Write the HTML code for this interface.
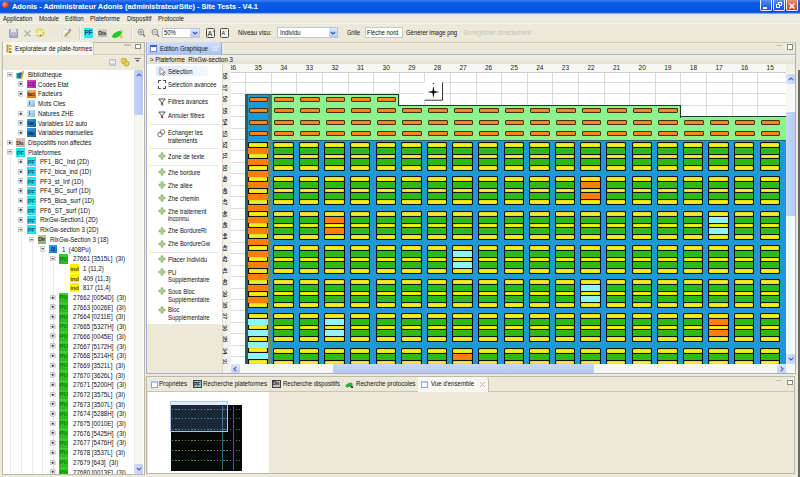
<!DOCTYPE html><html><head><meta charset="utf-8"><style>
*{margin:0;padding:0;box-sizing:border-box}
html,body{width:800px;height:477px;overflow:hidden;background:#ECE9D8;font-family:"Liberation Sans", sans-serif;position:relative}
div,span,svg{position:absolute}
.t{white-space:pre;line-height:1;color:#111;transform-origin:0 50%}
</style></head><body>
<div style="left:0px;top:0px;width:800px;height:13.8px;background:linear-gradient(#3a7ef4 0%,#0b5ae6 22%,#0056e6 70%,#0a4cd0 88%,#5a90ee 94%,#c8d8f4 100%)"></div>
<div style="left:2px;top:1.5px;width:6.8px;height:6.8px;border-radius:50%;background:radial-gradient(circle at 35% 35%,#ff9a70,#d03010 70%)"></div>
<span class="t" style="left:12px;top:2.63px;font-size:7.8px;transform:scaleX(0.950);font-weight:bold;color:#fff;-webkit-text-stroke:0.05px #fff">Adonis - Administrateur Adonis (administrateurSite) - Site Tests - V4.1</span>
<div style="left:760px;top:0px;width:11.5px;height:11px;background:linear-gradient(#5a92f8,#2a64e8 60%,#2058d8);border:1px solid #e8eeff;border-top:none;border-radius:0 0 2px 2px"></div>
<div style="left:773px;top:0px;width:11.5px;height:11px;background:linear-gradient(#5a92f8,#2a64e8 60%,#2058d8);border:1px solid #e8eeff;border-top:none;border-radius:0 0 2px 2px"></div>
<div style="left:786px;top:0px;width:11.5px;height:11px;background:linear-gradient(#f0906a,#dc5a30 60%,#c84820);border:1px solid #e8eeff;border-top:none;border-radius:0 0 2px 2px"></div>
<div style="left:762.5px;top:7px;width:4.5px;height:1.6px;background:#fff"></div>
<div style="left:777.5px;top:2.2px;width:4.5px;height:3.8px;border:1px solid #fff;border-top-width:1.3px"></div>
<div style="left:775.8px;top:4.2px;width:4.5px;height:3.8px;border:1px solid #fff;border-top-width:1.3px;background:#3a70ea"></div>
<svg style="left:788px;top:1.5px" width="8" height="8"><path d="M1.5 1.5L6.5 6.5M6.5 1.5L1.5 6.5" stroke="#fff" stroke-width="1.6"/></svg>
<div style="left:0px;top:13.6px;width:800px;height:10.6px;background:#EDEADF;border-top:1px solid #dfe6f4;border-bottom:1px solid #f6f3e6"></div>
<span class="t" style="left:3px;top:14.98px;font-size:7px;transform:scaleX(0.853);">Application</span>
<span class="t" style="left:38.5px;top:14.98px;font-size:7px;transform:scaleX(0.867);">Module</span>
<span class="t" style="left:65px;top:14.98px;font-size:7px;transform:scaleX(0.878);">Edition</span>
<span class="t" style="left:89.8px;top:14.98px;font-size:7px;transform:scaleX(0.883);">Plateforme</span>
<span class="t" style="left:126.5px;top:14.98px;font-size:7px;transform:scaleX(0.863);">Dispositif</span>
<span class="t" style="left:157.7px;top:14.98px;font-size:7px;transform:scaleX(0.876);">Protocole</span>
<div style="left:0px;top:24px;width:800px;height:17px;background:#ECE9D8"></div>
<div style="left:9px;top:28.5px;width:9px;height:9px;background:linear-gradient(#c9c9dc,#a9a9c6);border:1px solid #9c9cb8;border-radius:1px"></div>
<div style="left:11px;top:29px;width:5px;height:3px;background:#e6e6f0"></div>
<svg style="left:23px;top:28.5px" width="9" height="9"><path d="M1.5 1.5L7.5 7.5M7.5 1.5L1.5 7.5" stroke="#b4b4ac" stroke-width="1.5"/></svg>
<svg style="left:35px;top:28px" width="10" height="9"><path d="M1.5 5A3.5 3.5 0 0 1 8 3" stroke="#e0dc70" stroke-width="2.4" fill="none"/><path d="M8.5 4A3.5 3.5 0 0 1 2 6.5" stroke="#d8d468" stroke-width="2.4" fill="none"/><circle cx="4.5" cy="4.5" r="1.8" fill="#f0f0a8"/><circle cx="5.5" cy="7.5" r="0.7" fill="#606030"/></svg>
<div style="left:49px;top:31px;width:8px;height:5px;background:#e8e6dc;border-radius:1px"></div>
<div style="left:62px;top:28.5px;width:7.5px;height:9px;background:linear-gradient(135deg,#f8f8fb,#e4e4ee);border:1px solid #dcdce4"></div>
<svg style="left:63px;top:28px" width="9" height="10"><path d="M1.8 8.2L6.8 3" stroke="#a8b040" stroke-width="2"/><path d="M6.2 2.8L7.8 1.4" stroke="#9088c8" stroke-width="2"/></svg>
<div style="left:79px;top:26px;width:2px;height:14px;background:#d8d4c4;border-right:1px solid #f6f4ec"></div>
<div style="left:83.5px;top:28px;width:9.5px;height:10px;background:#25e8f0"></div>
<span class="t" style="left:84.5px;top:30px;font-size:6.5px;font-weight:bold;color:#104080;letter-spacing:-0.3px">PF</span>
<div style="left:98px;top:28.5px;width:9px;height:8px;background:linear-gradient(#cfcdc4,#bdbab0)"></div>
<span class="t" style="left:98.3px;top:31px;font-size:5.5px;font-weight:bold;color:#303030;letter-spacing:-0.3px">Dis</span>
<svg style="left:111px;top:28px" width="14" height="11"><ellipse cx="6" cy="6.5" rx="5.5" ry="2.6" transform="rotate(-30 6 6.5)" fill="#22c830"/><circle cx="10" cy="8.5" r="1.8" fill="#e0c850"/><path d="M9 2Q11 1 12 4" stroke="#c0d0c0" fill="none"/></svg>
<div style="left:130.5px;top:26px;width:2px;height:14px;background:#d8d4c4;border-right:1px solid #f6f4ec"></div>
<svg style="left:137px;top:28px" width="9" height="10"><circle cx="3.8" cy="4" r="2.8" fill="#f0f0f0" stroke="#8a8a8a" stroke-width="1"/><path d="M5.8 6L8 8.5" stroke="#808080" stroke-width="1.4"/><path d="M2.4 4H5.2M3.8 2.6V5.4" stroke="#606060" stroke-width="0.8"/></svg>
<svg style="left:151px;top:28px" width="9" height="10"><circle cx="3.8" cy="4" r="2.8" fill="#f0f0f0" stroke="#8a8a8a" stroke-width="1"/><path d="M5.8 6L8 8.5" stroke="#808080" stroke-width="1.4"/><path d="M2.4 4H5.2" stroke="#606060" stroke-width="0.8"/></svg>
<div style="left:161.5px;top:27.7px;width:38.2px;height:10.6px;background:#fff;border:1px solid #b8c8e0"></div>
<span class="t" style="left:164.0px;top:29.08px;font-size:7px;transform:scaleX(0.850);">50%</span>
<div style="left:190.2px;top:28.7px;width:8.5px;height:8.6px;background:linear-gradient(#dfe6fb,#b9c9f4);border-radius:1px"></div>
<svg style="left:191.89999999999998px;top:31.0px" width="6" height="4"><path d="M0.8 0.8L3 3L5.2 0.8" stroke="#3050a0" stroke-width="1.2" fill="none"/></svg>
<div style="left:206px;top:28px;width:9px;height:10px;border:1px solid #4a4a4a;border-radius:1.5px;background:#f4f3ee"></div>
<div style="left:219.5px;top:28px;width:9px;height:10px;border:1px solid #4a4a4a;border-radius:1.5px;background:#f4f3ee"></div>
<span class="t" style="left:207.6px;top:29.5px;font-size:7px;-webkit-text-stroke:0">A</span>
<span class="t" style="left:212.2px;top:28.6px;font-size:4px;-webkit-text-stroke:0">+</span>
<span class="t" style="left:221.6px;top:31px;font-size:5.5px;-webkit-text-stroke:0">A</span>
<span class="t" style="left:225.3px;top:28.8px;font-size:4px;-webkit-text-stroke:0">-</span>
<span class="t" style="left:238px;top:28.68px;font-size:7px;transform:scaleX(0.879);">Niveau visu:</span>
<div style="left:277px;top:27px;width:61px;height:11.3px;background:#fff;border:1px solid #b8c8e0"></div>
<span class="t" style="left:279.5px;top:28.73px;font-size:7px;transform:scaleX(0.850);">Individu</span>
<div style="left:328.5px;top:28px;width:8.5px;height:9.3px;background:linear-gradient(#dfe6fb,#b9c9f4);border-radius:1px"></div>
<svg style="left:330.2px;top:30.65px" width="6" height="4"><path d="M0.8 0.8L3 3L5.2 0.8" stroke="#3050a0" stroke-width="1.2" fill="none"/></svg>
<span class="t" style="left:347px;top:28.68px;font-size:7px;transform:scaleX(0.796);">Grille</span>
<div style="left:365px;top:27.3px;width:38px;height:10.7px;background:#fff;border:1px solid #c8c8c0"></div>
<span class="t" style="left:367px;top:28.68px;font-size:7px;transform:scaleX(0.850);">Flèche nord</span>
<span class="t" style="left:405.5px;top:28.68px;font-size:7px;transform:scaleX(0.846);">Générer image png</span>
<span class="t" style="left:464px;top:28.68px;font-size:7px;transform:scaleX(0.921);color:#c4c2b8;-webkit-text-stroke:0">Enregistrer directement</span>
<div style="left:1.5px;top:41.5px;width:143px;height:433px;background:#fff;border:1px solid #bdb9a8"></div>
<div style="left:2.5px;top:42.5px;width:141px;height:27.2px;background:#ECE9D8"></div>
<div style="left:2.5px;top:54px;width:141px;height:1px;background:#d2cebd"></div>
<div style="left:3px;top:42px;width:91px;height:12.5px;background:#f7f6f0;border-right:1px solid #cfcbbb;border-radius:0 3px 0 0"></div>
<svg style="left:6px;top:44px" width="6" height="9"><rect x="0.5" y="0.5" width="2" height="8" fill="#c89838"/><rect x="3" y="1" width="2.5" height="2" fill="#d0a040"/><rect x="3" y="4" width="2.5" height="2" fill="#d0a040"/><rect x="3" y="7" width="2.5" height="1.8" fill="#a07020"/></svg>
<span class="t" style="left:15px;top:44.68px;font-size:7px;transform:scaleX(0.892);">Explorateur de plate-formes</span>
<div style="left:124px;top:44.3px;width:7px;height:1.5px;background:#c8c4b4"></div>
<div style="left:135.3px;top:44px;width:5.6px;height:5.3px;background:#fff;border:1px solid #8c8a80;border-top-width:1.5px"></div>
<div style="left:109px;top:58.6px;width:7px;height:7.6px;background:linear-gradient(#e4e8f0,#c4ccd8);border-radius:1px;border:1px solid #b8c0cc"></div>
<div style="left:110px;top:61.5px;width:5px;height:1.2px;background:#fff"></div>
<svg style="left:120px;top:57px" width="10" height="10"><circle cx="4" cy="4" r="2.8" fill="#e8d050" stroke="#c0a020" stroke-width="0.8"/><circle cx="6.5" cy="6.5" r="2.6" fill="#e8d050" stroke="#c0a020" stroke-width="0.8"/></svg>
<svg style="left:134px;top:58px" width="7" height="5"><path d="M0.5 0.5H6.5" stroke="#505050" stroke-width="0.8"/><path d="M1.5 2L3.5 4L5.5 2Z" fill="#505050"/></svg>
<div style="left:10px;top:155.06px;width:0.8px;height:318.94px;background:#eaeaf2"></div>
<div style="left:20.6px;top:232.62px;width:0.8px;height:241.38px;background:#eaeaf2"></div>
<div style="left:31.5px;top:242.315px;width:0.8px;height:231.685px;background:#eaeaf2"></div>
<div style="left:42.3px;top:252.01px;width:0.8px;height:221.99px;background:#eaeaf2"></div>
<div style="left:53px;top:261.70500000000004px;width:0.8px;height:212.29499999999996px;background:#eaeaf2"></div>
<div style="left:134px;top:70px;width:9px;height:404px;background:#f6f6f2;border-left:1px solid #eeeee8"></div>
<div style="left:134px;top:70px;width:8.5px;height:45px;background:linear-gradient(90deg,#c7d3f7,#b7c6f3);border-radius:1px"></div>
<svg style="left:135.5px;top:73px" width="6" height="4"><path d="M0.8 3.2L3 1L5.2 3.2" stroke="#4a64b0" stroke-width="1.2" fill="none"/></svg>
<div style="left:134px;top:464px;width:8.5px;height:10px;background:linear-gradient(90deg,#d5ddf8,#c1cdf4);border-radius:1px"></div>
<svg style="left:135.5px;top:467px" width="6" height="4"><path d="M0.8 0.8L3 3L5.2 0.8" stroke="#4a64b0" stroke-width="1.2" fill="none"/></svg>
<div style="left:2.5px;top:69.7px;width:131.5px;height:404px;overflow:hidden">
<svg style="left:4.75px;top:2.05px" width="5.5" height="5.5"><rect x="0.35" y="0.35" width="4.8" height="4.8" rx="0.9" fill="#f4f4f0" stroke="#a4a4a0" stroke-width="0.7"/><path d="M1.6 2.75H3.9" stroke="#202020" stroke-width="0.9"/></svg>
<svg style="left:13.5px;top:-2.6645352591003757e-15px" width="9" height="9"><rect x="0.5" y="3" width="3" height="5.5" fill="#1a8a8a"/><rect x="3" y="2.5" width="3" height="6" fill="#3060a0"/><rect x="5.8" y="0.5" width="1.6" height="8" fill="#d0b040" transform="rotate(15 6 4)"/></svg>
<span class="t" style="left:25.0px;top:1.38px;font-size:7px;transform:scaleX(0.880);">Bibliotheque</span>
<svg style="left:15.35px;top:11.74px" width="5.5" height="5.5"><rect x="0.35" y="0.35" width="4.8" height="4.8" rx="0.9" fill="#f4f4f0" stroke="#a4a4a0" stroke-width="0.7"/><path d="M1.6 2.75H3.9" stroke="#202020" stroke-width="0.9"/><path d="M2.75 1.6V3.9" stroke="#202020" stroke-width="0.9"/></svg>
<div style="left:24.5px;top:10.19499999999999px;width:9px;height:8.5px;background:linear-gradient(135deg,#f040c0,#c020a0)"></div>
<span class="t" style="left:25.1px;top:12.49499999999999px;font-size:5.6px;font-weight:bold;color:#70108a;letter-spacing:-0.3px">CE</span>
<span class="t" style="left:35.5px;top:11.07px;font-size:7px;transform:scaleX(0.880);">Codes Etat</span>
<svg style="left:15.35px;top:21.44px" width="5.5" height="5.5"><rect x="0.35" y="0.35" width="4.8" height="4.8" rx="0.9" fill="#f4f4f0" stroke="#a4a4a0" stroke-width="0.7"/><path d="M1.6 2.75H3.9" stroke="#202020" stroke-width="0.9"/><path d="M2.75 1.6V3.9" stroke="#202020" stroke-width="0.9"/></svg>
<div style="left:24.5px;top:19.889999999999997px;width:9px;height:8.5px;background:linear-gradient(#ffb050,#f07010)"></div>
<span class="t" style="left:24.7px;top:22.889999999999997px;font-size:4.8px;font-weight:bold;color:#602000;letter-spacing:-0.3px">fact</span>
<span class="t" style="left:35.5px;top:20.77px;font-size:7px;transform:scaleX(0.880);">Facteurs</span>
<div style="left:24.5px;top:30.585000000000004px;width:8px;height:7px;background:linear-gradient(135deg,#d8ecf8,#88b8e0)"></div>
<div style="left:26.5px;top:31.585000000000004px;width:1px;height:4px;background:#5080b0"></div>
<span class="t" style="left:35.5px;top:30.47px;font-size:7px;transform:scaleX(0.880);">Mots Cles</span>
<svg style="left:15.35px;top:40.83px" width="5.5" height="5.5"><rect x="0.35" y="0.35" width="4.8" height="4.8" rx="0.9" fill="#f4f4f0" stroke="#a4a4a0" stroke-width="0.7"/><path d="M1.6 2.75H3.9" stroke="#202020" stroke-width="0.9"/><path d="M2.75 1.6V3.9" stroke="#202020" stroke-width="0.9"/></svg>
<div style="left:24.5px;top:40.28px;width:8px;height:7px;background:linear-gradient(135deg,#d8ecf8,#88b8e0)"></div>
<div style="left:26.5px;top:41.28px;width:1px;height:4px;background:#5080b0"></div>
<span class="t" style="left:35.5px;top:40.16px;font-size:7px;transform:scaleX(0.880);">Natures ZHE</span>
<svg style="left:15.35px;top:50.52px" width="5.5" height="5.5"><rect x="0.35" y="0.35" width="4.8" height="4.8" rx="0.9" fill="#f4f4f0" stroke="#a4a4a0" stroke-width="0.7"/><path d="M1.6 2.75H3.9" stroke="#202020" stroke-width="0.9"/><path d="M2.75 1.6V3.9" stroke="#202020" stroke-width="0.9"/></svg>
<div style="left:24.5px;top:48.974999999999994px;width:9px;height:8.5px;background:linear-gradient(135deg,#40a0e8,#0860b0)"></div>
<span class="t" style="left:24.8px;top:52.175px;font-size:4.8px;font-weight:bold;color:#082858;letter-spacing:-0.3px">Var</span>
<span class="t" style="left:35.5px;top:49.85px;font-size:7px;transform:scaleX(0.880);">Variables 1/2 auto</span>
<svg style="left:15.35px;top:60.22px" width="5.5" height="5.5"><rect x="0.35" y="0.35" width="4.8" height="4.8" rx="0.9" fill="#f4f4f0" stroke="#a4a4a0" stroke-width="0.7"/><path d="M1.6 2.75H3.9" stroke="#202020" stroke-width="0.9"/><path d="M2.75 1.6V3.9" stroke="#202020" stroke-width="0.9"/></svg>
<div style="left:24.5px;top:58.670000000000016px;width:9px;height:8.5px;background:linear-gradient(135deg,#40a0e8,#0860b0)"></div>
<span class="t" style="left:24.8px;top:61.87000000000002px;font-size:4.8px;font-weight:bold;color:#082858;letter-spacing:-0.3px">Var</span>
<span class="t" style="left:35.5px;top:59.55px;font-size:7px;transform:scaleX(0.880);">Variables manuelles</span>
<svg style="left:4.75px;top:69.92px" width="5.5" height="5.5"><rect x="0.35" y="0.35" width="4.8" height="4.8" rx="0.9" fill="#f4f4f0" stroke="#a4a4a0" stroke-width="0.7"/><path d="M1.6 2.75H3.9" stroke="#202020" stroke-width="0.9"/><path d="M2.75 1.6V3.9" stroke="#202020" stroke-width="0.9"/></svg>
<div style="left:13.5px;top:68.36500000000001px;width:9px;height:8.5px;background:linear-gradient(135deg,#e8c0b0,#c8b8a8)"></div>
<span class="t" style="left:13.8px;top:71.36500000000001px;font-size:5px;font-weight:bold;color:#303030;letter-spacing:-0.3px">Dis</span>
<span class="t" style="left:25.2px;top:69.25px;font-size:7px;transform:scaleX(0.880);">Dispositifs non affectés</span>
<svg style="left:4.75px;top:79.61px" width="5.5" height="5.5"><rect x="0.35" y="0.35" width="4.8" height="4.8" rx="0.9" fill="#f4f4f0" stroke="#a4a4a0" stroke-width="0.7"/><path d="M1.6 2.75H3.9" stroke="#202020" stroke-width="0.9"/></svg>
<div style="left:13.5px;top:78.06px;width:9px;height:8.8px;background:#28e4ec"></div>
<span class="t" style="left:14.3px;top:80.06px;font-size:6px;font-weight:bold;color:#0a6078;-webkit-text-stroke:0;letter-spacing:-0.3px">PF</span>
<span class="t" style="left:25.2px;top:78.94px;font-size:7px;transform:scaleX(0.880);">Plateformes</span>
<svg style="left:15.45px;top:89.30px" width="5.5" height="5.5"><rect x="0.35" y="0.35" width="4.8" height="4.8" rx="0.9" fill="#f4f4f0" stroke="#a4a4a0" stroke-width="0.7"/><path d="M1.6 2.75H3.9" stroke="#202020" stroke-width="0.9"/><path d="M2.75 1.6V3.9" stroke="#202020" stroke-width="0.9"/></svg>
<div style="left:24.5px;top:87.755px;width:9px;height:8.8px;background:#28e4ec"></div>
<span class="t" style="left:25.3px;top:89.755px;font-size:6px;font-weight:bold;color:#0a6078;-webkit-text-stroke:0;letter-spacing:-0.3px">PF</span>
<span class="t" style="left:37.3px;top:88.63px;font-size:7px;transform:scaleX(0.880);">PF1_BC_Ind (2D)</span>
<svg style="left:15.45px;top:99.00px" width="5.5" height="5.5"><rect x="0.35" y="0.35" width="4.8" height="4.8" rx="0.9" fill="#f4f4f0" stroke="#a4a4a0" stroke-width="0.7"/><path d="M1.6 2.75H3.9" stroke="#202020" stroke-width="0.9"/><path d="M2.75 1.6V3.9" stroke="#202020" stroke-width="0.9"/></svg>
<div style="left:24.5px;top:97.44999999999999px;width:9px;height:8.8px;background:#28e4ec"></div>
<span class="t" style="left:25.3px;top:99.44999999999999px;font-size:6px;font-weight:bold;color:#0a6078;-webkit-text-stroke:0;letter-spacing:-0.3px">PF</span>
<span class="t" style="left:37.3px;top:98.33px;font-size:7px;transform:scaleX(0.880);">PF2_bica_ind (1D)</span>
<svg style="left:15.45px;top:108.70px" width="5.5" height="5.5"><rect x="0.35" y="0.35" width="4.8" height="4.8" rx="0.9" fill="#f4f4f0" stroke="#a4a4a0" stroke-width="0.7"/><path d="M1.6 2.75H3.9" stroke="#202020" stroke-width="0.9"/><path d="M2.75 1.6V3.9" stroke="#202020" stroke-width="0.9"/></svg>
<div style="left:24.5px;top:107.14500000000001px;width:9px;height:8.8px;background:#28e4ec"></div>
<span class="t" style="left:25.3px;top:109.14500000000001px;font-size:6px;font-weight:bold;color:#0a6078;-webkit-text-stroke:0;letter-spacing:-0.3px">PF</span>
<span class="t" style="left:37.3px;top:108.03px;font-size:7px;transform:scaleX(0.880);">PF3_st_Inf (1D)</span>
<svg style="left:15.45px;top:118.39px" width="5.5" height="5.5"><rect x="0.35" y="0.35" width="4.8" height="4.8" rx="0.9" fill="#f4f4f0" stroke="#a4a4a0" stroke-width="0.7"/><path d="M1.6 2.75H3.9" stroke="#202020" stroke-width="0.9"/><path d="M2.75 1.6V3.9" stroke="#202020" stroke-width="0.9"/></svg>
<div style="left:24.5px;top:116.84px;width:9px;height:8.8px;background:#28e4ec"></div>
<span class="t" style="left:25.3px;top:118.84px;font-size:6px;font-weight:bold;color:#0a6078;-webkit-text-stroke:0;letter-spacing:-0.3px">PF</span>
<span class="t" style="left:37.3px;top:117.72px;font-size:7px;transform:scaleX(0.880);">PF4_BC_surf (1D)</span>
<svg style="left:15.45px;top:128.08px" width="5.5" height="5.5"><rect x="0.35" y="0.35" width="4.8" height="4.8" rx="0.9" fill="#f4f4f0" stroke="#a4a4a0" stroke-width="0.7"/><path d="M1.6 2.75H3.9" stroke="#202020" stroke-width="0.9"/><path d="M2.75 1.6V3.9" stroke="#202020" stroke-width="0.9"/></svg>
<div style="left:24.5px;top:126.53499999999998px;width:9px;height:8.8px;background:#28e4ec"></div>
<span class="t" style="left:25.3px;top:128.53499999999997px;font-size:6px;font-weight:bold;color:#0a6078;-webkit-text-stroke:0;letter-spacing:-0.3px">PF</span>
<span class="t" style="left:37.3px;top:127.41px;font-size:7px;transform:scaleX(0.880);">PF5_Bica_surf (1D)</span>
<svg style="left:15.45px;top:137.78px" width="5.5" height="5.5"><rect x="0.35" y="0.35" width="4.8" height="4.8" rx="0.9" fill="#f4f4f0" stroke="#a4a4a0" stroke-width="0.7"/><path d="M1.6 2.75H3.9" stroke="#202020" stroke-width="0.9"/><path d="M2.75 1.6V3.9" stroke="#202020" stroke-width="0.9"/></svg>
<div style="left:24.5px;top:136.23000000000002px;width:9px;height:8.8px;background:#28e4ec"></div>
<span class="t" style="left:25.3px;top:138.23000000000002px;font-size:6px;font-weight:bold;color:#0a6078;-webkit-text-stroke:0;letter-spacing:-0.3px">PF</span>
<span class="t" style="left:37.3px;top:137.11px;font-size:7px;transform:scaleX(0.880);">PF6_ST_surf (1D)</span>
<svg style="left:15.45px;top:147.48px" width="5.5" height="5.5"><rect x="0.35" y="0.35" width="4.8" height="4.8" rx="0.9" fill="#f4f4f0" stroke="#a4a4a0" stroke-width="0.7"/><path d="M1.6 2.75H3.9" stroke="#202020" stroke-width="0.9"/><path d="M2.75 1.6V3.9" stroke="#202020" stroke-width="0.9"/></svg>
<div style="left:24.5px;top:145.925px;width:9px;height:8.8px;background:#28e4ec"></div>
<span class="t" style="left:25.3px;top:147.925px;font-size:6px;font-weight:bold;color:#0a6078;-webkit-text-stroke:0;letter-spacing:-0.3px">PF</span>
<span class="t" style="left:37.3px;top:146.81px;font-size:7px;transform:scaleX(0.880);">RixGw-Section1 (2D)</span>
<svg style="left:15.45px;top:157.17px" width="5.5" height="5.5"><rect x="0.35" y="0.35" width="4.8" height="4.8" rx="0.9" fill="#f4f4f0" stroke="#a4a4a0" stroke-width="0.7"/><path d="M1.6 2.75H3.9" stroke="#202020" stroke-width="0.9"/></svg>
<div style="left:24.5px;top:155.62px;width:9px;height:8.8px;background:#28e4ec"></div>
<span class="t" style="left:25.3px;top:157.62px;font-size:6px;font-weight:bold;color:#0a6078;-webkit-text-stroke:0;letter-spacing:-0.3px">PF</span>
<span class="t" style="left:37.3px;top:156.50px;font-size:7px;transform:scaleX(0.880);">RixGw-section 3 (2D)</span>
<svg style="left:26.25px;top:166.87px" width="5.5" height="5.5"><rect x="0.35" y="0.35" width="4.8" height="4.8" rx="0.9" fill="#f4f4f0" stroke="#a4a4a0" stroke-width="0.7"/><path d="M1.6 2.75H3.9" stroke="#202020" stroke-width="0.9"/></svg>
<div style="left:35.3px;top:165.315px;width:8px;height:8.5px;background:linear-gradient(#b8c8a0,#90a878)"></div>
<span class="t" style="left:35.5px;top:167.515px;font-size:5.6px;font-weight:bold;color:#283818;-webkit-text-stroke:0;letter-spacing:-0.3px">Dir</span>
<span class="t" style="left:47.9px;top:166.20px;font-size:7px;transform:scaleX(0.880);">RixGw-Section 3 (18)</span>
<svg style="left:37.05px;top:176.56px" width="5.5" height="5.5"><rect x="0.35" y="0.35" width="4.8" height="4.8" rx="0.9" fill="#f4f4f0" stroke="#a4a4a0" stroke-width="0.7"/><path d="M1.6 2.75H3.9" stroke="#202020" stroke-width="0.9"/></svg>
<div style="left:46.1px;top:175.01px;width:8.5px;height:8.5px;background:linear-gradient(135deg,#40a8f0,#1070c8)"></div>
<span class="t" style="left:48.6px;top:177.41px;font-size:5.5px;font-weight:bold;color:#0a3070">B</span>
<span class="t" style="left:59.2px;top:175.89px;font-size:7px;transform:scaleX(0.880);">1  (408Pu)</span>
<svg style="left:47.75px;top:186.26px" width="5.5" height="5.5"><rect x="0.35" y="0.35" width="4.8" height="4.8" rx="0.9" fill="#f4f4f0" stroke="#a4a4a0" stroke-width="0.7"/><path d="M1.6 2.75H3.9" stroke="#202020" stroke-width="0.9"/></svg>
<div style="left:56.5px;top:184.20500000000004px;width:9.2px;height:9.7px;background:linear-gradient(#30d818,#20c010)"></div>
<span class="t" style="left:57.3px;top:186.90500000000003px;font-size:5.8px;font-weight:bold;color:#0a7a08;-webkit-text-stroke:0;letter-spacing:-0.2px">PU</span>
<span class="t" style="left:70.0px;top:185.59px;font-size:7px;transform:scaleX(0.880);">27661 [3515L]  (3I)</span>
<div style="left:67.5px;top:194.39999999999998px;width:9px;height:8.5px;background:#fff200"></div>
<span class="t" style="left:67.8px;top:196.2px;font-size:6px;font-weight:bold;color:#5a5000;-webkit-text-stroke:0;letter-spacing:-0.2px">ind</span>
<span class="t" style="left:80.5px;top:195.28px;font-size:7px;transform:scaleX(0.880);">1 (11,2)</span>
<div style="left:67.5px;top:204.09500000000003px;width:9px;height:8.5px;background:#fff200"></div>
<span class="t" style="left:67.8px;top:205.89500000000004px;font-size:6px;font-weight:bold;color:#5a5000;-webkit-text-stroke:0;letter-spacing:-0.2px">ind</span>
<span class="t" style="left:80.5px;top:204.98px;font-size:7px;transform:scaleX(0.880);">409 (11,3)</span>
<div style="left:67.5px;top:213.79000000000002px;width:9px;height:8.5px;background:#fff200"></div>
<span class="t" style="left:67.8px;top:215.59000000000003px;font-size:6px;font-weight:bold;color:#5a5000;-webkit-text-stroke:0;letter-spacing:-0.2px">ind</span>
<span class="t" style="left:80.5px;top:214.67px;font-size:7px;transform:scaleX(0.880);">817 (11,4)</span>
<svg style="left:47.75px;top:225.04px" width="5.5" height="5.5"><rect x="0.35" y="0.35" width="4.8" height="4.8" rx="0.9" fill="#f4f4f0" stroke="#a4a4a0" stroke-width="0.7"/><path d="M1.6 2.75H3.9" stroke="#202020" stroke-width="0.9"/><path d="M2.75 1.6V3.9" stroke="#202020" stroke-width="0.9"/></svg>
<div style="left:56.5px;top:222.985px;width:9.2px;height:9.7px;background:linear-gradient(#30d818,#20c010)"></div>
<span class="t" style="left:57.3px;top:225.685px;font-size:5.8px;font-weight:bold;color:#0a7a08;-webkit-text-stroke:0;letter-spacing:-0.2px">PU</span>
<span class="t" style="left:70.0px;top:224.37px;font-size:7px;transform:scaleX(0.880);">27662 [0054D]  (3I)</span>
<svg style="left:47.75px;top:234.73px" width="5.5" height="5.5"><rect x="0.35" y="0.35" width="4.8" height="4.8" rx="0.9" fill="#f4f4f0" stroke="#a4a4a0" stroke-width="0.7"/><path d="M1.6 2.75H3.9" stroke="#202020" stroke-width="0.9"/><path d="M2.75 1.6V3.9" stroke="#202020" stroke-width="0.9"/></svg>
<div style="left:56.5px;top:232.68px;width:9.2px;height:9.7px;background:linear-gradient(#30d818,#20c010)"></div>
<span class="t" style="left:57.3px;top:235.38px;font-size:5.8px;font-weight:bold;color:#0a7a08;-webkit-text-stroke:0;letter-spacing:-0.2px">PU</span>
<span class="t" style="left:70.0px;top:234.06px;font-size:7px;transform:scaleX(0.880);">27663 [0026E]  (3I)</span>
<svg style="left:47.75px;top:244.43px" width="5.5" height="5.5"><rect x="0.35" y="0.35" width="4.8" height="4.8" rx="0.9" fill="#f4f4f0" stroke="#a4a4a0" stroke-width="0.7"/><path d="M1.6 2.75H3.9" stroke="#202020" stroke-width="0.9"/><path d="M2.75 1.6V3.9" stroke="#202020" stroke-width="0.9"/></svg>
<div style="left:56.5px;top:242.375px;width:9.2px;height:9.7px;background:linear-gradient(#30d818,#20c010)"></div>
<span class="t" style="left:57.3px;top:245.075px;font-size:5.8px;font-weight:bold;color:#0a7a08;-webkit-text-stroke:0;letter-spacing:-0.2px">PU</span>
<span class="t" style="left:70.0px;top:243.76px;font-size:7px;transform:scaleX(0.880);">27664 [0211E]  (3I)</span>
<svg style="left:47.75px;top:254.12px" width="5.5" height="5.5"><rect x="0.35" y="0.35" width="4.8" height="4.8" rx="0.9" fill="#f4f4f0" stroke="#a4a4a0" stroke-width="0.7"/><path d="M1.6 2.75H3.9" stroke="#202020" stroke-width="0.9"/><path d="M2.75 1.6V3.9" stroke="#202020" stroke-width="0.9"/></svg>
<div style="left:56.5px;top:252.07px;width:9.2px;height:9.7px;background:linear-gradient(#30d818,#20c010)"></div>
<span class="t" style="left:57.3px;top:254.76999999999998px;font-size:5.8px;font-weight:bold;color:#0a7a08;-webkit-text-stroke:0;letter-spacing:-0.2px">PU</span>
<span class="t" style="left:70.0px;top:253.45px;font-size:7px;transform:scaleX(0.880);">27665 [5327H]  (3I)</span>
<svg style="left:47.75px;top:263.81px" width="5.5" height="5.5"><rect x="0.35" y="0.35" width="4.8" height="4.8" rx="0.9" fill="#f4f4f0" stroke="#a4a4a0" stroke-width="0.7"/><path d="M1.6 2.75H3.9" stroke="#202020" stroke-width="0.9"/><path d="M2.75 1.6V3.9" stroke="#202020" stroke-width="0.9"/></svg>
<div style="left:56.5px;top:261.765px;width:9.2px;height:9.7px;background:linear-gradient(#30d818,#20c010)"></div>
<span class="t" style="left:57.3px;top:264.465px;font-size:5.8px;font-weight:bold;color:#0a7a08;-webkit-text-stroke:0;letter-spacing:-0.2px">PU</span>
<span class="t" style="left:70.0px;top:263.14px;font-size:7px;transform:scaleX(0.880);">27666 [0045E]  (3I)</span>
<svg style="left:47.75px;top:273.51px" width="5.5" height="5.5"><rect x="0.35" y="0.35" width="4.8" height="4.8" rx="0.9" fill="#f4f4f0" stroke="#a4a4a0" stroke-width="0.7"/><path d="M1.6 2.75H3.9" stroke="#202020" stroke-width="0.9"/><path d="M2.75 1.6V3.9" stroke="#202020" stroke-width="0.9"/></svg>
<div style="left:56.5px;top:271.46000000000004px;width:9.2px;height:9.7px;background:linear-gradient(#30d818,#20c010)"></div>
<span class="t" style="left:57.3px;top:274.16px;font-size:5.8px;font-weight:bold;color:#0a7a08;-webkit-text-stroke:0;letter-spacing:-0.2px">PU</span>
<span class="t" style="left:70.0px;top:272.84px;font-size:7px;transform:scaleX(0.880);">27667 [5172H]  (3I)</span>
<svg style="left:47.75px;top:283.21px" width="5.5" height="5.5"><rect x="0.35" y="0.35" width="4.8" height="4.8" rx="0.9" fill="#f4f4f0" stroke="#a4a4a0" stroke-width="0.7"/><path d="M1.6 2.75H3.9" stroke="#202020" stroke-width="0.9"/><path d="M2.75 1.6V3.9" stroke="#202020" stroke-width="0.9"/></svg>
<div style="left:56.5px;top:281.15500000000003px;width:9.2px;height:9.7px;background:linear-gradient(#30d818,#20c010)"></div>
<span class="t" style="left:57.3px;top:283.855px;font-size:5.8px;font-weight:bold;color:#0a7a08;-webkit-text-stroke:0;letter-spacing:-0.2px">PU</span>
<span class="t" style="left:70.0px;top:282.54px;font-size:7px;transform:scaleX(0.880);">27668 [5214H]  (3I)</span>
<svg style="left:47.75px;top:292.90px" width="5.5" height="5.5"><rect x="0.35" y="0.35" width="4.8" height="4.8" rx="0.9" fill="#f4f4f0" stroke="#a4a4a0" stroke-width="0.7"/><path d="M1.6 2.75H3.9" stroke="#202020" stroke-width="0.9"/><path d="M2.75 1.6V3.9" stroke="#202020" stroke-width="0.9"/></svg>
<div style="left:56.5px;top:290.85px;width:9.2px;height:9.7px;background:linear-gradient(#30d818,#20c010)"></div>
<span class="t" style="left:57.3px;top:293.55px;font-size:5.8px;font-weight:bold;color:#0a7a08;-webkit-text-stroke:0;letter-spacing:-0.2px">PU</span>
<span class="t" style="left:70.0px;top:292.23px;font-size:7px;transform:scaleX(0.880);">27669 [3521L]  (3I)</span>
<svg style="left:47.75px;top:302.60px" width="5.5" height="5.5"><rect x="0.35" y="0.35" width="4.8" height="4.8" rx="0.9" fill="#f4f4f0" stroke="#a4a4a0" stroke-width="0.7"/><path d="M1.6 2.75H3.9" stroke="#202020" stroke-width="0.9"/><path d="M2.75 1.6V3.9" stroke="#202020" stroke-width="0.9"/></svg>
<div style="left:56.5px;top:300.545px;width:9.2px;height:9.7px;background:linear-gradient(#30d818,#20c010)"></div>
<span class="t" style="left:57.3px;top:303.245px;font-size:5.8px;font-weight:bold;color:#0a7a08;-webkit-text-stroke:0;letter-spacing:-0.2px">PU</span>
<span class="t" style="left:70.0px;top:301.93px;font-size:7px;transform:scaleX(0.880);">27670 [3626L]  (3I)</span>
<svg style="left:47.75px;top:312.29px" width="5.5" height="5.5"><rect x="0.35" y="0.35" width="4.8" height="4.8" rx="0.9" fill="#f4f4f0" stroke="#a4a4a0" stroke-width="0.7"/><path d="M1.6 2.75H3.9" stroke="#202020" stroke-width="0.9"/><path d="M2.75 1.6V3.9" stroke="#202020" stroke-width="0.9"/></svg>
<div style="left:56.5px;top:310.24px;width:9.2px;height:9.7px;background:linear-gradient(#30d818,#20c010)"></div>
<span class="t" style="left:57.3px;top:312.94px;font-size:5.8px;font-weight:bold;color:#0a7a08;-webkit-text-stroke:0;letter-spacing:-0.2px">PU</span>
<span class="t" style="left:70.0px;top:311.62px;font-size:7px;transform:scaleX(0.880);">27671 [5200H]  (3I)</span>
<svg style="left:47.75px;top:321.99px" width="5.5" height="5.5"><rect x="0.35" y="0.35" width="4.8" height="4.8" rx="0.9" fill="#f4f4f0" stroke="#a4a4a0" stroke-width="0.7"/><path d="M1.6 2.75H3.9" stroke="#202020" stroke-width="0.9"/><path d="M2.75 1.6V3.9" stroke="#202020" stroke-width="0.9"/></svg>
<div style="left:56.5px;top:319.935px;width:9.2px;height:9.7px;background:linear-gradient(#30d818,#20c010)"></div>
<span class="t" style="left:57.3px;top:322.635px;font-size:5.8px;font-weight:bold;color:#0a7a08;-webkit-text-stroke:0;letter-spacing:-0.2px">PU</span>
<span class="t" style="left:70.0px;top:321.31px;font-size:7px;transform:scaleX(0.880);">27672 [3575L]  (3I)</span>
<svg style="left:47.75px;top:331.68px" width="5.5" height="5.5"><rect x="0.35" y="0.35" width="4.8" height="4.8" rx="0.9" fill="#f4f4f0" stroke="#a4a4a0" stroke-width="0.7"/><path d="M1.6 2.75H3.9" stroke="#202020" stroke-width="0.9"/><path d="M2.75 1.6V3.9" stroke="#202020" stroke-width="0.9"/></svg>
<div style="left:56.5px;top:329.63px;width:9.2px;height:9.7px;background:linear-gradient(#30d818,#20c010)"></div>
<span class="t" style="left:57.3px;top:332.33px;font-size:5.8px;font-weight:bold;color:#0a7a08;-webkit-text-stroke:0;letter-spacing:-0.2px">PU</span>
<span class="t" style="left:70.0px;top:331.01px;font-size:7px;transform:scaleX(0.880);">27673 [3507L]  (3I)</span>
<svg style="left:47.75px;top:341.38px" width="5.5" height="5.5"><rect x="0.35" y="0.35" width="4.8" height="4.8" rx="0.9" fill="#f4f4f0" stroke="#a4a4a0" stroke-width="0.7"/><path d="M1.6 2.75H3.9" stroke="#202020" stroke-width="0.9"/><path d="M2.75 1.6V3.9" stroke="#202020" stroke-width="0.9"/></svg>
<div style="left:56.5px;top:339.325px;width:9.2px;height:9.7px;background:linear-gradient(#30d818,#20c010)"></div>
<span class="t" style="left:57.3px;top:342.025px;font-size:5.8px;font-weight:bold;color:#0a7a08;-webkit-text-stroke:0;letter-spacing:-0.2px">PU</span>
<span class="t" style="left:70.0px;top:340.70px;font-size:7px;transform:scaleX(0.880);">27674 [5288H]  (3I)</span>
<svg style="left:47.75px;top:351.07px" width="5.5" height="5.5"><rect x="0.35" y="0.35" width="4.8" height="4.8" rx="0.9" fill="#f4f4f0" stroke="#a4a4a0" stroke-width="0.7"/><path d="M1.6 2.75H3.9" stroke="#202020" stroke-width="0.9"/><path d="M2.75 1.6V3.9" stroke="#202020" stroke-width="0.9"/></svg>
<div style="left:56.5px;top:349.02px;width:9.2px;height:9.7px;background:linear-gradient(#30d818,#20c010)"></div>
<span class="t" style="left:57.3px;top:351.71999999999997px;font-size:5.8px;font-weight:bold;color:#0a7a08;-webkit-text-stroke:0;letter-spacing:-0.2px">PU</span>
<span class="t" style="left:70.0px;top:350.40px;font-size:7px;transform:scaleX(0.880);">27675 [0010E]  (3I)</span>
<svg style="left:47.75px;top:360.77px" width="5.5" height="5.5"><rect x="0.35" y="0.35" width="4.8" height="4.8" rx="0.9" fill="#f4f4f0" stroke="#a4a4a0" stroke-width="0.7"/><path d="M1.6 2.75H3.9" stroke="#202020" stroke-width="0.9"/><path d="M2.75 1.6V3.9" stroke="#202020" stroke-width="0.9"/></svg>
<div style="left:56.5px;top:358.71500000000003px;width:9.2px;height:9.7px;background:linear-gradient(#30d818,#20c010)"></div>
<span class="t" style="left:57.3px;top:361.415px;font-size:5.8px;font-weight:bold;color:#0a7a08;-webkit-text-stroke:0;letter-spacing:-0.2px">PU</span>
<span class="t" style="left:70.0px;top:360.10px;font-size:7px;transform:scaleX(0.880);">27676 [5425H]  (3I)</span>
<svg style="left:47.75px;top:370.46px" width="5.5" height="5.5"><rect x="0.35" y="0.35" width="4.8" height="4.8" rx="0.9" fill="#f4f4f0" stroke="#a4a4a0" stroke-width="0.7"/><path d="M1.6 2.75H3.9" stroke="#202020" stroke-width="0.9"/><path d="M2.75 1.6V3.9" stroke="#202020" stroke-width="0.9"/></svg>
<div style="left:56.5px;top:368.41px;width:9.2px;height:9.7px;background:linear-gradient(#30d818,#20c010)"></div>
<span class="t" style="left:57.3px;top:371.11px;font-size:5.8px;font-weight:bold;color:#0a7a08;-webkit-text-stroke:0;letter-spacing:-0.2px">PU</span>
<span class="t" style="left:70.0px;top:369.79px;font-size:7px;transform:scaleX(0.880);">27677 [5476H]  (3I)</span>
<svg style="left:47.75px;top:380.16px" width="5.5" height="5.5"><rect x="0.35" y="0.35" width="4.8" height="4.8" rx="0.9" fill="#f4f4f0" stroke="#a4a4a0" stroke-width="0.7"/><path d="M1.6 2.75H3.9" stroke="#202020" stroke-width="0.9"/><path d="M2.75 1.6V3.9" stroke="#202020" stroke-width="0.9"/></svg>
<div style="left:56.5px;top:378.105px;width:9.2px;height:9.7px;background:linear-gradient(#30d818,#20c010)"></div>
<span class="t" style="left:57.3px;top:380.805px;font-size:5.8px;font-weight:bold;color:#0a7a08;-webkit-text-stroke:0;letter-spacing:-0.2px">PU</span>
<span class="t" style="left:70.0px;top:379.49px;font-size:7px;transform:scaleX(0.880);">27678 [3537L]  (3I)</span>
<svg style="left:47.75px;top:389.85px" width="5.5" height="5.5"><rect x="0.35" y="0.35" width="4.8" height="4.8" rx="0.9" fill="#f4f4f0" stroke="#a4a4a0" stroke-width="0.7"/><path d="M1.6 2.75H3.9" stroke="#202020" stroke-width="0.9"/><path d="M2.75 1.6V3.9" stroke="#202020" stroke-width="0.9"/></svg>
<div style="left:56.5px;top:387.8px;width:9.2px;height:9.7px;background:linear-gradient(#30d818,#20c010)"></div>
<span class="t" style="left:57.3px;top:390.5px;font-size:5.8px;font-weight:bold;color:#0a7a08;-webkit-text-stroke:0;letter-spacing:-0.2px">PU</span>
<span class="t" style="left:70.0px;top:389.18px;font-size:7px;transform:scaleX(0.880);">27679 [643]  (3I)</span>
<svg style="left:47.75px;top:399.55px" width="5.5" height="5.5"><rect x="0.35" y="0.35" width="4.8" height="4.8" rx="0.9" fill="#f4f4f0" stroke="#a4a4a0" stroke-width="0.7"/><path d="M1.6 2.75H3.9" stroke="#202020" stroke-width="0.9"/><path d="M2.75 1.6V3.9" stroke="#202020" stroke-width="0.9"/></svg>
<div style="left:56.5px;top:397.495px;width:9.2px;height:9.7px;background:linear-gradient(#30d818,#20c010)"></div>
<span class="t" style="left:57.3px;top:400.195px;font-size:5.8px;font-weight:bold;color:#0a7a08;-webkit-text-stroke:0;letter-spacing:-0.2px">PU</span>
<span class="t" style="left:70.0px;top:398.88px;font-size:7px;transform:scaleX(0.880);">27680 [0013E]  (3I)</span>
</div>
<div style="left:146px;top:41.5px;width:649.5px;height:332px;background:#fff;border:1px solid #a8b0c6;border-top-color:#cfcbb9;border-left-color:#98b4e0"></div>
<div style="left:147px;top:42.5px;width:647.5px;height:12px;background:#ECE9D8"></div>
<div style="left:147px;top:54.4px;width:647.5px;height:1.3px;background:#a4bccc"></div>
<div style="left:147.5px;top:42.2px;width:74.5px;height:12.5px;background:linear-gradient(#d3e0fa,#a9c1f0);border-radius:0 3px 0 0;border-right:1px solid #8aa8e0"></div>
<div style="left:150px;top:44.5px;width:7px;height:7px;background:#fff;border:1px solid #6a8cc8;border-top:2px solid #3060c0"></div>
<span class="t" style="left:159.5px;top:44.88px;font-size:7px;transform:scaleX(0.853);">Edition Graphique</span>
<svg style="left:212px;top:45px" width="7" height="7"><path d="M1 1L6 6M6 1L1 6" stroke="#fff" stroke-width="1.3"/><path d="M1 1L6 6M6 1L1 6" stroke="#a0b0d0" stroke-width="0.5"/></svg>
<div style="left:776px;top:45px;width:6px;height:1.3px;background:#c4c0b0"></div>
<div style="left:787px;top:44.3px;width:6px;height:5.5px;background:#fff;border:1px solid #8c8a80;border-top-width:1.5px"></div>
<div style="left:147px;top:55.3px;width:647.5px;height:8.7px;background:linear-gradient(#f2f0e6,#e4e0d0)"></div>
<span class="t" style="left:150px;top:55.68px;font-size:7px;transform:scaleX(0.876);">&gt; Plateforme  RixGw-section 3</span>
<div style="left:147px;top:64px;width:74.5px;height:309px;background:#ECE9D8"></div>
<div style="left:147px;top:64px;width:74.5px;height:260px;background:#fff"></div>
<div style="left:156px;top:65.8px;width:52px;height:10.5px;background:linear-gradient(90deg,#dfe7f8,#f4f7fd);border-radius:1px"></div>
<div style="left:150px;top:93.6px;width:69px;height:1px;background:#e8e6dc"></div>
<div style="left:150px;top:124.3px;width:69px;height:1px;background:#e8e6dc"></div>
<div style="left:150px;top:147.7px;width:69px;height:1px;background:#e8e6dc"></div>
<div style="left:150px;top:165px;width:69px;height:1px;background:#e8e6dc"></div>
<div style="left:150px;top:251.9px;width:69px;height:1px;background:#e8e6dc"></div>
<svg style="left:159px;top:66.9px" width="7" height="9"><path d="M1 0.8V8L2.8 6.2L4.3 8.6L5.3 8L3.8 5.6H6.2Z" fill="#fff" stroke="#606060" stroke-width="0.7"/></svg>
<span class="t" style="left:167.7px;top:67.98px;font-size:7px;transform:scaleX(0.850);">Sélection</span>
<div style="left:158px;top:80.3px;width:8px;height:8.5px;border:1px dashed #505050"></div>
<span class="t" style="left:167.7px;top:81.38px;font-size:7px;transform:scaleX(0.850);">Sélection avancée</span>
<svg style="left:157.5px;top:97.6px" width="8" height="8"><path d="M0.8 1H7.2L4.6 4.2V7.2L3.4 6.5V4.2Z" fill="#fff" stroke="#404040" stroke-width="0.9"/></svg>
<span class="t" style="left:167.7px;top:98.18px;font-size:7px;transform:scaleX(0.850);">Filtres avancés</span>
<svg style="left:157.5px;top:111px" width="8" height="8"><path d="M0.8 1H7.2L4.6 4.2V7.2L3.4 6.5V4.2Z" fill="#fff" stroke="#404040" stroke-width="0.9"/></svg>
<span class="t" style="left:167.7px;top:111.58px;font-size:7px;transform:scaleX(0.850);">Annuler filtres</span>
<svg style="left:157px;top:128.6px" width="9" height="9"><circle cx="3" cy="5.5" r="2.3" fill="none" stroke="#707070" stroke-width="0.9"/><circle cx="5.5" cy="3" r="2.3" fill="none" stroke="#707070" stroke-width="0.9"/></svg>
<span class="t" style="left:167.7px;top:129.18px;font-size:7px;transform:scaleX(0.850);">Echanger les</span>
<span class="t" style="left:167.7px;top:136.98px;font-size:7px;transform:scaleX(0.850);">traitements</span>
<svg style="left:157.5px;top:152.2px" width="8" height="8"><path d="M4 0.6V7.4M0.6 4H7.4" stroke="#8cae6c" stroke-width="2.6"/><path d="M4 1.2V6.8M1.2 4H6.8" stroke="#b8d498" stroke-width="1"/></svg>
<span class="t" style="left:167.7px;top:152.78px;font-size:7px;transform:scaleX(0.850);">Zone de texte</span>
<svg style="left:157.5px;top:168px" width="8" height="8"><path d="M4 0.6V7.4M0.6 4H7.4" stroke="#8cae6c" stroke-width="2.6"/><path d="M4 1.2V6.8M1.2 4H6.8" stroke="#b8d498" stroke-width="1"/></svg>
<span class="t" style="left:167.7px;top:168.58px;font-size:7px;transform:scaleX(0.850);">Zhe bordure</span>
<svg style="left:157.5px;top:181.2px" width="8" height="8"><path d="M4 0.6V7.4M0.6 4H7.4" stroke="#8cae6c" stroke-width="2.6"/><path d="M4 1.2V6.8M1.2 4H6.8" stroke="#b8d498" stroke-width="1"/></svg>
<span class="t" style="left:167.7px;top:181.78px;font-size:7px;transform:scaleX(0.850);">Zhe allée</span>
<svg style="left:157.5px;top:194.3px" width="8" height="8"><path d="M4 0.6V7.4M0.6 4H7.4" stroke="#8cae6c" stroke-width="2.6"/><path d="M4 1.2V6.8M1.2 4H6.8" stroke="#b8d498" stroke-width="1"/></svg>
<span class="t" style="left:167.7px;top:194.88px;font-size:7px;transform:scaleX(0.850);">Zhe chemin</span>
<svg style="left:157.5px;top:207.1px" width="8" height="8"><path d="M4 0.6V7.4M0.6 4H7.4" stroke="#8cae6c" stroke-width="2.6"/><path d="M4 1.2V6.8M1.2 4H6.8" stroke="#b8d498" stroke-width="1"/></svg>
<span class="t" style="left:167.7px;top:207.68px;font-size:7px;transform:scaleX(0.850);">Zhe traitement</span>
<span class="t" style="left:167.7px;top:215.48px;font-size:7px;transform:scaleX(0.850);">inconnu</span>
<svg style="left:157.5px;top:226.5px" width="8" height="8"><path d="M4 0.6V7.4M0.6 4H7.4" stroke="#8cae6c" stroke-width="2.6"/><path d="M4 1.2V6.8M1.2 4H6.8" stroke="#b8d498" stroke-width="1"/></svg>
<span class="t" style="left:167.7px;top:227.08px;font-size:7px;transform:scaleX(0.850);">Zhe BordureRi</span>
<svg style="left:157.5px;top:239.6px" width="8" height="8"><path d="M4 0.6V7.4M0.6 4H7.4" stroke="#8cae6c" stroke-width="2.6"/><path d="M4 1.2V6.8M1.2 4H6.8" stroke="#b8d498" stroke-width="1"/></svg>
<span class="t" style="left:167.7px;top:240.18px;font-size:7px;transform:scaleX(0.850);">Zhe BordureGw</span>
<svg style="left:157.5px;top:255.39999999999998px" width="8" height="8"><path d="M4 0.6V7.4M0.6 4H7.4" stroke="#8cae6c" stroke-width="2.6"/><path d="M4 1.2V6.8M1.2 4H6.8" stroke="#b8d498" stroke-width="1"/></svg>
<span class="t" style="left:167.7px;top:255.98px;font-size:7px;transform:scaleX(0.850);">Placer Individu</span>
<svg style="left:157.5px;top:268px" width="8" height="8"><path d="M4 0.6V7.4M0.6 4H7.4" stroke="#8cae6c" stroke-width="2.6"/><path d="M4 1.2V6.8M1.2 4H6.8" stroke="#b8d498" stroke-width="1"/></svg>
<span class="t" style="left:167.7px;top:268.58px;font-size:7px;transform:scaleX(0.850);">PU</span>
<span class="t" style="left:167.7px;top:276.38px;font-size:7px;transform:scaleX(0.850);">Supplémentaire</span>
<svg style="left:157.5px;top:287.4px" width="8" height="8"><path d="M4 0.6V7.4M0.6 4H7.4" stroke="#8cae6c" stroke-width="2.6"/><path d="M4 1.2V6.8M1.2 4H6.8" stroke="#b8d498" stroke-width="1"/></svg>
<span class="t" style="left:167.7px;top:287.98px;font-size:7px;transform:scaleX(0.850);">Sous Bloc</span>
<span class="t" style="left:167.7px;top:295.78px;font-size:7px;transform:scaleX(0.850);">Supplémentaire</span>
<svg style="left:157.5px;top:305.8px" width="8" height="8"><path d="M4 0.6V7.4M0.6 4H7.4" stroke="#8cae6c" stroke-width="2.6"/><path d="M4 1.2V6.8M1.2 4H6.8" stroke="#b8d498" stroke-width="1"/></svg>
<span class="t" style="left:167.7px;top:306.38px;font-size:7px;transform:scaleX(0.850);">Bloc</span>
<span class="t" style="left:167.7px;top:314.18px;font-size:7px;transform:scaleX(0.850);">Supplémentaire</span>
<div style="left:221.5px;top:64px;width:10px;height:309px;background:#f2f1ec;border-left:1px solid #d8d6cc;border-right:1px solid #c8c6bc"></div>
<div style="left:231px;top:64px;width:555px;height:9.3px;background:#f7f7f4;border-bottom:1px solid #cfcfc8"></div>
<div style="left:231px;top:64px;width:554.6px;height:9.3px;overflow:hidden">
<span class="t" style="left:-8.399999999999977px;top:1.2px;width:20px;text-align:center;font-size:6.5px;color:#222;-webkit-text-stroke:0">36</span>
<span class="t" style="left:17.19999999999999px;top:1.2px;width:20px;text-align:center;font-size:6.5px;color:#222;-webkit-text-stroke:0">35</span>
<span class="t" style="left:42.80000000000001px;top:1.2px;width:20px;text-align:center;font-size:6.5px;color:#222;-webkit-text-stroke:0">34</span>
<span class="t" style="left:68.40000000000003px;top:1.2px;width:20px;text-align:center;font-size:6.5px;color:#222;-webkit-text-stroke:0">33</span>
<span class="t" style="left:94.0px;top:1.2px;width:20px;text-align:center;font-size:6.5px;color:#222;-webkit-text-stroke:0">32</span>
<span class="t" style="left:119.60000000000002px;top:1.2px;width:20px;text-align:center;font-size:6.5px;color:#222;-webkit-text-stroke:0">31</span>
<span class="t" style="left:145.2px;top:1.2px;width:20px;text-align:center;font-size:6.5px;color:#222;-webkit-text-stroke:0">30</span>
<span class="t" style="left:170.8px;top:1.2px;width:20px;text-align:center;font-size:6.5px;color:#222;-webkit-text-stroke:0">29</span>
<span class="t" style="left:196.40000000000003px;top:1.2px;width:20px;text-align:center;font-size:6.5px;color:#222;-webkit-text-stroke:0">28</span>
<span class="t" style="left:222.00000000000006px;top:1.2px;width:20px;text-align:center;font-size:6.5px;color:#222;-webkit-text-stroke:0">27</span>
<span class="t" style="left:247.60000000000002px;top:1.2px;width:20px;text-align:center;font-size:6.5px;color:#222;-webkit-text-stroke:0">26</span>
<span class="t" style="left:273.19999999999993px;top:1.2px;width:20px;text-align:center;font-size:6.5px;color:#222;-webkit-text-stroke:0">25</span>
<span class="t" style="left:298.79999999999995px;top:1.2px;width:20px;text-align:center;font-size:6.5px;color:#222;-webkit-text-stroke:0">24</span>
<span class="t" style="left:324.4px;top:1.2px;width:20px;text-align:center;font-size:6.5px;color:#222;-webkit-text-stroke:0">23</span>
<span class="t" style="left:350.0px;top:1.2px;width:20px;text-align:center;font-size:6.5px;color:#222;-webkit-text-stroke:0">22</span>
<span class="t" style="left:375.5999999999999px;top:1.2px;width:20px;text-align:center;font-size:6.5px;color:#222;-webkit-text-stroke:0">21</span>
<span class="t" style="left:401.20000000000005px;top:1.2px;width:20px;text-align:center;font-size:6.5px;color:#222;-webkit-text-stroke:0">20</span>
<span class="t" style="left:426.79999999999995px;top:1.2px;width:20px;text-align:center;font-size:6.5px;color:#222;-webkit-text-stroke:0">19</span>
<span class="t" style="left:452.4px;top:1.2px;width:20px;text-align:center;font-size:6.5px;color:#222;-webkit-text-stroke:0">18</span>
<span class="t" style="left:478.0px;top:1.2px;width:20px;text-align:center;font-size:6.5px;color:#222;-webkit-text-stroke:0">17</span>
<span class="t" style="left:503.5999999999999px;top:1.2px;width:20px;text-align:center;font-size:6.5px;color:#222;-webkit-text-stroke:0">16</span>
<span class="t" style="left:529.2px;top:1.2px;width:20px;text-align:center;font-size:6.5px;color:#222;-webkit-text-stroke:0">15</span>
</div>
<div style="left:222px;top:73px;width:9px;height:290.6px;overflow:hidden">
<span class="t" style="left:-7px;top:0.4000000000000057px;width:20px;text-align:center;font-size:6px;color:#202020;-webkit-text-stroke:0.1px #000;transform-origin:50% 50%;transform:rotate(90deg)">58</span>
<span class="t" style="left:-7px;top:11.829999999999998px;width:20px;text-align:center;font-size:6px;color:#202020;-webkit-text-stroke:0.1px #000;transform-origin:50% 50%;transform:rotate(90deg)">57</span>
<span class="t" style="left:-7px;top:23.260000000000005px;width:20px;text-align:center;font-size:6px;color:#202020;-webkit-text-stroke:0.1px #000;transform-origin:50% 50%;transform:rotate(90deg)">56</span>
<span class="t" style="left:-7px;top:34.69000000000001px;width:20px;text-align:center;font-size:6px;color:#202020;-webkit-text-stroke:0.1px #000;transform-origin:50% 50%;transform:rotate(90deg)">55</span>
<span class="t" style="left:-7px;top:46.120000000000005px;width:20px;text-align:center;font-size:6px;color:#202020;-webkit-text-stroke:0.1px #000;transform-origin:50% 50%;transform:rotate(90deg)">54</span>
<span class="t" style="left:-7px;top:57.54999999999998px;width:20px;text-align:center;font-size:6px;color:#202020;-webkit-text-stroke:0.1px #000;transform-origin:50% 50%;transform:rotate(90deg)">53</span>
<span class="t" style="left:-7px;top:68.97999999999999px;width:20px;text-align:center;font-size:6px;color:#202020;-webkit-text-stroke:0.1px #000;transform-origin:50% 50%;transform:rotate(90deg)">52</span>
<span class="t" style="left:-7px;top:80.40999999999997px;width:20px;text-align:center;font-size:6px;color:#202020;-webkit-text-stroke:0.1px #000;transform-origin:50% 50%;transform:rotate(90deg)">51</span>
<span class="t" style="left:-7px;top:91.83999999999997px;width:20px;text-align:center;font-size:6px;color:#202020;-webkit-text-stroke:0.1px #000;transform-origin:50% 50%;transform:rotate(90deg)">50</span>
<span class="t" style="left:-7px;top:103.26999999999998px;width:20px;text-align:center;font-size:6px;color:#202020;-webkit-text-stroke:0.1px #000;transform-origin:50% 50%;transform:rotate(90deg)">49</span>
<span class="t" style="left:-7px;top:114.69999999999999px;width:20px;text-align:center;font-size:6px;color:#202020;-webkit-text-stroke:0.1px #000;transform-origin:50% 50%;transform:rotate(90deg)">48</span>
<span class="t" style="left:-7px;top:126.13px;width:20px;text-align:center;font-size:6px;color:#202020;-webkit-text-stroke:0.1px #000;transform-origin:50% 50%;transform:rotate(90deg)">47</span>
<span class="t" style="left:-7px;top:137.56px;width:20px;text-align:center;font-size:6px;color:#202020;-webkit-text-stroke:0.1px #000;transform-origin:50% 50%;transform:rotate(90deg)">46</span>
<span class="t" style="left:-7px;top:148.99px;width:20px;text-align:center;font-size:6px;color:#202020;-webkit-text-stroke:0.1px #000;transform-origin:50% 50%;transform:rotate(90deg)">45</span>
<span class="t" style="left:-7px;top:160.41999999999996px;width:20px;text-align:center;font-size:6px;color:#202020;-webkit-text-stroke:0.1px #000;transform-origin:50% 50%;transform:rotate(90deg)">44</span>
<span class="t" style="left:-7px;top:171.84999999999997px;width:20px;text-align:center;font-size:6px;color:#202020;-webkit-text-stroke:0.1px #000;transform-origin:50% 50%;transform:rotate(90deg)">43</span>
<span class="t" style="left:-7px;top:183.27999999999997px;width:20px;text-align:center;font-size:6px;color:#202020;-webkit-text-stroke:0.1px #000;transform-origin:50% 50%;transform:rotate(90deg)">42</span>
<span class="t" style="left:-7px;top:194.70999999999998px;width:20px;text-align:center;font-size:6px;color:#202020;-webkit-text-stroke:0.1px #000;transform-origin:50% 50%;transform:rotate(90deg)">41</span>
<span class="t" style="left:-7px;top:206.14px;width:20px;text-align:center;font-size:6px;color:#202020;-webkit-text-stroke:0.1px #000;transform-origin:50% 50%;transform:rotate(90deg)">40</span>
<span class="t" style="left:-7px;top:217.57px;width:20px;text-align:center;font-size:6px;color:#202020;-webkit-text-stroke:0.1px #000;transform-origin:50% 50%;transform:rotate(90deg)">39</span>
<span class="t" style="left:-7px;top:229.0px;width:20px;text-align:center;font-size:6px;color:#202020;-webkit-text-stroke:0.1px #000;transform-origin:50% 50%;transform:rotate(90deg)">38</span>
<span class="t" style="left:-7px;top:240.43px;width:20px;text-align:center;font-size:6px;color:#202020;-webkit-text-stroke:0.1px #000;transform-origin:50% 50%;transform:rotate(90deg)">37</span>
<span class="t" style="left:-7px;top:251.85999999999996px;width:20px;text-align:center;font-size:6px;color:#202020;-webkit-text-stroke:0.1px #000;transform-origin:50% 50%;transform:rotate(90deg)">36</span>
<span class="t" style="left:-7px;top:263.28999999999996px;width:20px;text-align:center;font-size:6px;color:#202020;-webkit-text-stroke:0.1px #000;transform-origin:50% 50%;transform:rotate(90deg)">35</span>
<span class="t" style="left:-7px;top:274.71999999999997px;width:20px;text-align:center;font-size:6px;color:#202020;-webkit-text-stroke:0.1px #000;transform-origin:50% 50%;transform:rotate(90deg)">34</span>
<span class="t" style="left:-7px;top:286.15px;width:20px;text-align:center;font-size:6px;color:#202020;-webkit-text-stroke:0.1px #000;transform-origin:50% 50%;transform:rotate(90deg)">33</span>
<span class="t" style="left:-7px;top:297.58px;width:20px;text-align:center;font-size:6px;color:#202020;-webkit-text-stroke:0.1px #000;transform-origin:50% 50%;transform:rotate(90deg)">32</span>
</div>
<div style="left:231px;top:73px;width:554.6px;height:290.6px;overflow:hidden;background:#fff">
<div style="left:-11.50px;top:0.00px;width:1.00px;height:291.00px;background:#dadada"></div>
<div style="left:14.10px;top:0.00px;width:1.00px;height:291.00px;background:#dadada"></div>
<div style="left:39.70px;top:0.00px;width:1.00px;height:291.00px;background:#dadada"></div>
<div style="left:65.30px;top:0.00px;width:1.00px;height:291.00px;background:#dadada"></div>
<div style="left:90.90px;top:0.00px;width:1.00px;height:291.00px;background:#dadada"></div>
<div style="left:116.50px;top:0.00px;width:1.00px;height:291.00px;background:#dadada"></div>
<div style="left:142.10px;top:0.00px;width:1.00px;height:291.00px;background:#dadada"></div>
<div style="left:167.70px;top:0.00px;width:1.00px;height:291.00px;background:#dadada"></div>
<div style="left:193.30px;top:0.00px;width:1.00px;height:291.00px;background:#dadada"></div>
<div style="left:218.90px;top:0.00px;width:1.00px;height:291.00px;background:#dadada"></div>
<div style="left:244.50px;top:0.00px;width:1.00px;height:291.00px;background:#dadada"></div>
<div style="left:270.10px;top:0.00px;width:1.00px;height:291.00px;background:#dadada"></div>
<div style="left:295.70px;top:0.00px;width:1.00px;height:291.00px;background:#dadada"></div>
<div style="left:321.30px;top:0.00px;width:1.00px;height:291.00px;background:#dadada"></div>
<div style="left:346.90px;top:0.00px;width:1.00px;height:291.00px;background:#dadada"></div>
<div style="left:372.50px;top:0.00px;width:1.00px;height:291.00px;background:#dadada"></div>
<div style="left:398.10px;top:0.00px;width:1.00px;height:291.00px;background:#dadada"></div>
<div style="left:423.70px;top:0.00px;width:1.00px;height:291.00px;background:#dadada"></div>
<div style="left:449.30px;top:0.00px;width:1.00px;height:291.00px;background:#dadada"></div>
<div style="left:474.90px;top:0.00px;width:1.00px;height:291.00px;background:#dadada"></div>
<div style="left:500.50px;top:0.00px;width:1.00px;height:291.00px;background:#dadada"></div>
<div style="left:526.10px;top:0.00px;width:1.00px;height:291.00px;background:#dadada"></div>
<div style="left:0.00px;top:-2.60px;width:555.00px;height:1.00px;background:#dadada"></div>
<div style="left:0.00px;top:8.83px;width:555.00px;height:1.00px;background:#dadada"></div>
<div style="left:0.00px;top:20.26px;width:555.00px;height:1.00px;background:#dadada"></div>
<div style="left:0.00px;top:31.69px;width:555.00px;height:1.00px;background:#dadada"></div>
<div style="left:0.00px;top:43.12px;width:555.00px;height:1.00px;background:#dadada"></div>
<div style="left:0.00px;top:54.55px;width:555.00px;height:1.00px;background:#dadada"></div>
<div style="left:0.00px;top:65.98px;width:555.00px;height:1.00px;background:#dadada"></div>
<div style="left:0.00px;top:77.41px;width:555.00px;height:1.00px;background:#dadada"></div>
<div style="left:0.00px;top:88.84px;width:555.00px;height:1.00px;background:#dadada"></div>
<div style="left:0.00px;top:100.27px;width:555.00px;height:1.00px;background:#dadada"></div>
<div style="left:0.00px;top:111.70px;width:555.00px;height:1.00px;background:#dadada"></div>
<div style="left:0.00px;top:123.13px;width:555.00px;height:1.00px;background:#dadada"></div>
<div style="left:0.00px;top:134.56px;width:555.00px;height:1.00px;background:#dadada"></div>
<div style="left:0.00px;top:145.99px;width:555.00px;height:1.00px;background:#dadada"></div>
<div style="left:0.00px;top:157.42px;width:555.00px;height:1.00px;background:#dadada"></div>
<div style="left:0.00px;top:168.85px;width:555.00px;height:1.00px;background:#dadada"></div>
<div style="left:0.00px;top:180.28px;width:555.00px;height:1.00px;background:#dadada"></div>
<div style="left:0.00px;top:191.71px;width:555.00px;height:1.00px;background:#dadada"></div>
<div style="left:0.00px;top:203.14px;width:555.00px;height:1.00px;background:#dadada"></div>
<div style="left:0.00px;top:214.57px;width:555.00px;height:1.00px;background:#dadada"></div>
<div style="left:0.00px;top:226.00px;width:555.00px;height:1.00px;background:#dadada"></div>
<div style="left:0.00px;top:237.43px;width:555.00px;height:1.00px;background:#dadada"></div>
<div style="left:0.00px;top:248.86px;width:555.00px;height:1.00px;background:#dadada"></div>
<div style="left:0.00px;top:260.29px;width:555.00px;height:1.00px;background:#dadada"></div>
<div style="left:0.00px;top:271.72px;width:555.00px;height:1.00px;background:#dadada"></div>
<div style="left:0.00px;top:283.15px;width:555.00px;height:1.00px;background:#dadada"></div>
<div style="left:0.00px;top:294.58px;width:555.00px;height:1.00px;background:#dadada"></div>
<div style="left:13.60px;top:20.50px;width:27.60px;height:300.00px;background:#2f5f55"></div>
<div style="left:16.80px;top:22.00px;width:20.60px;height:300.00px;background:#1e99d6"></div>
<div style="left:37.40px;top:22.00px;width:3.80px;height:300.00px;background:#6a8c74"></div>
<div style="left:37.40px;top:22.00px;width:3.80px;height:45.00px;background:#4f786c"></div>
<div style="left:41.20px;top:20.50px;width:126.80px;height:46.60px;background:#8ef38e;border-top:1.5px solid #1c3f2c"></div>
<div style="left:168.00px;top:31.90px;width:282.00px;height:35.20px;background:#8ef38e;border-top:1.5px solid #1c3f2c"></div>
<div style="left:450.00px;top:43.20px;width:104.60px;height:23.90px;background:#8ef38e;border-top:1.5px solid #1c3f2c"></div>
<div style="left:166.60px;top:20.50px;width:1.50px;height:12.90px;background:#1c3f2c"></div>
<div style="left:448.60px;top:31.90px;width:1.50px;height:12.80px;background:#1c3f2c"></div>
<div style="left:41.20px;top:67.10px;width:513.40px;height:230.00px;background:#1e99d6"></div>
<div style="left:41.20px;top:67.10px;width:513.40px;height:0.90px;background:#2a6a68"></div>
<div style="left:13.60px;top:20.50px;width:3.20px;height:280.00px;background:#2f5f55"></div>
<div style="left:17.85px;top:23.76px;width:19.50px;height:5.30px;background:linear-gradient(#f07a10,#f89030 50%,#f07810);border:1px solid #4a3008;border-radius:1px"></div>
<div style="left:17.85px;top:35.19px;width:19.50px;height:5.30px;background:linear-gradient(#f07a10,#f89030 50%,#f07810);border:1px solid #4a3008;border-radius:1px"></div>
<div style="left:17.85px;top:46.62px;width:19.50px;height:5.30px;background:linear-gradient(#f07a10,#f89030 50%,#f07810);border:1px solid #4a3008;border-radius:1px"></div>
<div style="left:17.85px;top:58.05px;width:19.50px;height:5.30px;background:linear-gradient(#f07a10,#f89030 50%,#f07810);border:1px solid #4a3008;border-radius:1px"></div>
<div style="left:43.45px;top:23.76px;width:19.50px;height:5.30px;background:linear-gradient(#f07a10,#f89030 50%,#f07810);border:1px solid #4a3008;border-radius:1px"></div>
<div style="left:43.45px;top:35.19px;width:19.50px;height:5.30px;background:linear-gradient(#f07a10,#f89030 50%,#f07810);border:1px solid #4a3008;border-radius:1px"></div>
<div style="left:43.45px;top:46.62px;width:19.50px;height:5.30px;background:linear-gradient(#f07a10,#f89030 50%,#f07810);border:1px solid #4a3008;border-radius:1px"></div>
<div style="left:43.45px;top:58.05px;width:19.50px;height:5.30px;background:linear-gradient(#f07a10,#f89030 50%,#f07810);border:1px solid #4a3008;border-radius:1px"></div>
<div style="left:69.05px;top:23.76px;width:19.50px;height:5.30px;background:linear-gradient(#f07a10,#f89030 50%,#f07810);border:1px solid #4a3008;border-radius:1px"></div>
<div style="left:69.05px;top:35.19px;width:19.50px;height:5.30px;background:linear-gradient(#f07a10,#f89030 50%,#f07810);border:1px solid #4a3008;border-radius:1px"></div>
<div style="left:69.05px;top:46.62px;width:19.50px;height:5.30px;background:linear-gradient(#f07a10,#f89030 50%,#f07810);border:1px solid #4a3008;border-radius:1px"></div>
<div style="left:69.05px;top:58.05px;width:19.50px;height:5.30px;background:linear-gradient(#f07a10,#f89030 50%,#f07810);border:1px solid #4a3008;border-radius:1px"></div>
<div style="left:94.65px;top:23.76px;width:19.50px;height:5.30px;background:linear-gradient(#f07a10,#f89030 50%,#f07810);border:1px solid #4a3008;border-radius:1px"></div>
<div style="left:94.65px;top:35.19px;width:19.50px;height:5.30px;background:linear-gradient(#f07a10,#f89030 50%,#f07810);border:1px solid #4a3008;border-radius:1px"></div>
<div style="left:94.65px;top:46.62px;width:19.50px;height:5.30px;background:linear-gradient(#f07a10,#f89030 50%,#f07810);border:1px solid #4a3008;border-radius:1px"></div>
<div style="left:94.65px;top:58.05px;width:19.50px;height:5.30px;background:linear-gradient(#f07a10,#f89030 50%,#f07810);border:1px solid #4a3008;border-radius:1px"></div>
<div style="left:120.25px;top:23.76px;width:19.50px;height:5.30px;background:linear-gradient(#f07a10,#f89030 50%,#f07810);border:1px solid #4a3008;border-radius:1px"></div>
<div style="left:120.25px;top:35.19px;width:19.50px;height:5.30px;background:linear-gradient(#f07a10,#f89030 50%,#f07810);border:1px solid #4a3008;border-radius:1px"></div>
<div style="left:120.25px;top:46.62px;width:19.50px;height:5.30px;background:linear-gradient(#f07a10,#f89030 50%,#f07810);border:1px solid #4a3008;border-radius:1px"></div>
<div style="left:120.25px;top:58.05px;width:19.50px;height:5.30px;background:linear-gradient(#f07a10,#f89030 50%,#f07810);border:1px solid #4a3008;border-radius:1px"></div>
<div style="left:145.85px;top:23.76px;width:19.50px;height:5.30px;background:linear-gradient(#f07a10,#f89030 50%,#f07810);border:1px solid #4a3008;border-radius:1px"></div>
<div style="left:145.85px;top:35.19px;width:19.50px;height:5.30px;background:linear-gradient(#f07a10,#f89030 50%,#f07810);border:1px solid #4a3008;border-radius:1px"></div>
<div style="left:145.85px;top:46.62px;width:19.50px;height:5.30px;background:linear-gradient(#f07a10,#f89030 50%,#f07810);border:1px solid #4a3008;border-radius:1px"></div>
<div style="left:145.85px;top:58.05px;width:19.50px;height:5.30px;background:linear-gradient(#f07a10,#f89030 50%,#f07810);border:1px solid #4a3008;border-radius:1px"></div>
<div style="left:171.45px;top:35.19px;width:19.50px;height:5.30px;background:linear-gradient(#f07a10,#f89030 50%,#f07810);border:1px solid #4a3008;border-radius:1px"></div>
<div style="left:171.45px;top:46.62px;width:19.50px;height:5.30px;background:linear-gradient(#f07a10,#f89030 50%,#f07810);border:1px solid #4a3008;border-radius:1px"></div>
<div style="left:171.45px;top:58.05px;width:19.50px;height:5.30px;background:linear-gradient(#f07a10,#f89030 50%,#f07810);border:1px solid #4a3008;border-radius:1px"></div>
<div style="left:197.05px;top:35.19px;width:19.50px;height:5.30px;background:linear-gradient(#f07a10,#f89030 50%,#f07810);border:1px solid #4a3008;border-radius:1px"></div>
<div style="left:197.05px;top:46.62px;width:19.50px;height:5.30px;background:linear-gradient(#f07a10,#f89030 50%,#f07810);border:1px solid #4a3008;border-radius:1px"></div>
<div style="left:197.05px;top:58.05px;width:19.50px;height:5.30px;background:linear-gradient(#f07a10,#f89030 50%,#f07810);border:1px solid #4a3008;border-radius:1px"></div>
<div style="left:222.65px;top:35.19px;width:19.50px;height:5.30px;background:linear-gradient(#f07a10,#f89030 50%,#f07810);border:1px solid #4a3008;border-radius:1px"></div>
<div style="left:222.65px;top:46.62px;width:19.50px;height:5.30px;background:linear-gradient(#f07a10,#f89030 50%,#f07810);border:1px solid #4a3008;border-radius:1px"></div>
<div style="left:222.65px;top:58.05px;width:19.50px;height:5.30px;background:linear-gradient(#f07a10,#f89030 50%,#f07810);border:1px solid #4a3008;border-radius:1px"></div>
<div style="left:248.25px;top:35.19px;width:19.50px;height:5.30px;background:linear-gradient(#f07a10,#f89030 50%,#f07810);border:1px solid #4a3008;border-radius:1px"></div>
<div style="left:248.25px;top:46.62px;width:19.50px;height:5.30px;background:linear-gradient(#f07a10,#f89030 50%,#f07810);border:1px solid #4a3008;border-radius:1px"></div>
<div style="left:248.25px;top:58.05px;width:19.50px;height:5.30px;background:linear-gradient(#f07a10,#f89030 50%,#f07810);border:1px solid #4a3008;border-radius:1px"></div>
<div style="left:273.85px;top:35.19px;width:19.50px;height:5.30px;background:linear-gradient(#f07a10,#f89030 50%,#f07810);border:1px solid #4a3008;border-radius:1px"></div>
<div style="left:273.85px;top:46.62px;width:19.50px;height:5.30px;background:linear-gradient(#f07a10,#f89030 50%,#f07810);border:1px solid #4a3008;border-radius:1px"></div>
<div style="left:273.85px;top:58.05px;width:19.50px;height:5.30px;background:linear-gradient(#f07a10,#f89030 50%,#f07810);border:1px solid #4a3008;border-radius:1px"></div>
<div style="left:299.45px;top:35.19px;width:19.50px;height:5.30px;background:linear-gradient(#f07a10,#f89030 50%,#f07810);border:1px solid #4a3008;border-radius:1px"></div>
<div style="left:299.45px;top:46.62px;width:19.50px;height:5.30px;background:linear-gradient(#f07a10,#f89030 50%,#f07810);border:1px solid #4a3008;border-radius:1px"></div>
<div style="left:299.45px;top:58.05px;width:19.50px;height:5.30px;background:linear-gradient(#f07a10,#f89030 50%,#f07810);border:1px solid #4a3008;border-radius:1px"></div>
<div style="left:325.05px;top:35.19px;width:19.50px;height:5.30px;background:linear-gradient(#f07a10,#f89030 50%,#f07810);border:1px solid #4a3008;border-radius:1px"></div>
<div style="left:325.05px;top:46.62px;width:19.50px;height:5.30px;background:linear-gradient(#f07a10,#f89030 50%,#f07810);border:1px solid #4a3008;border-radius:1px"></div>
<div style="left:325.05px;top:58.05px;width:19.50px;height:5.30px;background:linear-gradient(#f07a10,#f89030 50%,#f07810);border:1px solid #4a3008;border-radius:1px"></div>
<div style="left:350.65px;top:35.19px;width:19.50px;height:5.30px;background:linear-gradient(#f07a10,#f89030 50%,#f07810);border:1px solid #4a3008;border-radius:1px"></div>
<div style="left:350.65px;top:46.62px;width:19.50px;height:5.30px;background:linear-gradient(#f07a10,#f89030 50%,#f07810);border:1px solid #4a3008;border-radius:1px"></div>
<div style="left:350.65px;top:58.05px;width:19.50px;height:5.30px;background:linear-gradient(#f07a10,#f89030 50%,#f07810);border:1px solid #4a3008;border-radius:1px"></div>
<div style="left:376.25px;top:35.19px;width:19.50px;height:5.30px;background:linear-gradient(#f07a10,#f89030 50%,#f07810);border:1px solid #4a3008;border-radius:1px"></div>
<div style="left:376.25px;top:46.62px;width:19.50px;height:5.30px;background:linear-gradient(#f07a10,#f89030 50%,#f07810);border:1px solid #4a3008;border-radius:1px"></div>
<div style="left:376.25px;top:58.05px;width:19.50px;height:5.30px;background:linear-gradient(#f07a10,#f89030 50%,#f07810);border:1px solid #4a3008;border-radius:1px"></div>
<div style="left:401.85px;top:35.19px;width:19.50px;height:5.30px;background:linear-gradient(#f07a10,#f89030 50%,#f07810);border:1px solid #4a3008;border-radius:1px"></div>
<div style="left:401.85px;top:46.62px;width:19.50px;height:5.30px;background:linear-gradient(#f07a10,#f89030 50%,#f07810);border:1px solid #4a3008;border-radius:1px"></div>
<div style="left:401.85px;top:58.05px;width:19.50px;height:5.30px;background:linear-gradient(#f07a10,#f89030 50%,#f07810);border:1px solid #4a3008;border-radius:1px"></div>
<div style="left:427.45px;top:35.19px;width:19.50px;height:5.30px;background:linear-gradient(#f07a10,#f89030 50%,#f07810);border:1px solid #4a3008;border-radius:1px"></div>
<div style="left:427.45px;top:46.62px;width:19.50px;height:5.30px;background:linear-gradient(#f07a10,#f89030 50%,#f07810);border:1px solid #4a3008;border-radius:1px"></div>
<div style="left:427.45px;top:58.05px;width:19.50px;height:5.30px;background:linear-gradient(#f07a10,#f89030 50%,#f07810);border:1px solid #4a3008;border-radius:1px"></div>
<div style="left:453.05px;top:46.62px;width:19.50px;height:5.30px;background:linear-gradient(#f07a10,#f89030 50%,#f07810);border:1px solid #4a3008;border-radius:1px"></div>
<div style="left:453.05px;top:58.05px;width:19.50px;height:5.30px;background:linear-gradient(#f07a10,#f89030 50%,#f07810);border:1px solid #4a3008;border-radius:1px"></div>
<div style="left:478.65px;top:46.62px;width:19.50px;height:5.30px;background:linear-gradient(#f07a10,#f89030 50%,#f07810);border:1px solid #4a3008;border-radius:1px"></div>
<div style="left:478.65px;top:58.05px;width:19.50px;height:5.30px;background:linear-gradient(#f07a10,#f89030 50%,#f07810);border:1px solid #4a3008;border-radius:1px"></div>
<div style="left:504.25px;top:46.62px;width:19.50px;height:5.30px;background:linear-gradient(#f07a10,#f89030 50%,#f07810);border:1px solid #4a3008;border-radius:1px"></div>
<div style="left:504.25px;top:58.05px;width:19.50px;height:5.30px;background:linear-gradient(#f07a10,#f89030 50%,#f07810);border:1px solid #4a3008;border-radius:1px"></div>
<div style="left:529.85px;top:46.62px;width:19.50px;height:5.30px;background:linear-gradient(#f07a10,#f89030 50%,#f07810);border:1px solid #4a3008;border-radius:1px"></div>
<div style="left:529.85px;top:58.05px;width:19.50px;height:5.30px;background:linear-gradient(#f07a10,#f89030 50%,#f07810);border:1px solid #4a3008;border-radius:1px"></div>
<div style="left:42.00px;top:69.00px;width:21.00px;height:29.00px;background:#0a120a;border-radius:1.5px"></div>
<div style="left:43.00px;top:70.00px;width:19.00px;height:4.00px;background:linear-gradient(#e4dc00,#f6f038 50%,#e8e000);border-radius:1px"></div>
<div style="left:43.00px;top:82.00px;width:19.00px;height:3.00px;background:linear-gradient(#e4dc00,#f6f038 50%,#e8e000);border-radius:1px"></div>
<div style="left:43.00px;top:93.00px;width:19.00px;height:4.00px;background:linear-gradient(#e4dc00,#f6f038 50%,#e8e000);border-radius:1px"></div>
<div style="left:43.00px;top:75.00px;width:19.00px;height:6.00px;background:#2eb91a"></div>
<div style="left:43.00px;top:86.00px;width:19.00px;height:6.00px;background:#2eb91a"></div>
<div style="left:68.00px;top:69.00px;width:20.00px;height:29.00px;background:#0a120a;border-radius:1.5px"></div>
<div style="left:69.00px;top:70.00px;width:18.00px;height:4.00px;background:linear-gradient(#e4dc00,#f6f038 50%,#e8e000);border-radius:1px"></div>
<div style="left:69.00px;top:82.00px;width:18.00px;height:3.00px;background:linear-gradient(#e4dc00,#f6f038 50%,#e8e000);border-radius:1px"></div>
<div style="left:69.00px;top:93.00px;width:18.00px;height:4.00px;background:linear-gradient(#e4dc00,#f6f038 50%,#e8e000);border-radius:1px"></div>
<div style="left:69.00px;top:75.00px;width:18.00px;height:6.00px;background:#2eb91a"></div>
<div style="left:69.00px;top:86.00px;width:18.00px;height:6.00px;background:#2eb91a"></div>
<div style="left:93.00px;top:69.00px;width:21.00px;height:29.00px;background:#0a120a;border-radius:1.5px"></div>
<div style="left:94.00px;top:70.00px;width:19.00px;height:4.00px;background:linear-gradient(#e4dc00,#f6f038 50%,#e8e000);border-radius:1px"></div>
<div style="left:94.00px;top:82.00px;width:19.00px;height:3.00px;background:linear-gradient(#e4dc00,#f6f038 50%,#e8e000);border-radius:1px"></div>
<div style="left:94.00px;top:93.00px;width:19.00px;height:4.00px;background:linear-gradient(#e4dc00,#f6f038 50%,#e8e000);border-radius:1px"></div>
<div style="left:94.00px;top:75.00px;width:19.00px;height:6.00px;background:#2eb91a"></div>
<div style="left:94.00px;top:86.00px;width:19.00px;height:6.00px;background:#2eb91a"></div>
<div style="left:119.00px;top:69.00px;width:20.00px;height:29.00px;background:#0a120a;border-radius:1.5px"></div>
<div style="left:120.00px;top:70.00px;width:18.00px;height:4.00px;background:linear-gradient(#e4dc00,#f6f038 50%,#e8e000);border-radius:1px"></div>
<div style="left:120.00px;top:82.00px;width:18.00px;height:3.00px;background:linear-gradient(#e4dc00,#f6f038 50%,#e8e000);border-radius:1px"></div>
<div style="left:120.00px;top:93.00px;width:18.00px;height:4.00px;background:linear-gradient(#e4dc00,#f6f038 50%,#e8e000);border-radius:1px"></div>
<div style="left:120.00px;top:75.00px;width:18.00px;height:6.00px;background:#2eb91a"></div>
<div style="left:120.00px;top:86.00px;width:18.00px;height:6.00px;background:#2eb91a"></div>
<div style="left:145.00px;top:69.00px;width:20.00px;height:29.00px;background:#0a120a;border-radius:1.5px"></div>
<div style="left:146.00px;top:70.00px;width:18.00px;height:4.00px;background:linear-gradient(#e4dc00,#f6f038 50%,#e8e000);border-radius:1px"></div>
<div style="left:146.00px;top:82.00px;width:18.00px;height:3.00px;background:linear-gradient(#e4dc00,#f6f038 50%,#e8e000);border-radius:1px"></div>
<div style="left:146.00px;top:93.00px;width:18.00px;height:4.00px;background:linear-gradient(#e4dc00,#f6f038 50%,#e8e000);border-radius:1px"></div>
<div style="left:146.00px;top:75.00px;width:18.00px;height:6.00px;background:#2eb91a"></div>
<div style="left:146.00px;top:86.00px;width:18.00px;height:6.00px;background:#2eb91a"></div>
<div style="left:170.00px;top:69.00px;width:21.00px;height:29.00px;background:#0a120a;border-radius:1.5px"></div>
<div style="left:171.00px;top:70.00px;width:19.00px;height:4.00px;background:linear-gradient(#e4dc00,#f6f038 50%,#e8e000);border-radius:1px"></div>
<div style="left:171.00px;top:82.00px;width:19.00px;height:3.00px;background:linear-gradient(#e4dc00,#f6f038 50%,#e8e000);border-radius:1px"></div>
<div style="left:171.00px;top:93.00px;width:19.00px;height:4.00px;background:linear-gradient(#e4dc00,#f6f038 50%,#e8e000);border-radius:1px"></div>
<div style="left:171.00px;top:75.00px;width:19.00px;height:6.00px;background:#2eb91a"></div>
<div style="left:171.00px;top:86.00px;width:19.00px;height:6.00px;background:#2eb91a"></div>
<div style="left:196.00px;top:69.00px;width:20.00px;height:29.00px;background:#0a120a;border-radius:1.5px"></div>
<div style="left:197.00px;top:70.00px;width:18.00px;height:4.00px;background:linear-gradient(#e4dc00,#f6f038 50%,#e8e000);border-radius:1px"></div>
<div style="left:197.00px;top:82.00px;width:18.00px;height:3.00px;background:linear-gradient(#e4dc00,#f6f038 50%,#e8e000);border-radius:1px"></div>
<div style="left:197.00px;top:93.00px;width:18.00px;height:4.00px;background:linear-gradient(#e4dc00,#f6f038 50%,#e8e000);border-radius:1px"></div>
<div style="left:197.00px;top:75.00px;width:18.00px;height:6.00px;background:#2eb91a"></div>
<div style="left:197.00px;top:86.00px;width:18.00px;height:6.00px;background:#2eb91a"></div>
<div style="left:221.00px;top:69.00px;width:21.00px;height:29.00px;background:#0a120a;border-radius:1.5px"></div>
<div style="left:222.00px;top:70.00px;width:19.00px;height:4.00px;background:linear-gradient(#e4dc00,#f6f038 50%,#e8e000);border-radius:1px"></div>
<div style="left:222.00px;top:82.00px;width:19.00px;height:3.00px;background:linear-gradient(#e4dc00,#f6f038 50%,#e8e000);border-radius:1px"></div>
<div style="left:222.00px;top:93.00px;width:19.00px;height:4.00px;background:linear-gradient(#e4dc00,#f6f038 50%,#e8e000);border-radius:1px"></div>
<div style="left:222.00px;top:75.00px;width:19.00px;height:6.00px;background:#2eb91a"></div>
<div style="left:222.00px;top:86.00px;width:19.00px;height:6.00px;background:#2eb91a"></div>
<div style="left:247.00px;top:69.00px;width:20.00px;height:29.00px;background:#0a120a;border-radius:1.5px"></div>
<div style="left:248.00px;top:70.00px;width:18.00px;height:4.00px;background:linear-gradient(#e4dc00,#f6f038 50%,#e8e000);border-radius:1px"></div>
<div style="left:248.00px;top:82.00px;width:18.00px;height:3.00px;background:linear-gradient(#e4dc00,#f6f038 50%,#e8e000);border-radius:1px"></div>
<div style="left:248.00px;top:93.00px;width:18.00px;height:4.00px;background:linear-gradient(#e4dc00,#f6f038 50%,#e8e000);border-radius:1px"></div>
<div style="left:248.00px;top:75.00px;width:18.00px;height:6.00px;background:#2eb91a"></div>
<div style="left:248.00px;top:86.00px;width:18.00px;height:6.00px;background:#2eb91a"></div>
<div style="left:273.00px;top:69.00px;width:20.00px;height:29.00px;background:#0a120a;border-radius:1.5px"></div>
<div style="left:274.00px;top:70.00px;width:18.00px;height:4.00px;background:linear-gradient(#e4dc00,#f6f038 50%,#e8e000);border-radius:1px"></div>
<div style="left:274.00px;top:82.00px;width:18.00px;height:3.00px;background:linear-gradient(#e4dc00,#f6f038 50%,#e8e000);border-radius:1px"></div>
<div style="left:274.00px;top:93.00px;width:18.00px;height:4.00px;background:linear-gradient(#e4dc00,#f6f038 50%,#e8e000);border-radius:1px"></div>
<div style="left:274.00px;top:75.00px;width:18.00px;height:6.00px;background:#2eb91a"></div>
<div style="left:274.00px;top:86.00px;width:18.00px;height:6.00px;background:#2eb91a"></div>
<div style="left:298.00px;top:69.00px;width:21.00px;height:29.00px;background:#0a120a;border-radius:1.5px"></div>
<div style="left:299.00px;top:70.00px;width:19.00px;height:4.00px;background:linear-gradient(#e4dc00,#f6f038 50%,#e8e000);border-radius:1px"></div>
<div style="left:299.00px;top:82.00px;width:19.00px;height:3.00px;background:linear-gradient(#e4dc00,#f6f038 50%,#e8e000);border-radius:1px"></div>
<div style="left:299.00px;top:93.00px;width:19.00px;height:4.00px;background:linear-gradient(#e4dc00,#f6f038 50%,#e8e000);border-radius:1px"></div>
<div style="left:299.00px;top:75.00px;width:19.00px;height:6.00px;background:#2eb91a"></div>
<div style="left:299.00px;top:86.00px;width:19.00px;height:6.00px;background:#2eb91a"></div>
<div style="left:324.00px;top:69.00px;width:20.00px;height:29.00px;background:#0a120a;border-radius:1.5px"></div>
<div style="left:325.00px;top:70.00px;width:18.00px;height:4.00px;background:linear-gradient(#e4dc00,#f6f038 50%,#e8e000);border-radius:1px"></div>
<div style="left:325.00px;top:82.00px;width:18.00px;height:3.00px;background:linear-gradient(#e4dc00,#f6f038 50%,#e8e000);border-radius:1px"></div>
<div style="left:325.00px;top:93.00px;width:18.00px;height:4.00px;background:linear-gradient(#e4dc00,#f6f038 50%,#e8e000);border-radius:1px"></div>
<div style="left:325.00px;top:75.00px;width:18.00px;height:6.00px;background:#2eb91a"></div>
<div style="left:325.00px;top:86.00px;width:18.00px;height:6.00px;background:#2eb91a"></div>
<div style="left:349.00px;top:69.00px;width:21.00px;height:29.00px;background:#0a120a;border-radius:1.5px"></div>
<div style="left:350.00px;top:70.00px;width:19.00px;height:4.00px;background:linear-gradient(#e4dc00,#f6f038 50%,#e8e000);border-radius:1px"></div>
<div style="left:350.00px;top:82.00px;width:19.00px;height:3.00px;background:linear-gradient(#e4dc00,#f6f038 50%,#e8e000);border-radius:1px"></div>
<div style="left:350.00px;top:93.00px;width:19.00px;height:4.00px;background:linear-gradient(#e4dc00,#f6f038 50%,#e8e000);border-radius:1px"></div>
<div style="left:350.00px;top:75.00px;width:19.00px;height:6.00px;background:#2eb91a"></div>
<div style="left:350.00px;top:86.00px;width:19.00px;height:6.00px;background:#2eb91a"></div>
<div style="left:375.00px;top:69.00px;width:20.00px;height:29.00px;background:#0a120a;border-radius:1.5px"></div>
<div style="left:376.00px;top:70.00px;width:18.00px;height:4.00px;background:linear-gradient(#e4dc00,#f6f038 50%,#e8e000);border-radius:1px"></div>
<div style="left:376.00px;top:82.00px;width:18.00px;height:3.00px;background:linear-gradient(#e4dc00,#f6f038 50%,#e8e000);border-radius:1px"></div>
<div style="left:376.00px;top:93.00px;width:18.00px;height:4.00px;background:linear-gradient(#e4dc00,#f6f038 50%,#e8e000);border-radius:1px"></div>
<div style="left:376.00px;top:75.00px;width:18.00px;height:6.00px;background:#2eb91a"></div>
<div style="left:376.00px;top:86.00px;width:18.00px;height:6.00px;background:#2eb91a"></div>
<div style="left:401.00px;top:69.00px;width:20.00px;height:29.00px;background:#0a120a;border-radius:1.5px"></div>
<div style="left:402.00px;top:70.00px;width:18.00px;height:4.00px;background:linear-gradient(#e4dc00,#f6f038 50%,#e8e000);border-radius:1px"></div>
<div style="left:402.00px;top:82.00px;width:18.00px;height:3.00px;background:linear-gradient(#e4dc00,#f6f038 50%,#e8e000);border-radius:1px"></div>
<div style="left:402.00px;top:93.00px;width:18.00px;height:4.00px;background:linear-gradient(#e4dc00,#f6f038 50%,#e8e000);border-radius:1px"></div>
<div style="left:402.00px;top:75.00px;width:18.00px;height:6.00px;background:#2eb91a"></div>
<div style="left:402.00px;top:86.00px;width:18.00px;height:6.00px;background:#2eb91a"></div>
<div style="left:426.00px;top:69.00px;width:21.00px;height:29.00px;background:#0a120a;border-radius:1.5px"></div>
<div style="left:427.00px;top:70.00px;width:19.00px;height:4.00px;background:linear-gradient(#e4dc00,#f6f038 50%,#e8e000);border-radius:1px"></div>
<div style="left:427.00px;top:82.00px;width:19.00px;height:3.00px;background:linear-gradient(#e4dc00,#f6f038 50%,#e8e000);border-radius:1px"></div>
<div style="left:427.00px;top:93.00px;width:19.00px;height:4.00px;background:linear-gradient(#e4dc00,#f6f038 50%,#e8e000);border-radius:1px"></div>
<div style="left:427.00px;top:75.00px;width:19.00px;height:6.00px;background:#2eb91a"></div>
<div style="left:427.00px;top:86.00px;width:19.00px;height:6.00px;background:#2eb91a"></div>
<div style="left:452.00px;top:69.00px;width:20.00px;height:29.00px;background:#0a120a;border-radius:1.5px"></div>
<div style="left:453.00px;top:70.00px;width:18.00px;height:4.00px;background:linear-gradient(#e4dc00,#f6f038 50%,#e8e000);border-radius:1px"></div>
<div style="left:453.00px;top:82.00px;width:18.00px;height:3.00px;background:linear-gradient(#e4dc00,#f6f038 50%,#e8e000);border-radius:1px"></div>
<div style="left:453.00px;top:93.00px;width:18.00px;height:4.00px;background:linear-gradient(#e4dc00,#f6f038 50%,#e8e000);border-radius:1px"></div>
<div style="left:453.00px;top:75.00px;width:18.00px;height:6.00px;background:#2eb91a"></div>
<div style="left:453.00px;top:86.00px;width:18.00px;height:6.00px;background:#2eb91a"></div>
<div style="left:477.00px;top:69.00px;width:21.00px;height:29.00px;background:#0a120a;border-radius:1.5px"></div>
<div style="left:478.00px;top:70.00px;width:19.00px;height:4.00px;background:linear-gradient(#e4dc00,#f6f038 50%,#e8e000);border-radius:1px"></div>
<div style="left:478.00px;top:82.00px;width:19.00px;height:3.00px;background:linear-gradient(#e4dc00,#f6f038 50%,#e8e000);border-radius:1px"></div>
<div style="left:478.00px;top:93.00px;width:19.00px;height:4.00px;background:linear-gradient(#e4dc00,#f6f038 50%,#e8e000);border-radius:1px"></div>
<div style="left:478.00px;top:75.00px;width:19.00px;height:6.00px;background:#2eb91a"></div>
<div style="left:478.00px;top:86.00px;width:19.00px;height:6.00px;background:#2eb91a"></div>
<div style="left:503.00px;top:69.00px;width:20.00px;height:29.00px;background:#0a120a;border-radius:1.5px"></div>
<div style="left:504.00px;top:70.00px;width:18.00px;height:4.00px;background:linear-gradient(#e4dc00,#f6f038 50%,#e8e000);border-radius:1px"></div>
<div style="left:504.00px;top:82.00px;width:18.00px;height:3.00px;background:linear-gradient(#e4dc00,#f6f038 50%,#e8e000);border-radius:1px"></div>
<div style="left:504.00px;top:93.00px;width:18.00px;height:4.00px;background:linear-gradient(#e4dc00,#f6f038 50%,#e8e000);border-radius:1px"></div>
<div style="left:504.00px;top:75.00px;width:18.00px;height:6.00px;background:#2eb91a"></div>
<div style="left:504.00px;top:86.00px;width:18.00px;height:6.00px;background:#2eb91a"></div>
<div style="left:529.00px;top:69.00px;width:20.00px;height:29.00px;background:#0a120a;border-radius:1.5px"></div>
<div style="left:530.00px;top:70.00px;width:18.00px;height:4.00px;background:linear-gradient(#e4dc00,#f6f038 50%,#e8e000);border-radius:1px"></div>
<div style="left:530.00px;top:82.00px;width:18.00px;height:3.00px;background:linear-gradient(#e4dc00,#f6f038 50%,#e8e000);border-radius:1px"></div>
<div style="left:530.00px;top:93.00px;width:18.00px;height:4.00px;background:linear-gradient(#e4dc00,#f6f038 50%,#e8e000);border-radius:1px"></div>
<div style="left:530.00px;top:75.00px;width:18.00px;height:6.00px;background:#2eb91a"></div>
<div style="left:530.00px;top:86.00px;width:18.00px;height:6.00px;background:#2eb91a"></div>
<div style="left:42.00px;top:103.00px;width:21.00px;height:29.00px;background:#0a120a;border-radius:1.5px"></div>
<div style="left:43.00px;top:104.00px;width:19.00px;height:4.00px;background:linear-gradient(#e4dc00,#f6f038 50%,#e8e000);border-radius:1px"></div>
<div style="left:43.00px;top:116.00px;width:19.00px;height:3.00px;background:linear-gradient(#e4dc00,#f6f038 50%,#e8e000);border-radius:1px"></div>
<div style="left:43.00px;top:127.00px;width:19.00px;height:4.00px;background:linear-gradient(#e4dc00,#f6f038 50%,#e8e000);border-radius:1px"></div>
<div style="left:43.00px;top:109.00px;width:19.00px;height:6.00px;background:#2eb91a"></div>
<div style="left:43.00px;top:120.00px;width:19.00px;height:6.00px;background:#2eb91a"></div>
<div style="left:68.00px;top:103.00px;width:20.00px;height:29.00px;background:#0a120a;border-radius:1.5px"></div>
<div style="left:69.00px;top:104.00px;width:18.00px;height:4.00px;background:linear-gradient(#e4dc00,#f6f038 50%,#e8e000);border-radius:1px"></div>
<div style="left:69.00px;top:116.00px;width:18.00px;height:3.00px;background:linear-gradient(#e4dc00,#f6f038 50%,#e8e000);border-radius:1px"></div>
<div style="left:69.00px;top:127.00px;width:18.00px;height:4.00px;background:linear-gradient(#e4dc00,#f6f038 50%,#e8e000);border-radius:1px"></div>
<div style="left:69.00px;top:109.00px;width:18.00px;height:6.00px;background:#2eb91a"></div>
<div style="left:69.00px;top:120.00px;width:18.00px;height:6.00px;background:#2eb91a"></div>
<div style="left:93.00px;top:103.00px;width:21.00px;height:29.00px;background:#0a120a;border-radius:1.5px"></div>
<div style="left:94.00px;top:104.00px;width:19.00px;height:4.00px;background:linear-gradient(#e4dc00,#f6f038 50%,#e8e000);border-radius:1px"></div>
<div style="left:94.00px;top:116.00px;width:19.00px;height:3.00px;background:linear-gradient(#e4dc00,#f6f038 50%,#e8e000);border-radius:1px"></div>
<div style="left:94.00px;top:127.00px;width:19.00px;height:4.00px;background:linear-gradient(#e4dc00,#f6f038 50%,#e8e000);border-radius:1px"></div>
<div style="left:94.00px;top:109.00px;width:19.00px;height:6.00px;background:#2eb91a"></div>
<div style="left:94.00px;top:120.00px;width:19.00px;height:6.00px;background:#2eb91a"></div>
<div style="left:119.00px;top:103.00px;width:20.00px;height:29.00px;background:#0a120a;border-radius:1.5px"></div>
<div style="left:120.00px;top:104.00px;width:18.00px;height:4.00px;background:linear-gradient(#e4dc00,#f6f038 50%,#e8e000);border-radius:1px"></div>
<div style="left:120.00px;top:116.00px;width:18.00px;height:3.00px;background:linear-gradient(#e4dc00,#f6f038 50%,#e8e000);border-radius:1px"></div>
<div style="left:120.00px;top:127.00px;width:18.00px;height:4.00px;background:linear-gradient(#e4dc00,#f6f038 50%,#e8e000);border-radius:1px"></div>
<div style="left:120.00px;top:109.00px;width:18.00px;height:6.00px;background:#2eb91a"></div>
<div style="left:120.00px;top:120.00px;width:18.00px;height:6.00px;background:#2eb91a"></div>
<div style="left:145.00px;top:103.00px;width:20.00px;height:29.00px;background:#0a120a;border-radius:1.5px"></div>
<div style="left:146.00px;top:104.00px;width:18.00px;height:4.00px;background:linear-gradient(#e4dc00,#f6f038 50%,#e8e000);border-radius:1px"></div>
<div style="left:146.00px;top:116.00px;width:18.00px;height:3.00px;background:linear-gradient(#e4dc00,#f6f038 50%,#e8e000);border-radius:1px"></div>
<div style="left:146.00px;top:127.00px;width:18.00px;height:4.00px;background:linear-gradient(#e4dc00,#f6f038 50%,#e8e000);border-radius:1px"></div>
<div style="left:146.00px;top:109.00px;width:18.00px;height:6.00px;background:#2eb91a"></div>
<div style="left:146.00px;top:120.00px;width:18.00px;height:6.00px;background:#2eb91a"></div>
<div style="left:170.00px;top:103.00px;width:21.00px;height:29.00px;background:#0a120a;border-radius:1.5px"></div>
<div style="left:171.00px;top:104.00px;width:19.00px;height:4.00px;background:linear-gradient(#e4dc00,#f6f038 50%,#e8e000);border-radius:1px"></div>
<div style="left:171.00px;top:116.00px;width:19.00px;height:3.00px;background:linear-gradient(#e4dc00,#f6f038 50%,#e8e000);border-radius:1px"></div>
<div style="left:171.00px;top:127.00px;width:19.00px;height:4.00px;background:linear-gradient(#e4dc00,#f6f038 50%,#e8e000);border-radius:1px"></div>
<div style="left:171.00px;top:109.00px;width:19.00px;height:6.00px;background:#2eb91a"></div>
<div style="left:171.00px;top:120.00px;width:19.00px;height:6.00px;background:#2eb91a"></div>
<div style="left:196.00px;top:103.00px;width:20.00px;height:29.00px;background:#0a120a;border-radius:1.5px"></div>
<div style="left:197.00px;top:104.00px;width:18.00px;height:4.00px;background:linear-gradient(#e4dc00,#f6f038 50%,#e8e000);border-radius:1px"></div>
<div style="left:197.00px;top:116.00px;width:18.00px;height:3.00px;background:linear-gradient(#e4dc00,#f6f038 50%,#e8e000);border-radius:1px"></div>
<div style="left:197.00px;top:127.00px;width:18.00px;height:4.00px;background:linear-gradient(#e4dc00,#f6f038 50%,#e8e000);border-radius:1px"></div>
<div style="left:197.00px;top:109.00px;width:18.00px;height:6.00px;background:#2eb91a"></div>
<div style="left:197.00px;top:120.00px;width:18.00px;height:6.00px;background:#2eb91a"></div>
<div style="left:221.00px;top:103.00px;width:21.00px;height:29.00px;background:#0a120a;border-radius:1.5px"></div>
<div style="left:222.00px;top:104.00px;width:19.00px;height:4.00px;background:linear-gradient(#e4dc00,#f6f038 50%,#e8e000);border-radius:1px"></div>
<div style="left:222.00px;top:116.00px;width:19.00px;height:3.00px;background:linear-gradient(#e4dc00,#f6f038 50%,#e8e000);border-radius:1px"></div>
<div style="left:222.00px;top:127.00px;width:19.00px;height:4.00px;background:linear-gradient(#e4dc00,#f6f038 50%,#e8e000);border-radius:1px"></div>
<div style="left:222.00px;top:109.00px;width:19.00px;height:6.00px;background:#2eb91a"></div>
<div style="left:222.00px;top:120.00px;width:19.00px;height:6.00px;background:#2eb91a"></div>
<div style="left:247.00px;top:103.00px;width:20.00px;height:29.00px;background:#0a120a;border-radius:1.5px"></div>
<div style="left:248.00px;top:104.00px;width:18.00px;height:4.00px;background:linear-gradient(#e4dc00,#f6f038 50%,#e8e000);border-radius:1px"></div>
<div style="left:248.00px;top:116.00px;width:18.00px;height:3.00px;background:linear-gradient(#e4dc00,#f6f038 50%,#e8e000);border-radius:1px"></div>
<div style="left:248.00px;top:127.00px;width:18.00px;height:4.00px;background:linear-gradient(#e4dc00,#f6f038 50%,#e8e000);border-radius:1px"></div>
<div style="left:248.00px;top:109.00px;width:18.00px;height:6.00px;background:#2eb91a"></div>
<div style="left:248.00px;top:120.00px;width:18.00px;height:6.00px;background:#2eb91a"></div>
<div style="left:273.00px;top:103.00px;width:20.00px;height:29.00px;background:#0a120a;border-radius:1.5px"></div>
<div style="left:274.00px;top:104.00px;width:18.00px;height:4.00px;background:linear-gradient(#e4dc00,#f6f038 50%,#e8e000);border-radius:1px"></div>
<div style="left:274.00px;top:116.00px;width:18.00px;height:3.00px;background:linear-gradient(#e4dc00,#f6f038 50%,#e8e000);border-radius:1px"></div>
<div style="left:274.00px;top:127.00px;width:18.00px;height:4.00px;background:linear-gradient(#e4dc00,#f6f038 50%,#e8e000);border-radius:1px"></div>
<div style="left:274.00px;top:109.00px;width:18.00px;height:6.00px;background:#2eb91a"></div>
<div style="left:274.00px;top:120.00px;width:18.00px;height:6.00px;background:#2eb91a"></div>
<div style="left:298.00px;top:103.00px;width:21.00px;height:29.00px;background:#0a120a;border-radius:1.5px"></div>
<div style="left:299.00px;top:104.00px;width:19.00px;height:4.00px;background:linear-gradient(#e4dc00,#f6f038 50%,#e8e000);border-radius:1px"></div>
<div style="left:299.00px;top:116.00px;width:19.00px;height:3.00px;background:linear-gradient(#e4dc00,#f6f038 50%,#e8e000);border-radius:1px"></div>
<div style="left:299.00px;top:127.00px;width:19.00px;height:4.00px;background:linear-gradient(#e4dc00,#f6f038 50%,#e8e000);border-radius:1px"></div>
<div style="left:299.00px;top:109.00px;width:19.00px;height:6.00px;background:#2eb91a"></div>
<div style="left:299.00px;top:120.00px;width:19.00px;height:6.00px;background:#2eb91a"></div>
<div style="left:324.00px;top:103.00px;width:20.00px;height:29.00px;background:#0a120a;border-radius:1.5px"></div>
<div style="left:325.00px;top:104.00px;width:18.00px;height:4.00px;background:linear-gradient(#e4dc00,#f6f038 50%,#e8e000);border-radius:1px"></div>
<div style="left:325.00px;top:116.00px;width:18.00px;height:3.00px;background:linear-gradient(#e4dc00,#f6f038 50%,#e8e000);border-radius:1px"></div>
<div style="left:325.00px;top:127.00px;width:18.00px;height:4.00px;background:linear-gradient(#e4dc00,#f6f038 50%,#e8e000);border-radius:1px"></div>
<div style="left:325.00px;top:109.00px;width:18.00px;height:6.00px;background:#2eb91a"></div>
<div style="left:325.00px;top:120.00px;width:18.00px;height:6.00px;background:#2eb91a"></div>
<div style="left:349.00px;top:103.00px;width:21.00px;height:29.00px;background:#0a120a;border-radius:1.5px"></div>
<div style="left:350.00px;top:104.00px;width:19.00px;height:4.00px;background:linear-gradient(#e4dc00,#f6f038 50%,#e8e000);border-radius:1px"></div>
<div style="left:350.00px;top:116.00px;width:19.00px;height:3.00px;background:linear-gradient(#e4dc00,#f6f038 50%,#e8e000);border-radius:1px"></div>
<div style="left:350.00px;top:127.00px;width:19.00px;height:4.00px;background:linear-gradient(#e4dc00,#f6f038 50%,#e8e000);border-radius:1px"></div>
<div style="left:350.00px;top:109.00px;width:19.00px;height:6.00px;background:#f77f0a"></div>
<div style="left:350.00px;top:120.00px;width:19.00px;height:6.00px;background:#f77f0a"></div>
<div style="left:375.00px;top:103.00px;width:20.00px;height:29.00px;background:#0a120a;border-radius:1.5px"></div>
<div style="left:376.00px;top:104.00px;width:18.00px;height:4.00px;background:linear-gradient(#e4dc00,#f6f038 50%,#e8e000);border-radius:1px"></div>
<div style="left:376.00px;top:116.00px;width:18.00px;height:3.00px;background:linear-gradient(#e4dc00,#f6f038 50%,#e8e000);border-radius:1px"></div>
<div style="left:376.00px;top:127.00px;width:18.00px;height:4.00px;background:linear-gradient(#e4dc00,#f6f038 50%,#e8e000);border-radius:1px"></div>
<div style="left:376.00px;top:109.00px;width:18.00px;height:6.00px;background:#2eb91a"></div>
<div style="left:376.00px;top:120.00px;width:18.00px;height:6.00px;background:#2eb91a"></div>
<div style="left:401.00px;top:103.00px;width:20.00px;height:29.00px;background:#0a120a;border-radius:1.5px"></div>
<div style="left:402.00px;top:104.00px;width:18.00px;height:4.00px;background:linear-gradient(#e4dc00,#f6f038 50%,#e8e000);border-radius:1px"></div>
<div style="left:402.00px;top:116.00px;width:18.00px;height:3.00px;background:linear-gradient(#e4dc00,#f6f038 50%,#e8e000);border-radius:1px"></div>
<div style="left:402.00px;top:127.00px;width:18.00px;height:4.00px;background:linear-gradient(#e4dc00,#f6f038 50%,#e8e000);border-radius:1px"></div>
<div style="left:402.00px;top:109.00px;width:18.00px;height:6.00px;background:#2eb91a"></div>
<div style="left:402.00px;top:120.00px;width:18.00px;height:6.00px;background:#2eb91a"></div>
<div style="left:426.00px;top:103.00px;width:21.00px;height:29.00px;background:#0a120a;border-radius:1.5px"></div>
<div style="left:427.00px;top:104.00px;width:19.00px;height:4.00px;background:linear-gradient(#e4dc00,#f6f038 50%,#e8e000);border-radius:1px"></div>
<div style="left:427.00px;top:116.00px;width:19.00px;height:3.00px;background:linear-gradient(#e4dc00,#f6f038 50%,#e8e000);border-radius:1px"></div>
<div style="left:427.00px;top:127.00px;width:19.00px;height:4.00px;background:linear-gradient(#e4dc00,#f6f038 50%,#e8e000);border-radius:1px"></div>
<div style="left:427.00px;top:109.00px;width:19.00px;height:6.00px;background:#2eb91a"></div>
<div style="left:427.00px;top:120.00px;width:19.00px;height:6.00px;background:#2eb91a"></div>
<div style="left:452.00px;top:103.00px;width:20.00px;height:29.00px;background:#0a120a;border-radius:1.5px"></div>
<div style="left:453.00px;top:104.00px;width:18.00px;height:4.00px;background:linear-gradient(#e4dc00,#f6f038 50%,#e8e000);border-radius:1px"></div>
<div style="left:453.00px;top:116.00px;width:18.00px;height:3.00px;background:linear-gradient(#e4dc00,#f6f038 50%,#e8e000);border-radius:1px"></div>
<div style="left:453.00px;top:127.00px;width:18.00px;height:4.00px;background:linear-gradient(#e4dc00,#f6f038 50%,#e8e000);border-radius:1px"></div>
<div style="left:453.00px;top:109.00px;width:18.00px;height:6.00px;background:#2eb91a"></div>
<div style="left:453.00px;top:120.00px;width:18.00px;height:6.00px;background:#2eb91a"></div>
<div style="left:477.00px;top:103.00px;width:21.00px;height:29.00px;background:#0a120a;border-radius:1.5px"></div>
<div style="left:478.00px;top:104.00px;width:19.00px;height:4.00px;background:linear-gradient(#e4dc00,#f6f038 50%,#e8e000);border-radius:1px"></div>
<div style="left:478.00px;top:116.00px;width:19.00px;height:3.00px;background:linear-gradient(#e4dc00,#f6f038 50%,#e8e000);border-radius:1px"></div>
<div style="left:478.00px;top:127.00px;width:19.00px;height:4.00px;background:linear-gradient(#e4dc00,#f6f038 50%,#e8e000);border-radius:1px"></div>
<div style="left:478.00px;top:109.00px;width:19.00px;height:6.00px;background:#2eb91a"></div>
<div style="left:478.00px;top:120.00px;width:19.00px;height:6.00px;background:#2eb91a"></div>
<div style="left:503.00px;top:103.00px;width:20.00px;height:29.00px;background:#0a120a;border-radius:1.5px"></div>
<div style="left:504.00px;top:104.00px;width:18.00px;height:4.00px;background:linear-gradient(#e4dc00,#f6f038 50%,#e8e000);border-radius:1px"></div>
<div style="left:504.00px;top:116.00px;width:18.00px;height:3.00px;background:linear-gradient(#e4dc00,#f6f038 50%,#e8e000);border-radius:1px"></div>
<div style="left:504.00px;top:127.00px;width:18.00px;height:4.00px;background:linear-gradient(#e4dc00,#f6f038 50%,#e8e000);border-radius:1px"></div>
<div style="left:504.00px;top:109.00px;width:18.00px;height:6.00px;background:#2eb91a"></div>
<div style="left:504.00px;top:120.00px;width:18.00px;height:6.00px;background:#2eb91a"></div>
<div style="left:529.00px;top:103.00px;width:20.00px;height:29.00px;background:#0a120a;border-radius:1.5px"></div>
<div style="left:530.00px;top:104.00px;width:18.00px;height:4.00px;background:linear-gradient(#e4dc00,#f6f038 50%,#e8e000);border-radius:1px"></div>
<div style="left:530.00px;top:116.00px;width:18.00px;height:3.00px;background:linear-gradient(#e4dc00,#f6f038 50%,#e8e000);border-radius:1px"></div>
<div style="left:530.00px;top:127.00px;width:18.00px;height:4.00px;background:linear-gradient(#e4dc00,#f6f038 50%,#e8e000);border-radius:1px"></div>
<div style="left:530.00px;top:109.00px;width:18.00px;height:6.00px;background:#2eb91a"></div>
<div style="left:530.00px;top:120.00px;width:18.00px;height:6.00px;background:#2eb91a"></div>
<div style="left:42.00px;top:138.00px;width:21.00px;height:29.00px;background:#0a120a;border-radius:1.5px"></div>
<div style="left:43.00px;top:139.00px;width:19.00px;height:4.00px;background:linear-gradient(#e4dc00,#f6f038 50%,#e8e000);border-radius:1px"></div>
<div style="left:43.00px;top:151.00px;width:19.00px;height:3.00px;background:linear-gradient(#e4dc00,#f6f038 50%,#e8e000);border-radius:1px"></div>
<div style="left:43.00px;top:162.00px;width:19.00px;height:4.00px;background:linear-gradient(#e4dc00,#f6f038 50%,#e8e000);border-radius:1px"></div>
<div style="left:43.00px;top:144.00px;width:19.00px;height:6.00px;background:#2eb91a"></div>
<div style="left:43.00px;top:155.00px;width:19.00px;height:6.00px;background:#2eb91a"></div>
<div style="left:68.00px;top:138.00px;width:20.00px;height:29.00px;background:#0a120a;border-radius:1.5px"></div>
<div style="left:69.00px;top:139.00px;width:18.00px;height:4.00px;background:linear-gradient(#e4dc00,#f6f038 50%,#e8e000);border-radius:1px"></div>
<div style="left:69.00px;top:151.00px;width:18.00px;height:3.00px;background:linear-gradient(#e4dc00,#f6f038 50%,#e8e000);border-radius:1px"></div>
<div style="left:69.00px;top:162.00px;width:18.00px;height:4.00px;background:linear-gradient(#e4dc00,#f6f038 50%,#e8e000);border-radius:1px"></div>
<div style="left:69.00px;top:144.00px;width:18.00px;height:6.00px;background:#2eb91a"></div>
<div style="left:69.00px;top:155.00px;width:18.00px;height:6.00px;background:#2eb91a"></div>
<div style="left:93.00px;top:138.00px;width:21.00px;height:29.00px;background:#0a120a;border-radius:1.5px"></div>
<div style="left:94.00px;top:139.00px;width:19.00px;height:4.00px;background:linear-gradient(#e4dc00,#f6f038 50%,#e8e000);border-radius:1px"></div>
<div style="left:94.00px;top:151.00px;width:19.00px;height:3.00px;background:linear-gradient(#e4dc00,#f6f038 50%,#e8e000);border-radius:1px"></div>
<div style="left:94.00px;top:162.00px;width:19.00px;height:4.00px;background:linear-gradient(#e4dc00,#f6f038 50%,#e8e000);border-radius:1px"></div>
<div style="left:94.00px;top:144.00px;width:19.00px;height:6.00px;background:#f77f0a"></div>
<div style="left:94.00px;top:155.00px;width:19.00px;height:6.00px;background:#f77f0a"></div>
<div style="left:119.00px;top:138.00px;width:20.00px;height:29.00px;background:#0a120a;border-radius:1.5px"></div>
<div style="left:120.00px;top:139.00px;width:18.00px;height:4.00px;background:linear-gradient(#e4dc00,#f6f038 50%,#e8e000);border-radius:1px"></div>
<div style="left:120.00px;top:151.00px;width:18.00px;height:3.00px;background:linear-gradient(#e4dc00,#f6f038 50%,#e8e000);border-radius:1px"></div>
<div style="left:120.00px;top:162.00px;width:18.00px;height:4.00px;background:linear-gradient(#e4dc00,#f6f038 50%,#e8e000);border-radius:1px"></div>
<div style="left:120.00px;top:144.00px;width:18.00px;height:6.00px;background:#2eb91a"></div>
<div style="left:120.00px;top:155.00px;width:18.00px;height:6.00px;background:#2eb91a"></div>
<div style="left:145.00px;top:138.00px;width:20.00px;height:29.00px;background:#0a120a;border-radius:1.5px"></div>
<div style="left:146.00px;top:139.00px;width:18.00px;height:4.00px;background:linear-gradient(#e4dc00,#f6f038 50%,#e8e000);border-radius:1px"></div>
<div style="left:146.00px;top:151.00px;width:18.00px;height:3.00px;background:linear-gradient(#e4dc00,#f6f038 50%,#e8e000);border-radius:1px"></div>
<div style="left:146.00px;top:162.00px;width:18.00px;height:4.00px;background:linear-gradient(#e4dc00,#f6f038 50%,#e8e000);border-radius:1px"></div>
<div style="left:146.00px;top:144.00px;width:18.00px;height:6.00px;background:#2eb91a"></div>
<div style="left:146.00px;top:155.00px;width:18.00px;height:6.00px;background:#2eb91a"></div>
<div style="left:170.00px;top:138.00px;width:21.00px;height:29.00px;background:#0a120a;border-radius:1.5px"></div>
<div style="left:171.00px;top:139.00px;width:19.00px;height:4.00px;background:linear-gradient(#e4dc00,#f6f038 50%,#e8e000);border-radius:1px"></div>
<div style="left:171.00px;top:151.00px;width:19.00px;height:3.00px;background:linear-gradient(#e4dc00,#f6f038 50%,#e8e000);border-radius:1px"></div>
<div style="left:171.00px;top:162.00px;width:19.00px;height:4.00px;background:linear-gradient(#e4dc00,#f6f038 50%,#e8e000);border-radius:1px"></div>
<div style="left:171.00px;top:144.00px;width:19.00px;height:6.00px;background:#2eb91a"></div>
<div style="left:171.00px;top:155.00px;width:19.00px;height:6.00px;background:#2eb91a"></div>
<div style="left:196.00px;top:138.00px;width:20.00px;height:29.00px;background:#0a120a;border-radius:1.5px"></div>
<div style="left:197.00px;top:139.00px;width:18.00px;height:4.00px;background:linear-gradient(#e4dc00,#f6f038 50%,#e8e000);border-radius:1px"></div>
<div style="left:197.00px;top:151.00px;width:18.00px;height:3.00px;background:linear-gradient(#e4dc00,#f6f038 50%,#e8e000);border-radius:1px"></div>
<div style="left:197.00px;top:162.00px;width:18.00px;height:4.00px;background:linear-gradient(#e4dc00,#f6f038 50%,#e8e000);border-radius:1px"></div>
<div style="left:197.00px;top:144.00px;width:18.00px;height:6.00px;background:#2eb91a"></div>
<div style="left:197.00px;top:155.00px;width:18.00px;height:6.00px;background:#2eb91a"></div>
<div style="left:221.00px;top:138.00px;width:21.00px;height:29.00px;background:#0a120a;border-radius:1.5px"></div>
<div style="left:222.00px;top:139.00px;width:19.00px;height:4.00px;background:linear-gradient(#e4dc00,#f6f038 50%,#e8e000);border-radius:1px"></div>
<div style="left:222.00px;top:151.00px;width:19.00px;height:3.00px;background:linear-gradient(#e4dc00,#f6f038 50%,#e8e000);border-radius:1px"></div>
<div style="left:222.00px;top:162.00px;width:19.00px;height:4.00px;background:linear-gradient(#e4dc00,#f6f038 50%,#e8e000);border-radius:1px"></div>
<div style="left:222.00px;top:144.00px;width:19.00px;height:6.00px;background:#2eb91a"></div>
<div style="left:222.00px;top:155.00px;width:19.00px;height:6.00px;background:#2eb91a"></div>
<div style="left:247.00px;top:138.00px;width:20.00px;height:29.00px;background:#0a120a;border-radius:1.5px"></div>
<div style="left:248.00px;top:139.00px;width:18.00px;height:4.00px;background:linear-gradient(#e4dc00,#f6f038 50%,#e8e000);border-radius:1px"></div>
<div style="left:248.00px;top:151.00px;width:18.00px;height:3.00px;background:linear-gradient(#e4dc00,#f6f038 50%,#e8e000);border-radius:1px"></div>
<div style="left:248.00px;top:162.00px;width:18.00px;height:4.00px;background:linear-gradient(#e4dc00,#f6f038 50%,#e8e000);border-radius:1px"></div>
<div style="left:248.00px;top:144.00px;width:18.00px;height:6.00px;background:#2eb91a"></div>
<div style="left:248.00px;top:155.00px;width:18.00px;height:6.00px;background:#2eb91a"></div>
<div style="left:273.00px;top:138.00px;width:20.00px;height:29.00px;background:#0a120a;border-radius:1.5px"></div>
<div style="left:274.00px;top:139.00px;width:18.00px;height:4.00px;background:linear-gradient(#e4dc00,#f6f038 50%,#e8e000);border-radius:1px"></div>
<div style="left:274.00px;top:151.00px;width:18.00px;height:3.00px;background:linear-gradient(#e4dc00,#f6f038 50%,#e8e000);border-radius:1px"></div>
<div style="left:274.00px;top:162.00px;width:18.00px;height:4.00px;background:linear-gradient(#e4dc00,#f6f038 50%,#e8e000);border-radius:1px"></div>
<div style="left:274.00px;top:144.00px;width:18.00px;height:6.00px;background:#2eb91a"></div>
<div style="left:274.00px;top:155.00px;width:18.00px;height:6.00px;background:#2eb91a"></div>
<div style="left:298.00px;top:138.00px;width:21.00px;height:29.00px;background:#0a120a;border-radius:1.5px"></div>
<div style="left:299.00px;top:139.00px;width:19.00px;height:4.00px;background:linear-gradient(#e4dc00,#f6f038 50%,#e8e000);border-radius:1px"></div>
<div style="left:299.00px;top:151.00px;width:19.00px;height:3.00px;background:linear-gradient(#e4dc00,#f6f038 50%,#e8e000);border-radius:1px"></div>
<div style="left:299.00px;top:162.00px;width:19.00px;height:4.00px;background:linear-gradient(#e4dc00,#f6f038 50%,#e8e000);border-radius:1px"></div>
<div style="left:299.00px;top:144.00px;width:19.00px;height:6.00px;background:#2eb91a"></div>
<div style="left:299.00px;top:155.00px;width:19.00px;height:6.00px;background:#2eb91a"></div>
<div style="left:324.00px;top:138.00px;width:20.00px;height:29.00px;background:#0a120a;border-radius:1.5px"></div>
<div style="left:325.00px;top:139.00px;width:18.00px;height:4.00px;background:linear-gradient(#e4dc00,#f6f038 50%,#e8e000);border-radius:1px"></div>
<div style="left:325.00px;top:151.00px;width:18.00px;height:3.00px;background:linear-gradient(#e4dc00,#f6f038 50%,#e8e000);border-radius:1px"></div>
<div style="left:325.00px;top:162.00px;width:18.00px;height:4.00px;background:linear-gradient(#e4dc00,#f6f038 50%,#e8e000);border-radius:1px"></div>
<div style="left:325.00px;top:144.00px;width:18.00px;height:6.00px;background:#2eb91a"></div>
<div style="left:325.00px;top:155.00px;width:18.00px;height:6.00px;background:#2eb91a"></div>
<div style="left:349.00px;top:138.00px;width:21.00px;height:29.00px;background:#0a120a;border-radius:1.5px"></div>
<div style="left:350.00px;top:139.00px;width:19.00px;height:4.00px;background:linear-gradient(#e4dc00,#f6f038 50%,#e8e000);border-radius:1px"></div>
<div style="left:350.00px;top:151.00px;width:19.00px;height:3.00px;background:linear-gradient(#e4dc00,#f6f038 50%,#e8e000);border-radius:1px"></div>
<div style="left:350.00px;top:162.00px;width:19.00px;height:4.00px;background:linear-gradient(#e4dc00,#f6f038 50%,#e8e000);border-radius:1px"></div>
<div style="left:350.00px;top:144.00px;width:19.00px;height:6.00px;background:#2eb91a"></div>
<div style="left:350.00px;top:155.00px;width:19.00px;height:6.00px;background:#2eb91a"></div>
<div style="left:375.00px;top:138.00px;width:20.00px;height:29.00px;background:#0a120a;border-radius:1.5px"></div>
<div style="left:376.00px;top:139.00px;width:18.00px;height:4.00px;background:linear-gradient(#e4dc00,#f6f038 50%,#e8e000);border-radius:1px"></div>
<div style="left:376.00px;top:151.00px;width:18.00px;height:3.00px;background:linear-gradient(#e4dc00,#f6f038 50%,#e8e000);border-radius:1px"></div>
<div style="left:376.00px;top:162.00px;width:18.00px;height:4.00px;background:linear-gradient(#e4dc00,#f6f038 50%,#e8e000);border-radius:1px"></div>
<div style="left:376.00px;top:144.00px;width:18.00px;height:6.00px;background:#2eb91a"></div>
<div style="left:376.00px;top:155.00px;width:18.00px;height:6.00px;background:#2eb91a"></div>
<div style="left:401.00px;top:138.00px;width:20.00px;height:29.00px;background:#0a120a;border-radius:1.5px"></div>
<div style="left:402.00px;top:139.00px;width:18.00px;height:4.00px;background:linear-gradient(#e4dc00,#f6f038 50%,#e8e000);border-radius:1px"></div>
<div style="left:402.00px;top:151.00px;width:18.00px;height:3.00px;background:linear-gradient(#e4dc00,#f6f038 50%,#e8e000);border-radius:1px"></div>
<div style="left:402.00px;top:162.00px;width:18.00px;height:4.00px;background:linear-gradient(#e4dc00,#f6f038 50%,#e8e000);border-radius:1px"></div>
<div style="left:402.00px;top:144.00px;width:18.00px;height:6.00px;background:#2eb91a"></div>
<div style="left:402.00px;top:155.00px;width:18.00px;height:6.00px;background:#2eb91a"></div>
<div style="left:426.00px;top:138.00px;width:21.00px;height:29.00px;background:#0a120a;border-radius:1.5px"></div>
<div style="left:427.00px;top:139.00px;width:19.00px;height:4.00px;background:linear-gradient(#e4dc00,#f6f038 50%,#e8e000);border-radius:1px"></div>
<div style="left:427.00px;top:151.00px;width:19.00px;height:3.00px;background:linear-gradient(#e4dc00,#f6f038 50%,#e8e000);border-radius:1px"></div>
<div style="left:427.00px;top:162.00px;width:19.00px;height:4.00px;background:linear-gradient(#e4dc00,#f6f038 50%,#e8e000);border-radius:1px"></div>
<div style="left:427.00px;top:144.00px;width:19.00px;height:6.00px;background:#2eb91a"></div>
<div style="left:427.00px;top:155.00px;width:19.00px;height:6.00px;background:#2eb91a"></div>
<div style="left:452.00px;top:138.00px;width:20.00px;height:29.00px;background:#0a120a;border-radius:1.5px"></div>
<div style="left:453.00px;top:139.00px;width:18.00px;height:4.00px;background:linear-gradient(#e4dc00,#f6f038 50%,#e8e000);border-radius:1px"></div>
<div style="left:453.00px;top:151.00px;width:18.00px;height:3.00px;background:linear-gradient(#e4dc00,#f6f038 50%,#e8e000);border-radius:1px"></div>
<div style="left:453.00px;top:162.00px;width:18.00px;height:4.00px;background:linear-gradient(#e4dc00,#f6f038 50%,#e8e000);border-radius:1px"></div>
<div style="left:453.00px;top:144.00px;width:18.00px;height:6.00px;background:#2eb91a"></div>
<div style="left:453.00px;top:155.00px;width:18.00px;height:6.00px;background:#2eb91a"></div>
<div style="left:477.00px;top:138.00px;width:21.00px;height:29.00px;background:#0a120a;border-radius:1.5px"></div>
<div style="left:478.00px;top:139.00px;width:19.00px;height:4.00px;background:linear-gradient(#e4dc00,#f6f038 50%,#e8e000);border-radius:1px"></div>
<div style="left:478.00px;top:151.00px;width:19.00px;height:3.00px;background:linear-gradient(#e4dc00,#f6f038 50%,#e8e000);border-radius:1px"></div>
<div style="left:478.00px;top:162.00px;width:19.00px;height:4.00px;background:linear-gradient(#e4dc00,#f6f038 50%,#e8e000);border-radius:1px"></div>
<div style="left:478.00px;top:144.00px;width:19.00px;height:6.00px;background:#8ef4fa"></div>
<div style="left:478.00px;top:155.00px;width:19.00px;height:6.00px;background:#8ef4fa"></div>
<div style="left:503.00px;top:138.00px;width:20.00px;height:29.00px;background:#0a120a;border-radius:1.5px"></div>
<div style="left:504.00px;top:139.00px;width:18.00px;height:4.00px;background:linear-gradient(#e4dc00,#f6f038 50%,#e8e000);border-radius:1px"></div>
<div style="left:504.00px;top:151.00px;width:18.00px;height:3.00px;background:linear-gradient(#e4dc00,#f6f038 50%,#e8e000);border-radius:1px"></div>
<div style="left:504.00px;top:162.00px;width:18.00px;height:4.00px;background:linear-gradient(#e4dc00,#f6f038 50%,#e8e000);border-radius:1px"></div>
<div style="left:504.00px;top:144.00px;width:18.00px;height:6.00px;background:#2eb91a"></div>
<div style="left:504.00px;top:155.00px;width:18.00px;height:6.00px;background:#2eb91a"></div>
<div style="left:529.00px;top:138.00px;width:20.00px;height:29.00px;background:#0a120a;border-radius:1.5px"></div>
<div style="left:530.00px;top:139.00px;width:18.00px;height:4.00px;background:linear-gradient(#e4dc00,#f6f038 50%,#e8e000);border-radius:1px"></div>
<div style="left:530.00px;top:151.00px;width:18.00px;height:3.00px;background:linear-gradient(#e4dc00,#f6f038 50%,#e8e000);border-radius:1px"></div>
<div style="left:530.00px;top:162.00px;width:18.00px;height:4.00px;background:linear-gradient(#e4dc00,#f6f038 50%,#e8e000);border-radius:1px"></div>
<div style="left:530.00px;top:144.00px;width:18.00px;height:6.00px;background:#2eb91a"></div>
<div style="left:530.00px;top:155.00px;width:18.00px;height:6.00px;background:#2eb91a"></div>
<div style="left:42.00px;top:172.00px;width:21.00px;height:29.00px;background:#0a120a;border-radius:1.5px"></div>
<div style="left:43.00px;top:173.00px;width:19.00px;height:4.00px;background:linear-gradient(#e4dc00,#f6f038 50%,#e8e000);border-radius:1px"></div>
<div style="left:43.00px;top:185.00px;width:19.00px;height:3.00px;background:linear-gradient(#e4dc00,#f6f038 50%,#e8e000);border-radius:1px"></div>
<div style="left:43.00px;top:196.00px;width:19.00px;height:4.00px;background:linear-gradient(#e4dc00,#f6f038 50%,#e8e000);border-radius:1px"></div>
<div style="left:43.00px;top:178.00px;width:19.00px;height:6.00px;background:#2eb91a"></div>
<div style="left:43.00px;top:189.00px;width:19.00px;height:6.00px;background:#2eb91a"></div>
<div style="left:68.00px;top:172.00px;width:20.00px;height:29.00px;background:#0a120a;border-radius:1.5px"></div>
<div style="left:69.00px;top:173.00px;width:18.00px;height:4.00px;background:linear-gradient(#e4dc00,#f6f038 50%,#e8e000);border-radius:1px"></div>
<div style="left:69.00px;top:185.00px;width:18.00px;height:3.00px;background:linear-gradient(#e4dc00,#f6f038 50%,#e8e000);border-radius:1px"></div>
<div style="left:69.00px;top:196.00px;width:18.00px;height:4.00px;background:linear-gradient(#e4dc00,#f6f038 50%,#e8e000);border-radius:1px"></div>
<div style="left:69.00px;top:178.00px;width:18.00px;height:6.00px;background:#2eb91a"></div>
<div style="left:69.00px;top:189.00px;width:18.00px;height:6.00px;background:#2eb91a"></div>
<div style="left:93.00px;top:172.00px;width:21.00px;height:29.00px;background:#0a120a;border-radius:1.5px"></div>
<div style="left:94.00px;top:173.00px;width:19.00px;height:4.00px;background:linear-gradient(#e4dc00,#f6f038 50%,#e8e000);border-radius:1px"></div>
<div style="left:94.00px;top:185.00px;width:19.00px;height:3.00px;background:linear-gradient(#e4dc00,#f6f038 50%,#e8e000);border-radius:1px"></div>
<div style="left:94.00px;top:196.00px;width:19.00px;height:4.00px;background:linear-gradient(#e4dc00,#f6f038 50%,#e8e000);border-radius:1px"></div>
<div style="left:94.00px;top:178.00px;width:19.00px;height:6.00px;background:#2eb91a"></div>
<div style="left:94.00px;top:189.00px;width:19.00px;height:6.00px;background:#2eb91a"></div>
<div style="left:119.00px;top:172.00px;width:20.00px;height:29.00px;background:#0a120a;border-radius:1.5px"></div>
<div style="left:120.00px;top:173.00px;width:18.00px;height:4.00px;background:linear-gradient(#e4dc00,#f6f038 50%,#e8e000);border-radius:1px"></div>
<div style="left:120.00px;top:185.00px;width:18.00px;height:3.00px;background:linear-gradient(#e4dc00,#f6f038 50%,#e8e000);border-radius:1px"></div>
<div style="left:120.00px;top:196.00px;width:18.00px;height:4.00px;background:linear-gradient(#e4dc00,#f6f038 50%,#e8e000);border-radius:1px"></div>
<div style="left:120.00px;top:178.00px;width:18.00px;height:6.00px;background:#2eb91a"></div>
<div style="left:120.00px;top:189.00px;width:18.00px;height:6.00px;background:#2eb91a"></div>
<div style="left:145.00px;top:172.00px;width:20.00px;height:29.00px;background:#0a120a;border-radius:1.5px"></div>
<div style="left:146.00px;top:173.00px;width:18.00px;height:4.00px;background:linear-gradient(#e4dc00,#f6f038 50%,#e8e000);border-radius:1px"></div>
<div style="left:146.00px;top:185.00px;width:18.00px;height:3.00px;background:linear-gradient(#e4dc00,#f6f038 50%,#e8e000);border-radius:1px"></div>
<div style="left:146.00px;top:196.00px;width:18.00px;height:4.00px;background:linear-gradient(#e4dc00,#f6f038 50%,#e8e000);border-radius:1px"></div>
<div style="left:146.00px;top:178.00px;width:18.00px;height:6.00px;background:#2eb91a"></div>
<div style="left:146.00px;top:189.00px;width:18.00px;height:6.00px;background:#2eb91a"></div>
<div style="left:170.00px;top:172.00px;width:21.00px;height:29.00px;background:#0a120a;border-radius:1.5px"></div>
<div style="left:171.00px;top:173.00px;width:19.00px;height:4.00px;background:linear-gradient(#e4dc00,#f6f038 50%,#e8e000);border-radius:1px"></div>
<div style="left:171.00px;top:185.00px;width:19.00px;height:3.00px;background:linear-gradient(#e4dc00,#f6f038 50%,#e8e000);border-radius:1px"></div>
<div style="left:171.00px;top:196.00px;width:19.00px;height:4.00px;background:linear-gradient(#e4dc00,#f6f038 50%,#e8e000);border-radius:1px"></div>
<div style="left:171.00px;top:178.00px;width:19.00px;height:6.00px;background:#2eb91a"></div>
<div style="left:171.00px;top:189.00px;width:19.00px;height:6.00px;background:#2eb91a"></div>
<div style="left:196.00px;top:172.00px;width:20.00px;height:29.00px;background:#0a120a;border-radius:1.5px"></div>
<div style="left:197.00px;top:173.00px;width:18.00px;height:4.00px;background:linear-gradient(#e4dc00,#f6f038 50%,#e8e000);border-radius:1px"></div>
<div style="left:197.00px;top:185.00px;width:18.00px;height:3.00px;background:linear-gradient(#e4dc00,#f6f038 50%,#e8e000);border-radius:1px"></div>
<div style="left:197.00px;top:196.00px;width:18.00px;height:4.00px;background:linear-gradient(#e4dc00,#f6f038 50%,#e8e000);border-radius:1px"></div>
<div style="left:197.00px;top:178.00px;width:18.00px;height:6.00px;background:#2eb91a"></div>
<div style="left:197.00px;top:189.00px;width:18.00px;height:6.00px;background:#2eb91a"></div>
<div style="left:221.00px;top:172.00px;width:21.00px;height:29.00px;background:#0a120a;border-radius:1.5px"></div>
<div style="left:222.00px;top:173.00px;width:19.00px;height:4.00px;background:linear-gradient(#e4dc00,#f6f038 50%,#e8e000);border-radius:1px"></div>
<div style="left:222.00px;top:185.00px;width:19.00px;height:3.00px;background:linear-gradient(#e4dc00,#f6f038 50%,#e8e000);border-radius:1px"></div>
<div style="left:222.00px;top:196.00px;width:19.00px;height:4.00px;background:linear-gradient(#e4dc00,#f6f038 50%,#e8e000);border-radius:1px"></div>
<div style="left:222.00px;top:178.00px;width:19.00px;height:6.00px;background:#8ef4fa"></div>
<div style="left:222.00px;top:189.00px;width:19.00px;height:6.00px;background:#8ef4fa"></div>
<div style="left:247.00px;top:172.00px;width:20.00px;height:29.00px;background:#0a120a;border-radius:1.5px"></div>
<div style="left:248.00px;top:173.00px;width:18.00px;height:4.00px;background:linear-gradient(#e4dc00,#f6f038 50%,#e8e000);border-radius:1px"></div>
<div style="left:248.00px;top:185.00px;width:18.00px;height:3.00px;background:linear-gradient(#e4dc00,#f6f038 50%,#e8e000);border-radius:1px"></div>
<div style="left:248.00px;top:196.00px;width:18.00px;height:4.00px;background:linear-gradient(#e4dc00,#f6f038 50%,#e8e000);border-radius:1px"></div>
<div style="left:248.00px;top:178.00px;width:18.00px;height:6.00px;background:#2eb91a"></div>
<div style="left:248.00px;top:189.00px;width:18.00px;height:6.00px;background:#2eb91a"></div>
<div style="left:273.00px;top:172.00px;width:20.00px;height:29.00px;background:#0a120a;border-radius:1.5px"></div>
<div style="left:274.00px;top:173.00px;width:18.00px;height:4.00px;background:linear-gradient(#e4dc00,#f6f038 50%,#e8e000);border-radius:1px"></div>
<div style="left:274.00px;top:185.00px;width:18.00px;height:3.00px;background:linear-gradient(#e4dc00,#f6f038 50%,#e8e000);border-radius:1px"></div>
<div style="left:274.00px;top:196.00px;width:18.00px;height:4.00px;background:linear-gradient(#e4dc00,#f6f038 50%,#e8e000);border-radius:1px"></div>
<div style="left:274.00px;top:178.00px;width:18.00px;height:6.00px;background:#2eb91a"></div>
<div style="left:274.00px;top:189.00px;width:18.00px;height:6.00px;background:#2eb91a"></div>
<div style="left:298.00px;top:172.00px;width:21.00px;height:29.00px;background:#0a120a;border-radius:1.5px"></div>
<div style="left:299.00px;top:173.00px;width:19.00px;height:4.00px;background:linear-gradient(#e4dc00,#f6f038 50%,#e8e000);border-radius:1px"></div>
<div style="left:299.00px;top:185.00px;width:19.00px;height:3.00px;background:linear-gradient(#e4dc00,#f6f038 50%,#e8e000);border-radius:1px"></div>
<div style="left:299.00px;top:196.00px;width:19.00px;height:4.00px;background:linear-gradient(#e4dc00,#f6f038 50%,#e8e000);border-radius:1px"></div>
<div style="left:299.00px;top:178.00px;width:19.00px;height:6.00px;background:#2eb91a"></div>
<div style="left:299.00px;top:189.00px;width:19.00px;height:6.00px;background:#2eb91a"></div>
<div style="left:324.00px;top:172.00px;width:20.00px;height:29.00px;background:#0a120a;border-radius:1.5px"></div>
<div style="left:325.00px;top:173.00px;width:18.00px;height:4.00px;background:linear-gradient(#e4dc00,#f6f038 50%,#e8e000);border-radius:1px"></div>
<div style="left:325.00px;top:185.00px;width:18.00px;height:3.00px;background:linear-gradient(#e4dc00,#f6f038 50%,#e8e000);border-radius:1px"></div>
<div style="left:325.00px;top:196.00px;width:18.00px;height:4.00px;background:linear-gradient(#e4dc00,#f6f038 50%,#e8e000);border-radius:1px"></div>
<div style="left:325.00px;top:178.00px;width:18.00px;height:6.00px;background:#2eb91a"></div>
<div style="left:325.00px;top:189.00px;width:18.00px;height:6.00px;background:#2eb91a"></div>
<div style="left:349.00px;top:172.00px;width:21.00px;height:29.00px;background:#0a120a;border-radius:1.5px"></div>
<div style="left:350.00px;top:173.00px;width:19.00px;height:4.00px;background:linear-gradient(#e4dc00,#f6f038 50%,#e8e000);border-radius:1px"></div>
<div style="left:350.00px;top:185.00px;width:19.00px;height:3.00px;background:linear-gradient(#e4dc00,#f6f038 50%,#e8e000);border-radius:1px"></div>
<div style="left:350.00px;top:196.00px;width:19.00px;height:4.00px;background:linear-gradient(#e4dc00,#f6f038 50%,#e8e000);border-radius:1px"></div>
<div style="left:350.00px;top:178.00px;width:19.00px;height:6.00px;background:#2eb91a"></div>
<div style="left:350.00px;top:189.00px;width:19.00px;height:6.00px;background:#2eb91a"></div>
<div style="left:375.00px;top:172.00px;width:20.00px;height:29.00px;background:#0a120a;border-radius:1.5px"></div>
<div style="left:376.00px;top:173.00px;width:18.00px;height:4.00px;background:linear-gradient(#e4dc00,#f6f038 50%,#e8e000);border-radius:1px"></div>
<div style="left:376.00px;top:185.00px;width:18.00px;height:3.00px;background:linear-gradient(#e4dc00,#f6f038 50%,#e8e000);border-radius:1px"></div>
<div style="left:376.00px;top:196.00px;width:18.00px;height:4.00px;background:linear-gradient(#e4dc00,#f6f038 50%,#e8e000);border-radius:1px"></div>
<div style="left:376.00px;top:178.00px;width:18.00px;height:6.00px;background:#2eb91a"></div>
<div style="left:376.00px;top:189.00px;width:18.00px;height:6.00px;background:#2eb91a"></div>
<div style="left:401.00px;top:172.00px;width:20.00px;height:29.00px;background:#0a120a;border-radius:1.5px"></div>
<div style="left:402.00px;top:173.00px;width:18.00px;height:4.00px;background:linear-gradient(#e4dc00,#f6f038 50%,#e8e000);border-radius:1px"></div>
<div style="left:402.00px;top:185.00px;width:18.00px;height:3.00px;background:linear-gradient(#e4dc00,#f6f038 50%,#e8e000);border-radius:1px"></div>
<div style="left:402.00px;top:196.00px;width:18.00px;height:4.00px;background:linear-gradient(#e4dc00,#f6f038 50%,#e8e000);border-radius:1px"></div>
<div style="left:402.00px;top:178.00px;width:18.00px;height:6.00px;background:#2eb91a"></div>
<div style="left:402.00px;top:189.00px;width:18.00px;height:6.00px;background:#2eb91a"></div>
<div style="left:426.00px;top:172.00px;width:21.00px;height:29.00px;background:#0a120a;border-radius:1.5px"></div>
<div style="left:427.00px;top:173.00px;width:19.00px;height:4.00px;background:linear-gradient(#e4dc00,#f6f038 50%,#e8e000);border-radius:1px"></div>
<div style="left:427.00px;top:185.00px;width:19.00px;height:3.00px;background:linear-gradient(#e4dc00,#f6f038 50%,#e8e000);border-radius:1px"></div>
<div style="left:427.00px;top:196.00px;width:19.00px;height:4.00px;background:linear-gradient(#e4dc00,#f6f038 50%,#e8e000);border-radius:1px"></div>
<div style="left:427.00px;top:178.00px;width:19.00px;height:6.00px;background:#2eb91a"></div>
<div style="left:427.00px;top:189.00px;width:19.00px;height:6.00px;background:#2eb91a"></div>
<div style="left:452.00px;top:172.00px;width:20.00px;height:29.00px;background:#0a120a;border-radius:1.5px"></div>
<div style="left:453.00px;top:173.00px;width:18.00px;height:4.00px;background:linear-gradient(#e4dc00,#f6f038 50%,#e8e000);border-radius:1px"></div>
<div style="left:453.00px;top:185.00px;width:18.00px;height:3.00px;background:linear-gradient(#e4dc00,#f6f038 50%,#e8e000);border-radius:1px"></div>
<div style="left:453.00px;top:196.00px;width:18.00px;height:4.00px;background:linear-gradient(#e4dc00,#f6f038 50%,#e8e000);border-radius:1px"></div>
<div style="left:453.00px;top:178.00px;width:18.00px;height:6.00px;background:#2eb91a"></div>
<div style="left:453.00px;top:189.00px;width:18.00px;height:6.00px;background:#2eb91a"></div>
<div style="left:477.00px;top:172.00px;width:21.00px;height:29.00px;background:#0a120a;border-radius:1.5px"></div>
<div style="left:478.00px;top:173.00px;width:19.00px;height:4.00px;background:linear-gradient(#e4dc00,#f6f038 50%,#e8e000);border-radius:1px"></div>
<div style="left:478.00px;top:185.00px;width:19.00px;height:3.00px;background:linear-gradient(#e4dc00,#f6f038 50%,#e8e000);border-radius:1px"></div>
<div style="left:478.00px;top:196.00px;width:19.00px;height:4.00px;background:linear-gradient(#e4dc00,#f6f038 50%,#e8e000);border-radius:1px"></div>
<div style="left:478.00px;top:178.00px;width:19.00px;height:6.00px;background:#2eb91a"></div>
<div style="left:478.00px;top:189.00px;width:19.00px;height:6.00px;background:#2eb91a"></div>
<div style="left:503.00px;top:172.00px;width:20.00px;height:29.00px;background:#0a120a;border-radius:1.5px"></div>
<div style="left:504.00px;top:173.00px;width:18.00px;height:4.00px;background:linear-gradient(#e4dc00,#f6f038 50%,#e8e000);border-radius:1px"></div>
<div style="left:504.00px;top:185.00px;width:18.00px;height:3.00px;background:linear-gradient(#e4dc00,#f6f038 50%,#e8e000);border-radius:1px"></div>
<div style="left:504.00px;top:196.00px;width:18.00px;height:4.00px;background:linear-gradient(#e4dc00,#f6f038 50%,#e8e000);border-radius:1px"></div>
<div style="left:504.00px;top:178.00px;width:18.00px;height:6.00px;background:#2eb91a"></div>
<div style="left:504.00px;top:189.00px;width:18.00px;height:6.00px;background:#2eb91a"></div>
<div style="left:529.00px;top:172.00px;width:20.00px;height:29.00px;background:#0a120a;border-radius:1.5px"></div>
<div style="left:530.00px;top:173.00px;width:18.00px;height:4.00px;background:linear-gradient(#e4dc00,#f6f038 50%,#e8e000);border-radius:1px"></div>
<div style="left:530.00px;top:185.00px;width:18.00px;height:3.00px;background:linear-gradient(#e4dc00,#f6f038 50%,#e8e000);border-radius:1px"></div>
<div style="left:530.00px;top:196.00px;width:18.00px;height:4.00px;background:linear-gradient(#e4dc00,#f6f038 50%,#e8e000);border-radius:1px"></div>
<div style="left:530.00px;top:178.00px;width:18.00px;height:6.00px;background:#2eb91a"></div>
<div style="left:530.00px;top:189.00px;width:18.00px;height:6.00px;background:#2eb91a"></div>
<div style="left:42.00px;top:206.00px;width:21.00px;height:29.00px;background:#0a120a;border-radius:1.5px"></div>
<div style="left:43.00px;top:207.00px;width:19.00px;height:4.00px;background:linear-gradient(#e4dc00,#f6f038 50%,#e8e000);border-radius:1px"></div>
<div style="left:43.00px;top:219.00px;width:19.00px;height:3.00px;background:linear-gradient(#e4dc00,#f6f038 50%,#e8e000);border-radius:1px"></div>
<div style="left:43.00px;top:230.00px;width:19.00px;height:4.00px;background:linear-gradient(#e4dc00,#f6f038 50%,#e8e000);border-radius:1px"></div>
<div style="left:43.00px;top:212.00px;width:19.00px;height:6.00px;background:#2eb91a"></div>
<div style="left:43.00px;top:223.00px;width:19.00px;height:6.00px;background:#2eb91a"></div>
<div style="left:68.00px;top:206.00px;width:20.00px;height:29.00px;background:#0a120a;border-radius:1.5px"></div>
<div style="left:69.00px;top:207.00px;width:18.00px;height:4.00px;background:linear-gradient(#e4dc00,#f6f038 50%,#e8e000);border-radius:1px"></div>
<div style="left:69.00px;top:219.00px;width:18.00px;height:3.00px;background:linear-gradient(#e4dc00,#f6f038 50%,#e8e000);border-radius:1px"></div>
<div style="left:69.00px;top:230.00px;width:18.00px;height:4.00px;background:linear-gradient(#e4dc00,#f6f038 50%,#e8e000);border-radius:1px"></div>
<div style="left:69.00px;top:212.00px;width:18.00px;height:6.00px;background:#2eb91a"></div>
<div style="left:69.00px;top:223.00px;width:18.00px;height:6.00px;background:#2eb91a"></div>
<div style="left:93.00px;top:206.00px;width:21.00px;height:29.00px;background:#0a120a;border-radius:1.5px"></div>
<div style="left:94.00px;top:207.00px;width:19.00px;height:4.00px;background:linear-gradient(#e4dc00,#f6f038 50%,#e8e000);border-radius:1px"></div>
<div style="left:94.00px;top:219.00px;width:19.00px;height:3.00px;background:linear-gradient(#e4dc00,#f6f038 50%,#e8e000);border-radius:1px"></div>
<div style="left:94.00px;top:230.00px;width:19.00px;height:4.00px;background:linear-gradient(#e4dc00,#f6f038 50%,#e8e000);border-radius:1px"></div>
<div style="left:94.00px;top:212.00px;width:19.00px;height:6.00px;background:#2eb91a"></div>
<div style="left:94.00px;top:223.00px;width:19.00px;height:6.00px;background:#2eb91a"></div>
<div style="left:119.00px;top:206.00px;width:20.00px;height:29.00px;background:#0a120a;border-radius:1.5px"></div>
<div style="left:120.00px;top:207.00px;width:18.00px;height:4.00px;background:linear-gradient(#e4dc00,#f6f038 50%,#e8e000);border-radius:1px"></div>
<div style="left:120.00px;top:219.00px;width:18.00px;height:3.00px;background:linear-gradient(#e4dc00,#f6f038 50%,#e8e000);border-radius:1px"></div>
<div style="left:120.00px;top:230.00px;width:18.00px;height:4.00px;background:linear-gradient(#e4dc00,#f6f038 50%,#e8e000);border-radius:1px"></div>
<div style="left:120.00px;top:212.00px;width:18.00px;height:6.00px;background:#2eb91a"></div>
<div style="left:120.00px;top:223.00px;width:18.00px;height:6.00px;background:#2eb91a"></div>
<div style="left:145.00px;top:206.00px;width:20.00px;height:29.00px;background:#0a120a;border-radius:1.5px"></div>
<div style="left:146.00px;top:207.00px;width:18.00px;height:4.00px;background:linear-gradient(#e4dc00,#f6f038 50%,#e8e000);border-radius:1px"></div>
<div style="left:146.00px;top:219.00px;width:18.00px;height:3.00px;background:linear-gradient(#e4dc00,#f6f038 50%,#e8e000);border-radius:1px"></div>
<div style="left:146.00px;top:230.00px;width:18.00px;height:4.00px;background:linear-gradient(#e4dc00,#f6f038 50%,#e8e000);border-radius:1px"></div>
<div style="left:146.00px;top:212.00px;width:18.00px;height:6.00px;background:#2eb91a"></div>
<div style="left:146.00px;top:223.00px;width:18.00px;height:6.00px;background:#2eb91a"></div>
<div style="left:170.00px;top:206.00px;width:21.00px;height:29.00px;background:#0a120a;border-radius:1.5px"></div>
<div style="left:171.00px;top:207.00px;width:19.00px;height:4.00px;background:linear-gradient(#e4dc00,#f6f038 50%,#e8e000);border-radius:1px"></div>
<div style="left:171.00px;top:219.00px;width:19.00px;height:3.00px;background:linear-gradient(#e4dc00,#f6f038 50%,#e8e000);border-radius:1px"></div>
<div style="left:171.00px;top:230.00px;width:19.00px;height:4.00px;background:linear-gradient(#e4dc00,#f6f038 50%,#e8e000);border-radius:1px"></div>
<div style="left:171.00px;top:212.00px;width:19.00px;height:6.00px;background:#2eb91a"></div>
<div style="left:171.00px;top:223.00px;width:19.00px;height:6.00px;background:#2eb91a"></div>
<div style="left:196.00px;top:206.00px;width:20.00px;height:29.00px;background:#0a120a;border-radius:1.5px"></div>
<div style="left:197.00px;top:207.00px;width:18.00px;height:4.00px;background:linear-gradient(#e4dc00,#f6f038 50%,#e8e000);border-radius:1px"></div>
<div style="left:197.00px;top:219.00px;width:18.00px;height:3.00px;background:linear-gradient(#e4dc00,#f6f038 50%,#e8e000);border-radius:1px"></div>
<div style="left:197.00px;top:230.00px;width:18.00px;height:4.00px;background:linear-gradient(#e4dc00,#f6f038 50%,#e8e000);border-radius:1px"></div>
<div style="left:197.00px;top:212.00px;width:18.00px;height:6.00px;background:#2eb91a"></div>
<div style="left:197.00px;top:223.00px;width:18.00px;height:6.00px;background:#2eb91a"></div>
<div style="left:221.00px;top:206.00px;width:21.00px;height:29.00px;background:#0a120a;border-radius:1.5px"></div>
<div style="left:222.00px;top:207.00px;width:19.00px;height:4.00px;background:linear-gradient(#e4dc00,#f6f038 50%,#e8e000);border-radius:1px"></div>
<div style="left:222.00px;top:219.00px;width:19.00px;height:3.00px;background:linear-gradient(#e4dc00,#f6f038 50%,#e8e000);border-radius:1px"></div>
<div style="left:222.00px;top:230.00px;width:19.00px;height:4.00px;background:linear-gradient(#e4dc00,#f6f038 50%,#e8e000);border-radius:1px"></div>
<div style="left:222.00px;top:212.00px;width:19.00px;height:6.00px;background:#2eb91a"></div>
<div style="left:222.00px;top:223.00px;width:19.00px;height:6.00px;background:#2eb91a"></div>
<div style="left:247.00px;top:206.00px;width:20.00px;height:29.00px;background:#0a120a;border-radius:1.5px"></div>
<div style="left:248.00px;top:207.00px;width:18.00px;height:4.00px;background:linear-gradient(#e4dc00,#f6f038 50%,#e8e000);border-radius:1px"></div>
<div style="left:248.00px;top:219.00px;width:18.00px;height:3.00px;background:linear-gradient(#e4dc00,#f6f038 50%,#e8e000);border-radius:1px"></div>
<div style="left:248.00px;top:230.00px;width:18.00px;height:4.00px;background:linear-gradient(#e4dc00,#f6f038 50%,#e8e000);border-radius:1px"></div>
<div style="left:248.00px;top:212.00px;width:18.00px;height:6.00px;background:#2eb91a"></div>
<div style="left:248.00px;top:223.00px;width:18.00px;height:6.00px;background:#2eb91a"></div>
<div style="left:273.00px;top:206.00px;width:20.00px;height:29.00px;background:#0a120a;border-radius:1.5px"></div>
<div style="left:274.00px;top:207.00px;width:18.00px;height:4.00px;background:linear-gradient(#e4dc00,#f6f038 50%,#e8e000);border-radius:1px"></div>
<div style="left:274.00px;top:219.00px;width:18.00px;height:3.00px;background:linear-gradient(#e4dc00,#f6f038 50%,#e8e000);border-radius:1px"></div>
<div style="left:274.00px;top:230.00px;width:18.00px;height:4.00px;background:linear-gradient(#e4dc00,#f6f038 50%,#e8e000);border-radius:1px"></div>
<div style="left:274.00px;top:212.00px;width:18.00px;height:6.00px;background:#2eb91a"></div>
<div style="left:274.00px;top:223.00px;width:18.00px;height:6.00px;background:#2eb91a"></div>
<div style="left:298.00px;top:206.00px;width:21.00px;height:29.00px;background:#0a120a;border-radius:1.5px"></div>
<div style="left:299.00px;top:207.00px;width:19.00px;height:4.00px;background:linear-gradient(#e4dc00,#f6f038 50%,#e8e000);border-radius:1px"></div>
<div style="left:299.00px;top:219.00px;width:19.00px;height:3.00px;background:linear-gradient(#e4dc00,#f6f038 50%,#e8e000);border-radius:1px"></div>
<div style="left:299.00px;top:230.00px;width:19.00px;height:4.00px;background:linear-gradient(#e4dc00,#f6f038 50%,#e8e000);border-radius:1px"></div>
<div style="left:299.00px;top:212.00px;width:19.00px;height:6.00px;background:#2eb91a"></div>
<div style="left:299.00px;top:223.00px;width:19.00px;height:6.00px;background:#2eb91a"></div>
<div style="left:324.00px;top:206.00px;width:20.00px;height:29.00px;background:#0a120a;border-radius:1.5px"></div>
<div style="left:325.00px;top:207.00px;width:18.00px;height:4.00px;background:linear-gradient(#e4dc00,#f6f038 50%,#e8e000);border-radius:1px"></div>
<div style="left:325.00px;top:219.00px;width:18.00px;height:3.00px;background:linear-gradient(#e4dc00,#f6f038 50%,#e8e000);border-radius:1px"></div>
<div style="left:325.00px;top:230.00px;width:18.00px;height:4.00px;background:linear-gradient(#e4dc00,#f6f038 50%,#e8e000);border-radius:1px"></div>
<div style="left:325.00px;top:212.00px;width:18.00px;height:6.00px;background:#2eb91a"></div>
<div style="left:325.00px;top:223.00px;width:18.00px;height:6.00px;background:#2eb91a"></div>
<div style="left:349.00px;top:206.00px;width:21.00px;height:29.00px;background:#0a120a;border-radius:1.5px"></div>
<div style="left:350.00px;top:207.00px;width:19.00px;height:4.00px;background:linear-gradient(#e4dc00,#f6f038 50%,#e8e000);border-radius:1px"></div>
<div style="left:350.00px;top:219.00px;width:19.00px;height:3.00px;background:linear-gradient(#e4dc00,#f6f038 50%,#e8e000);border-radius:1px"></div>
<div style="left:350.00px;top:230.00px;width:19.00px;height:4.00px;background:linear-gradient(#e4dc00,#f6f038 50%,#e8e000);border-radius:1px"></div>
<div style="left:350.00px;top:212.00px;width:19.00px;height:6.00px;background:#8ef4fa"></div>
<div style="left:350.00px;top:223.00px;width:19.00px;height:6.00px;background:#8ef4fa"></div>
<div style="left:375.00px;top:206.00px;width:20.00px;height:29.00px;background:#0a120a;border-radius:1.5px"></div>
<div style="left:376.00px;top:207.00px;width:18.00px;height:4.00px;background:linear-gradient(#e4dc00,#f6f038 50%,#e8e000);border-radius:1px"></div>
<div style="left:376.00px;top:219.00px;width:18.00px;height:3.00px;background:linear-gradient(#e4dc00,#f6f038 50%,#e8e000);border-radius:1px"></div>
<div style="left:376.00px;top:230.00px;width:18.00px;height:4.00px;background:linear-gradient(#e4dc00,#f6f038 50%,#e8e000);border-radius:1px"></div>
<div style="left:376.00px;top:212.00px;width:18.00px;height:6.00px;background:#2eb91a"></div>
<div style="left:376.00px;top:223.00px;width:18.00px;height:6.00px;background:#2eb91a"></div>
<div style="left:401.00px;top:206.00px;width:20.00px;height:29.00px;background:#0a120a;border-radius:1.5px"></div>
<div style="left:402.00px;top:207.00px;width:18.00px;height:4.00px;background:linear-gradient(#e4dc00,#f6f038 50%,#e8e000);border-radius:1px"></div>
<div style="left:402.00px;top:219.00px;width:18.00px;height:3.00px;background:linear-gradient(#e4dc00,#f6f038 50%,#e8e000);border-radius:1px"></div>
<div style="left:402.00px;top:230.00px;width:18.00px;height:4.00px;background:linear-gradient(#e4dc00,#f6f038 50%,#e8e000);border-radius:1px"></div>
<div style="left:402.00px;top:212.00px;width:18.00px;height:6.00px;background:#2eb91a"></div>
<div style="left:402.00px;top:223.00px;width:18.00px;height:6.00px;background:#2eb91a"></div>
<div style="left:426.00px;top:206.00px;width:21.00px;height:29.00px;background:#0a120a;border-radius:1.5px"></div>
<div style="left:427.00px;top:207.00px;width:19.00px;height:4.00px;background:linear-gradient(#e4dc00,#f6f038 50%,#e8e000);border-radius:1px"></div>
<div style="left:427.00px;top:219.00px;width:19.00px;height:3.00px;background:linear-gradient(#e4dc00,#f6f038 50%,#e8e000);border-radius:1px"></div>
<div style="left:427.00px;top:230.00px;width:19.00px;height:4.00px;background:linear-gradient(#e4dc00,#f6f038 50%,#e8e000);border-radius:1px"></div>
<div style="left:427.00px;top:212.00px;width:19.00px;height:6.00px;background:#2eb91a"></div>
<div style="left:427.00px;top:223.00px;width:19.00px;height:6.00px;background:#2eb91a"></div>
<div style="left:452.00px;top:206.00px;width:20.00px;height:29.00px;background:#0a120a;border-radius:1.5px"></div>
<div style="left:453.00px;top:207.00px;width:18.00px;height:4.00px;background:linear-gradient(#e4dc00,#f6f038 50%,#e8e000);border-radius:1px"></div>
<div style="left:453.00px;top:219.00px;width:18.00px;height:3.00px;background:linear-gradient(#e4dc00,#f6f038 50%,#e8e000);border-radius:1px"></div>
<div style="left:453.00px;top:230.00px;width:18.00px;height:4.00px;background:linear-gradient(#e4dc00,#f6f038 50%,#e8e000);border-radius:1px"></div>
<div style="left:453.00px;top:212.00px;width:18.00px;height:6.00px;background:#2eb91a"></div>
<div style="left:453.00px;top:223.00px;width:18.00px;height:6.00px;background:#2eb91a"></div>
<div style="left:477.00px;top:206.00px;width:21.00px;height:29.00px;background:#0a120a;border-radius:1.5px"></div>
<div style="left:478.00px;top:207.00px;width:19.00px;height:4.00px;background:linear-gradient(#e4dc00,#f6f038 50%,#e8e000);border-radius:1px"></div>
<div style="left:478.00px;top:219.00px;width:19.00px;height:3.00px;background:linear-gradient(#e4dc00,#f6f038 50%,#e8e000);border-radius:1px"></div>
<div style="left:478.00px;top:230.00px;width:19.00px;height:4.00px;background:linear-gradient(#e4dc00,#f6f038 50%,#e8e000);border-radius:1px"></div>
<div style="left:478.00px;top:212.00px;width:19.00px;height:6.00px;background:#2eb91a"></div>
<div style="left:478.00px;top:223.00px;width:19.00px;height:6.00px;background:#2eb91a"></div>
<div style="left:503.00px;top:206.00px;width:20.00px;height:29.00px;background:#0a120a;border-radius:1.5px"></div>
<div style="left:504.00px;top:207.00px;width:18.00px;height:4.00px;background:linear-gradient(#e4dc00,#f6f038 50%,#e8e000);border-radius:1px"></div>
<div style="left:504.00px;top:219.00px;width:18.00px;height:3.00px;background:linear-gradient(#e4dc00,#f6f038 50%,#e8e000);border-radius:1px"></div>
<div style="left:504.00px;top:230.00px;width:18.00px;height:4.00px;background:linear-gradient(#e4dc00,#f6f038 50%,#e8e000);border-radius:1px"></div>
<div style="left:504.00px;top:212.00px;width:18.00px;height:6.00px;background:#2eb91a"></div>
<div style="left:504.00px;top:223.00px;width:18.00px;height:6.00px;background:#2eb91a"></div>
<div style="left:529.00px;top:206.00px;width:20.00px;height:29.00px;background:#0a120a;border-radius:1.5px"></div>
<div style="left:530.00px;top:207.00px;width:18.00px;height:4.00px;background:linear-gradient(#e4dc00,#f6f038 50%,#e8e000);border-radius:1px"></div>
<div style="left:530.00px;top:219.00px;width:18.00px;height:3.00px;background:linear-gradient(#e4dc00,#f6f038 50%,#e8e000);border-radius:1px"></div>
<div style="left:530.00px;top:230.00px;width:18.00px;height:4.00px;background:linear-gradient(#e4dc00,#f6f038 50%,#e8e000);border-radius:1px"></div>
<div style="left:530.00px;top:212.00px;width:18.00px;height:6.00px;background:#2eb91a"></div>
<div style="left:530.00px;top:223.00px;width:18.00px;height:6.00px;background:#2eb91a"></div>
<div style="left:42.00px;top:240.00px;width:21.00px;height:29.00px;background:#0a120a;border-radius:1.5px"></div>
<div style="left:43.00px;top:241.00px;width:19.00px;height:4.00px;background:linear-gradient(#e4dc00,#f6f038 50%,#e8e000);border-radius:1px"></div>
<div style="left:43.00px;top:253.00px;width:19.00px;height:3.00px;background:linear-gradient(#e4dc00,#f6f038 50%,#e8e000);border-radius:1px"></div>
<div style="left:43.00px;top:264.00px;width:19.00px;height:4.00px;background:linear-gradient(#e4dc00,#f6f038 50%,#e8e000);border-radius:1px"></div>
<div style="left:43.00px;top:246.00px;width:19.00px;height:6.00px;background:#2eb91a"></div>
<div style="left:43.00px;top:257.00px;width:19.00px;height:6.00px;background:#2eb91a"></div>
<div style="left:68.00px;top:240.00px;width:20.00px;height:29.00px;background:#0a120a;border-radius:1.5px"></div>
<div style="left:69.00px;top:241.00px;width:18.00px;height:4.00px;background:linear-gradient(#e4dc00,#f6f038 50%,#e8e000);border-radius:1px"></div>
<div style="left:69.00px;top:253.00px;width:18.00px;height:3.00px;background:linear-gradient(#e4dc00,#f6f038 50%,#e8e000);border-radius:1px"></div>
<div style="left:69.00px;top:264.00px;width:18.00px;height:4.00px;background:linear-gradient(#e4dc00,#f6f038 50%,#e8e000);border-radius:1px"></div>
<div style="left:69.00px;top:246.00px;width:18.00px;height:6.00px;background:#2eb91a"></div>
<div style="left:69.00px;top:257.00px;width:18.00px;height:6.00px;background:#2eb91a"></div>
<div style="left:93.00px;top:240.00px;width:21.00px;height:29.00px;background:#0a120a;border-radius:1.5px"></div>
<div style="left:94.00px;top:241.00px;width:19.00px;height:4.00px;background:linear-gradient(#e4dc00,#f6f038 50%,#e8e000);border-radius:1px"></div>
<div style="left:94.00px;top:253.00px;width:19.00px;height:3.00px;background:linear-gradient(#e4dc00,#f6f038 50%,#e8e000);border-radius:1px"></div>
<div style="left:94.00px;top:264.00px;width:19.00px;height:4.00px;background:linear-gradient(#e4dc00,#f6f038 50%,#e8e000);border-radius:1px"></div>
<div style="left:94.00px;top:246.00px;width:19.00px;height:6.00px;background:#8ef4fa"></div>
<div style="left:94.00px;top:257.00px;width:19.00px;height:6.00px;background:#8ef4fa"></div>
<div style="left:119.00px;top:240.00px;width:20.00px;height:29.00px;background:#0a120a;border-radius:1.5px"></div>
<div style="left:120.00px;top:241.00px;width:18.00px;height:4.00px;background:linear-gradient(#e4dc00,#f6f038 50%,#e8e000);border-radius:1px"></div>
<div style="left:120.00px;top:253.00px;width:18.00px;height:3.00px;background:linear-gradient(#e4dc00,#f6f038 50%,#e8e000);border-radius:1px"></div>
<div style="left:120.00px;top:264.00px;width:18.00px;height:4.00px;background:linear-gradient(#e4dc00,#f6f038 50%,#e8e000);border-radius:1px"></div>
<div style="left:120.00px;top:246.00px;width:18.00px;height:6.00px;background:#2eb91a"></div>
<div style="left:120.00px;top:257.00px;width:18.00px;height:6.00px;background:#2eb91a"></div>
<div style="left:145.00px;top:240.00px;width:20.00px;height:29.00px;background:#0a120a;border-radius:1.5px"></div>
<div style="left:146.00px;top:241.00px;width:18.00px;height:4.00px;background:linear-gradient(#e4dc00,#f6f038 50%,#e8e000);border-radius:1px"></div>
<div style="left:146.00px;top:253.00px;width:18.00px;height:3.00px;background:linear-gradient(#e4dc00,#f6f038 50%,#e8e000);border-radius:1px"></div>
<div style="left:146.00px;top:264.00px;width:18.00px;height:4.00px;background:linear-gradient(#e4dc00,#f6f038 50%,#e8e000);border-radius:1px"></div>
<div style="left:146.00px;top:246.00px;width:18.00px;height:6.00px;background:#2eb91a"></div>
<div style="left:146.00px;top:257.00px;width:18.00px;height:6.00px;background:#2eb91a"></div>
<div style="left:170.00px;top:240.00px;width:21.00px;height:29.00px;background:#0a120a;border-radius:1.5px"></div>
<div style="left:171.00px;top:241.00px;width:19.00px;height:4.00px;background:linear-gradient(#e4dc00,#f6f038 50%,#e8e000);border-radius:1px"></div>
<div style="left:171.00px;top:253.00px;width:19.00px;height:3.00px;background:linear-gradient(#e4dc00,#f6f038 50%,#e8e000);border-radius:1px"></div>
<div style="left:171.00px;top:264.00px;width:19.00px;height:4.00px;background:linear-gradient(#e4dc00,#f6f038 50%,#e8e000);border-radius:1px"></div>
<div style="left:171.00px;top:246.00px;width:19.00px;height:6.00px;background:#2eb91a"></div>
<div style="left:171.00px;top:257.00px;width:19.00px;height:6.00px;background:#2eb91a"></div>
<div style="left:196.00px;top:240.00px;width:20.00px;height:29.00px;background:#0a120a;border-radius:1.5px"></div>
<div style="left:197.00px;top:241.00px;width:18.00px;height:4.00px;background:linear-gradient(#e4dc00,#f6f038 50%,#e8e000);border-radius:1px"></div>
<div style="left:197.00px;top:253.00px;width:18.00px;height:3.00px;background:linear-gradient(#e4dc00,#f6f038 50%,#e8e000);border-radius:1px"></div>
<div style="left:197.00px;top:264.00px;width:18.00px;height:4.00px;background:linear-gradient(#e4dc00,#f6f038 50%,#e8e000);border-radius:1px"></div>
<div style="left:197.00px;top:246.00px;width:18.00px;height:6.00px;background:#2eb91a"></div>
<div style="left:197.00px;top:257.00px;width:18.00px;height:6.00px;background:#2eb91a"></div>
<div style="left:221.00px;top:240.00px;width:21.00px;height:29.00px;background:#0a120a;border-radius:1.5px"></div>
<div style="left:222.00px;top:241.00px;width:19.00px;height:4.00px;background:linear-gradient(#e4dc00,#f6f038 50%,#e8e000);border-radius:1px"></div>
<div style="left:222.00px;top:253.00px;width:19.00px;height:3.00px;background:linear-gradient(#e4dc00,#f6f038 50%,#e8e000);border-radius:1px"></div>
<div style="left:222.00px;top:264.00px;width:19.00px;height:4.00px;background:linear-gradient(#e4dc00,#f6f038 50%,#e8e000);border-radius:1px"></div>
<div style="left:222.00px;top:246.00px;width:19.00px;height:6.00px;background:#2eb91a"></div>
<div style="left:222.00px;top:257.00px;width:19.00px;height:6.00px;background:#2eb91a"></div>
<div style="left:247.00px;top:240.00px;width:20.00px;height:29.00px;background:#0a120a;border-radius:1.5px"></div>
<div style="left:248.00px;top:241.00px;width:18.00px;height:4.00px;background:linear-gradient(#e4dc00,#f6f038 50%,#e8e000);border-radius:1px"></div>
<div style="left:248.00px;top:253.00px;width:18.00px;height:3.00px;background:linear-gradient(#e4dc00,#f6f038 50%,#e8e000);border-radius:1px"></div>
<div style="left:248.00px;top:264.00px;width:18.00px;height:4.00px;background:linear-gradient(#e4dc00,#f6f038 50%,#e8e000);border-radius:1px"></div>
<div style="left:248.00px;top:246.00px;width:18.00px;height:6.00px;background:#2eb91a"></div>
<div style="left:248.00px;top:257.00px;width:18.00px;height:6.00px;background:#2eb91a"></div>
<div style="left:273.00px;top:240.00px;width:20.00px;height:29.00px;background:#0a120a;border-radius:1.5px"></div>
<div style="left:274.00px;top:241.00px;width:18.00px;height:4.00px;background:linear-gradient(#e4dc00,#f6f038 50%,#e8e000);border-radius:1px"></div>
<div style="left:274.00px;top:253.00px;width:18.00px;height:3.00px;background:linear-gradient(#e4dc00,#f6f038 50%,#e8e000);border-radius:1px"></div>
<div style="left:274.00px;top:264.00px;width:18.00px;height:4.00px;background:linear-gradient(#e4dc00,#f6f038 50%,#e8e000);border-radius:1px"></div>
<div style="left:274.00px;top:246.00px;width:18.00px;height:6.00px;background:#2eb91a"></div>
<div style="left:274.00px;top:257.00px;width:18.00px;height:6.00px;background:#2eb91a"></div>
<div style="left:298.00px;top:240.00px;width:21.00px;height:29.00px;background:#0a120a;border-radius:1.5px"></div>
<div style="left:299.00px;top:241.00px;width:19.00px;height:4.00px;background:linear-gradient(#e4dc00,#f6f038 50%,#e8e000);border-radius:1px"></div>
<div style="left:299.00px;top:253.00px;width:19.00px;height:3.00px;background:linear-gradient(#e4dc00,#f6f038 50%,#e8e000);border-radius:1px"></div>
<div style="left:299.00px;top:264.00px;width:19.00px;height:4.00px;background:linear-gradient(#e4dc00,#f6f038 50%,#e8e000);border-radius:1px"></div>
<div style="left:299.00px;top:246.00px;width:19.00px;height:6.00px;background:#2eb91a"></div>
<div style="left:299.00px;top:257.00px;width:19.00px;height:6.00px;background:#2eb91a"></div>
<div style="left:324.00px;top:240.00px;width:20.00px;height:29.00px;background:#0a120a;border-radius:1.5px"></div>
<div style="left:325.00px;top:241.00px;width:18.00px;height:4.00px;background:linear-gradient(#e4dc00,#f6f038 50%,#e8e000);border-radius:1px"></div>
<div style="left:325.00px;top:253.00px;width:18.00px;height:3.00px;background:linear-gradient(#e4dc00,#f6f038 50%,#e8e000);border-radius:1px"></div>
<div style="left:325.00px;top:264.00px;width:18.00px;height:4.00px;background:linear-gradient(#e4dc00,#f6f038 50%,#e8e000);border-radius:1px"></div>
<div style="left:325.00px;top:246.00px;width:18.00px;height:6.00px;background:#2eb91a"></div>
<div style="left:325.00px;top:257.00px;width:18.00px;height:6.00px;background:#2eb91a"></div>
<div style="left:349.00px;top:240.00px;width:21.00px;height:29.00px;background:#0a120a;border-radius:1.5px"></div>
<div style="left:350.00px;top:241.00px;width:19.00px;height:4.00px;background:linear-gradient(#e4dc00,#f6f038 50%,#e8e000);border-radius:1px"></div>
<div style="left:350.00px;top:253.00px;width:19.00px;height:3.00px;background:linear-gradient(#e4dc00,#f6f038 50%,#e8e000);border-radius:1px"></div>
<div style="left:350.00px;top:264.00px;width:19.00px;height:4.00px;background:linear-gradient(#e4dc00,#f6f038 50%,#e8e000);border-radius:1px"></div>
<div style="left:350.00px;top:246.00px;width:19.00px;height:6.00px;background:#2eb91a"></div>
<div style="left:350.00px;top:257.00px;width:19.00px;height:6.00px;background:#2eb91a"></div>
<div style="left:375.00px;top:240.00px;width:20.00px;height:29.00px;background:#0a120a;border-radius:1.5px"></div>
<div style="left:376.00px;top:241.00px;width:18.00px;height:4.00px;background:linear-gradient(#e4dc00,#f6f038 50%,#e8e000);border-radius:1px"></div>
<div style="left:376.00px;top:253.00px;width:18.00px;height:3.00px;background:linear-gradient(#e4dc00,#f6f038 50%,#e8e000);border-radius:1px"></div>
<div style="left:376.00px;top:264.00px;width:18.00px;height:4.00px;background:linear-gradient(#e4dc00,#f6f038 50%,#e8e000);border-radius:1px"></div>
<div style="left:376.00px;top:246.00px;width:18.00px;height:6.00px;background:#2eb91a"></div>
<div style="left:376.00px;top:257.00px;width:18.00px;height:6.00px;background:#2eb91a"></div>
<div style="left:401.00px;top:240.00px;width:20.00px;height:29.00px;background:#0a120a;border-radius:1.5px"></div>
<div style="left:402.00px;top:241.00px;width:18.00px;height:4.00px;background:linear-gradient(#e4dc00,#f6f038 50%,#e8e000);border-radius:1px"></div>
<div style="left:402.00px;top:253.00px;width:18.00px;height:3.00px;background:linear-gradient(#e4dc00,#f6f038 50%,#e8e000);border-radius:1px"></div>
<div style="left:402.00px;top:264.00px;width:18.00px;height:4.00px;background:linear-gradient(#e4dc00,#f6f038 50%,#e8e000);border-radius:1px"></div>
<div style="left:402.00px;top:246.00px;width:18.00px;height:6.00px;background:#2eb91a"></div>
<div style="left:402.00px;top:257.00px;width:18.00px;height:6.00px;background:#2eb91a"></div>
<div style="left:426.00px;top:240.00px;width:21.00px;height:29.00px;background:#0a120a;border-radius:1.5px"></div>
<div style="left:427.00px;top:241.00px;width:19.00px;height:4.00px;background:linear-gradient(#e4dc00,#f6f038 50%,#e8e000);border-radius:1px"></div>
<div style="left:427.00px;top:253.00px;width:19.00px;height:3.00px;background:linear-gradient(#e4dc00,#f6f038 50%,#e8e000);border-radius:1px"></div>
<div style="left:427.00px;top:264.00px;width:19.00px;height:4.00px;background:linear-gradient(#e4dc00,#f6f038 50%,#e8e000);border-radius:1px"></div>
<div style="left:427.00px;top:246.00px;width:19.00px;height:6.00px;background:#2eb91a"></div>
<div style="left:427.00px;top:257.00px;width:19.00px;height:6.00px;background:#2eb91a"></div>
<div style="left:452.00px;top:240.00px;width:20.00px;height:29.00px;background:#0a120a;border-radius:1.5px"></div>
<div style="left:453.00px;top:241.00px;width:18.00px;height:4.00px;background:linear-gradient(#e4dc00,#f6f038 50%,#e8e000);border-radius:1px"></div>
<div style="left:453.00px;top:253.00px;width:18.00px;height:3.00px;background:linear-gradient(#e4dc00,#f6f038 50%,#e8e000);border-radius:1px"></div>
<div style="left:453.00px;top:264.00px;width:18.00px;height:4.00px;background:linear-gradient(#e4dc00,#f6f038 50%,#e8e000);border-radius:1px"></div>
<div style="left:453.00px;top:246.00px;width:18.00px;height:6.00px;background:#2eb91a"></div>
<div style="left:453.00px;top:257.00px;width:18.00px;height:6.00px;background:#2eb91a"></div>
<div style="left:477.00px;top:240.00px;width:21.00px;height:29.00px;background:#0a120a;border-radius:1.5px"></div>
<div style="left:478.00px;top:241.00px;width:19.00px;height:4.00px;background:linear-gradient(#e4dc00,#f6f038 50%,#e8e000);border-radius:1px"></div>
<div style="left:478.00px;top:253.00px;width:19.00px;height:3.00px;background:linear-gradient(#e4dc00,#f6f038 50%,#e8e000);border-radius:1px"></div>
<div style="left:478.00px;top:264.00px;width:19.00px;height:4.00px;background:linear-gradient(#e4dc00,#f6f038 50%,#e8e000);border-radius:1px"></div>
<div style="left:478.00px;top:246.00px;width:19.00px;height:6.00px;background:#f77f0a"></div>
<div style="left:478.00px;top:257.00px;width:19.00px;height:6.00px;background:#f77f0a"></div>
<div style="left:503.00px;top:240.00px;width:20.00px;height:29.00px;background:#0a120a;border-radius:1.5px"></div>
<div style="left:504.00px;top:241.00px;width:18.00px;height:4.00px;background:linear-gradient(#e4dc00,#f6f038 50%,#e8e000);border-radius:1px"></div>
<div style="left:504.00px;top:253.00px;width:18.00px;height:3.00px;background:linear-gradient(#e4dc00,#f6f038 50%,#e8e000);border-radius:1px"></div>
<div style="left:504.00px;top:264.00px;width:18.00px;height:4.00px;background:linear-gradient(#e4dc00,#f6f038 50%,#e8e000);border-radius:1px"></div>
<div style="left:504.00px;top:246.00px;width:18.00px;height:6.00px;background:#2eb91a"></div>
<div style="left:504.00px;top:257.00px;width:18.00px;height:6.00px;background:#2eb91a"></div>
<div style="left:529.00px;top:240.00px;width:20.00px;height:29.00px;background:#0a120a;border-radius:1.5px"></div>
<div style="left:530.00px;top:241.00px;width:18.00px;height:4.00px;background:linear-gradient(#e4dc00,#f6f038 50%,#e8e000);border-radius:1px"></div>
<div style="left:530.00px;top:253.00px;width:18.00px;height:3.00px;background:linear-gradient(#e4dc00,#f6f038 50%,#e8e000);border-radius:1px"></div>
<div style="left:530.00px;top:264.00px;width:18.00px;height:4.00px;background:linear-gradient(#e4dc00,#f6f038 50%,#e8e000);border-radius:1px"></div>
<div style="left:530.00px;top:246.00px;width:18.00px;height:6.00px;background:#2eb91a"></div>
<div style="left:530.00px;top:257.00px;width:18.00px;height:6.00px;background:#2eb91a"></div>
<div style="left:42.00px;top:275.00px;width:21.00px;height:29.00px;background:#0a120a;border-radius:1.5px"></div>
<div style="left:43.00px;top:276.00px;width:19.00px;height:4.00px;background:linear-gradient(#e4dc00,#f6f038 50%,#e8e000);border-radius:1px"></div>
<div style="left:43.00px;top:288.00px;width:19.00px;height:3.00px;background:linear-gradient(#e4dc00,#f6f038 50%,#e8e000);border-radius:1px"></div>
<div style="left:43.00px;top:299.00px;width:19.00px;height:4.00px;background:linear-gradient(#e4dc00,#f6f038 50%,#e8e000);border-radius:1px"></div>
<div style="left:43.00px;top:281.00px;width:19.00px;height:6.00px;background:#2eb91a"></div>
<div style="left:43.00px;top:292.00px;width:19.00px;height:6.00px;background:#2eb91a"></div>
<div style="left:68.00px;top:275.00px;width:20.00px;height:29.00px;background:#0a120a;border-radius:1.5px"></div>
<div style="left:69.00px;top:276.00px;width:18.00px;height:4.00px;background:linear-gradient(#e4dc00,#f6f038 50%,#e8e000);border-radius:1px"></div>
<div style="left:69.00px;top:288.00px;width:18.00px;height:3.00px;background:linear-gradient(#e4dc00,#f6f038 50%,#e8e000);border-radius:1px"></div>
<div style="left:69.00px;top:299.00px;width:18.00px;height:4.00px;background:linear-gradient(#e4dc00,#f6f038 50%,#e8e000);border-radius:1px"></div>
<div style="left:69.00px;top:281.00px;width:18.00px;height:6.00px;background:#2eb91a"></div>
<div style="left:69.00px;top:292.00px;width:18.00px;height:6.00px;background:#2eb91a"></div>
<div style="left:93.00px;top:275.00px;width:21.00px;height:29.00px;background:#0a120a;border-radius:1.5px"></div>
<div style="left:94.00px;top:276.00px;width:19.00px;height:4.00px;background:linear-gradient(#e4dc00,#f6f038 50%,#e8e000);border-radius:1px"></div>
<div style="left:94.00px;top:288.00px;width:19.00px;height:3.00px;background:linear-gradient(#e4dc00,#f6f038 50%,#e8e000);border-radius:1px"></div>
<div style="left:94.00px;top:299.00px;width:19.00px;height:4.00px;background:linear-gradient(#e4dc00,#f6f038 50%,#e8e000);border-radius:1px"></div>
<div style="left:94.00px;top:281.00px;width:19.00px;height:6.00px;background:#2eb91a"></div>
<div style="left:94.00px;top:292.00px;width:19.00px;height:6.00px;background:#2eb91a"></div>
<div style="left:119.00px;top:275.00px;width:20.00px;height:29.00px;background:#0a120a;border-radius:1.5px"></div>
<div style="left:120.00px;top:276.00px;width:18.00px;height:4.00px;background:linear-gradient(#e4dc00,#f6f038 50%,#e8e000);border-radius:1px"></div>
<div style="left:120.00px;top:288.00px;width:18.00px;height:3.00px;background:linear-gradient(#e4dc00,#f6f038 50%,#e8e000);border-radius:1px"></div>
<div style="left:120.00px;top:299.00px;width:18.00px;height:4.00px;background:linear-gradient(#e4dc00,#f6f038 50%,#e8e000);border-radius:1px"></div>
<div style="left:120.00px;top:281.00px;width:18.00px;height:6.00px;background:#2eb91a"></div>
<div style="left:120.00px;top:292.00px;width:18.00px;height:6.00px;background:#2eb91a"></div>
<div style="left:145.00px;top:275.00px;width:20.00px;height:29.00px;background:#0a120a;border-radius:1.5px"></div>
<div style="left:146.00px;top:276.00px;width:18.00px;height:4.00px;background:linear-gradient(#e4dc00,#f6f038 50%,#e8e000);border-radius:1px"></div>
<div style="left:146.00px;top:288.00px;width:18.00px;height:3.00px;background:linear-gradient(#e4dc00,#f6f038 50%,#e8e000);border-radius:1px"></div>
<div style="left:146.00px;top:299.00px;width:18.00px;height:4.00px;background:linear-gradient(#e4dc00,#f6f038 50%,#e8e000);border-radius:1px"></div>
<div style="left:146.00px;top:281.00px;width:18.00px;height:6.00px;background:#2eb91a"></div>
<div style="left:146.00px;top:292.00px;width:18.00px;height:6.00px;background:#2eb91a"></div>
<div style="left:170.00px;top:275.00px;width:21.00px;height:29.00px;background:#0a120a;border-radius:1.5px"></div>
<div style="left:171.00px;top:276.00px;width:19.00px;height:4.00px;background:linear-gradient(#e4dc00,#f6f038 50%,#e8e000);border-radius:1px"></div>
<div style="left:171.00px;top:288.00px;width:19.00px;height:3.00px;background:linear-gradient(#e4dc00,#f6f038 50%,#e8e000);border-radius:1px"></div>
<div style="left:171.00px;top:299.00px;width:19.00px;height:4.00px;background:linear-gradient(#e4dc00,#f6f038 50%,#e8e000);border-radius:1px"></div>
<div style="left:171.00px;top:281.00px;width:19.00px;height:6.00px;background:#2eb91a"></div>
<div style="left:171.00px;top:292.00px;width:19.00px;height:6.00px;background:#2eb91a"></div>
<div style="left:196.00px;top:275.00px;width:20.00px;height:29.00px;background:#0a120a;border-radius:1.5px"></div>
<div style="left:197.00px;top:276.00px;width:18.00px;height:4.00px;background:linear-gradient(#e4dc00,#f6f038 50%,#e8e000);border-radius:1px"></div>
<div style="left:197.00px;top:288.00px;width:18.00px;height:3.00px;background:linear-gradient(#e4dc00,#f6f038 50%,#e8e000);border-radius:1px"></div>
<div style="left:197.00px;top:299.00px;width:18.00px;height:4.00px;background:linear-gradient(#e4dc00,#f6f038 50%,#e8e000);border-radius:1px"></div>
<div style="left:197.00px;top:281.00px;width:18.00px;height:6.00px;background:#2eb91a"></div>
<div style="left:197.00px;top:292.00px;width:18.00px;height:6.00px;background:#2eb91a"></div>
<div style="left:221.00px;top:275.00px;width:21.00px;height:29.00px;background:#0a120a;border-radius:1.5px"></div>
<div style="left:222.00px;top:276.00px;width:19.00px;height:4.00px;background:linear-gradient(#e4dc00,#f6f038 50%,#e8e000);border-radius:1px"></div>
<div style="left:222.00px;top:288.00px;width:19.00px;height:3.00px;background:linear-gradient(#e4dc00,#f6f038 50%,#e8e000);border-radius:1px"></div>
<div style="left:222.00px;top:299.00px;width:19.00px;height:4.00px;background:linear-gradient(#e4dc00,#f6f038 50%,#e8e000);border-radius:1px"></div>
<div style="left:222.00px;top:281.00px;width:19.00px;height:6.00px;background:#f77f0a"></div>
<div style="left:222.00px;top:292.00px;width:19.00px;height:6.00px;background:#2eb91a"></div>
<div style="left:247.00px;top:275.00px;width:20.00px;height:29.00px;background:#0a120a;border-radius:1.5px"></div>
<div style="left:248.00px;top:276.00px;width:18.00px;height:4.00px;background:linear-gradient(#e4dc00,#f6f038 50%,#e8e000);border-radius:1px"></div>
<div style="left:248.00px;top:288.00px;width:18.00px;height:3.00px;background:linear-gradient(#e4dc00,#f6f038 50%,#e8e000);border-radius:1px"></div>
<div style="left:248.00px;top:299.00px;width:18.00px;height:4.00px;background:linear-gradient(#e4dc00,#f6f038 50%,#e8e000);border-radius:1px"></div>
<div style="left:248.00px;top:281.00px;width:18.00px;height:6.00px;background:#2eb91a"></div>
<div style="left:248.00px;top:292.00px;width:18.00px;height:6.00px;background:#2eb91a"></div>
<div style="left:273.00px;top:275.00px;width:20.00px;height:29.00px;background:#0a120a;border-radius:1.5px"></div>
<div style="left:274.00px;top:276.00px;width:18.00px;height:4.00px;background:linear-gradient(#e4dc00,#f6f038 50%,#e8e000);border-radius:1px"></div>
<div style="left:274.00px;top:288.00px;width:18.00px;height:3.00px;background:linear-gradient(#e4dc00,#f6f038 50%,#e8e000);border-radius:1px"></div>
<div style="left:274.00px;top:299.00px;width:18.00px;height:4.00px;background:linear-gradient(#e4dc00,#f6f038 50%,#e8e000);border-radius:1px"></div>
<div style="left:274.00px;top:281.00px;width:18.00px;height:6.00px;background:#2eb91a"></div>
<div style="left:274.00px;top:292.00px;width:18.00px;height:6.00px;background:#2eb91a"></div>
<div style="left:298.00px;top:275.00px;width:21.00px;height:29.00px;background:#0a120a;border-radius:1.5px"></div>
<div style="left:299.00px;top:276.00px;width:19.00px;height:4.00px;background:linear-gradient(#e4dc00,#f6f038 50%,#e8e000);border-radius:1px"></div>
<div style="left:299.00px;top:288.00px;width:19.00px;height:3.00px;background:linear-gradient(#e4dc00,#f6f038 50%,#e8e000);border-radius:1px"></div>
<div style="left:299.00px;top:299.00px;width:19.00px;height:4.00px;background:linear-gradient(#e4dc00,#f6f038 50%,#e8e000);border-radius:1px"></div>
<div style="left:299.00px;top:281.00px;width:19.00px;height:6.00px;background:#2eb91a"></div>
<div style="left:299.00px;top:292.00px;width:19.00px;height:6.00px;background:#2eb91a"></div>
<div style="left:324.00px;top:275.00px;width:20.00px;height:29.00px;background:#0a120a;border-radius:1.5px"></div>
<div style="left:325.00px;top:276.00px;width:18.00px;height:4.00px;background:linear-gradient(#e4dc00,#f6f038 50%,#e8e000);border-radius:1px"></div>
<div style="left:325.00px;top:288.00px;width:18.00px;height:3.00px;background:linear-gradient(#e4dc00,#f6f038 50%,#e8e000);border-radius:1px"></div>
<div style="left:325.00px;top:299.00px;width:18.00px;height:4.00px;background:linear-gradient(#e4dc00,#f6f038 50%,#e8e000);border-radius:1px"></div>
<div style="left:325.00px;top:281.00px;width:18.00px;height:6.00px;background:#2eb91a"></div>
<div style="left:325.00px;top:292.00px;width:18.00px;height:6.00px;background:#2eb91a"></div>
<div style="left:349.00px;top:275.00px;width:21.00px;height:29.00px;background:#0a120a;border-radius:1.5px"></div>
<div style="left:350.00px;top:276.00px;width:19.00px;height:4.00px;background:linear-gradient(#e4dc00,#f6f038 50%,#e8e000);border-radius:1px"></div>
<div style="left:350.00px;top:288.00px;width:19.00px;height:3.00px;background:linear-gradient(#e4dc00,#f6f038 50%,#e8e000);border-radius:1px"></div>
<div style="left:350.00px;top:299.00px;width:19.00px;height:4.00px;background:linear-gradient(#e4dc00,#f6f038 50%,#e8e000);border-radius:1px"></div>
<div style="left:350.00px;top:281.00px;width:19.00px;height:6.00px;background:#2eb91a"></div>
<div style="left:350.00px;top:292.00px;width:19.00px;height:6.00px;background:#2eb91a"></div>
<div style="left:375.00px;top:275.00px;width:20.00px;height:29.00px;background:#0a120a;border-radius:1.5px"></div>
<div style="left:376.00px;top:276.00px;width:18.00px;height:4.00px;background:linear-gradient(#e4dc00,#f6f038 50%,#e8e000);border-radius:1px"></div>
<div style="left:376.00px;top:288.00px;width:18.00px;height:3.00px;background:linear-gradient(#e4dc00,#f6f038 50%,#e8e000);border-radius:1px"></div>
<div style="left:376.00px;top:299.00px;width:18.00px;height:4.00px;background:linear-gradient(#e4dc00,#f6f038 50%,#e8e000);border-radius:1px"></div>
<div style="left:376.00px;top:281.00px;width:18.00px;height:6.00px;background:#2eb91a"></div>
<div style="left:376.00px;top:292.00px;width:18.00px;height:6.00px;background:#2eb91a"></div>
<div style="left:401.00px;top:275.00px;width:20.00px;height:29.00px;background:#0a120a;border-radius:1.5px"></div>
<div style="left:402.00px;top:276.00px;width:18.00px;height:4.00px;background:linear-gradient(#e4dc00,#f6f038 50%,#e8e000);border-radius:1px"></div>
<div style="left:402.00px;top:288.00px;width:18.00px;height:3.00px;background:linear-gradient(#e4dc00,#f6f038 50%,#e8e000);border-radius:1px"></div>
<div style="left:402.00px;top:299.00px;width:18.00px;height:4.00px;background:linear-gradient(#e4dc00,#f6f038 50%,#e8e000);border-radius:1px"></div>
<div style="left:402.00px;top:281.00px;width:18.00px;height:6.00px;background:#2eb91a"></div>
<div style="left:402.00px;top:292.00px;width:18.00px;height:6.00px;background:#2eb91a"></div>
<div style="left:426.00px;top:275.00px;width:21.00px;height:29.00px;background:#0a120a;border-radius:1.5px"></div>
<div style="left:427.00px;top:276.00px;width:19.00px;height:4.00px;background:linear-gradient(#e4dc00,#f6f038 50%,#e8e000);border-radius:1px"></div>
<div style="left:427.00px;top:288.00px;width:19.00px;height:3.00px;background:linear-gradient(#e4dc00,#f6f038 50%,#e8e000);border-radius:1px"></div>
<div style="left:427.00px;top:299.00px;width:19.00px;height:4.00px;background:linear-gradient(#e4dc00,#f6f038 50%,#e8e000);border-radius:1px"></div>
<div style="left:427.00px;top:281.00px;width:19.00px;height:6.00px;background:#2eb91a"></div>
<div style="left:427.00px;top:292.00px;width:19.00px;height:6.00px;background:#2eb91a"></div>
<div style="left:452.00px;top:275.00px;width:20.00px;height:29.00px;background:#0a120a;border-radius:1.5px"></div>
<div style="left:453.00px;top:276.00px;width:18.00px;height:4.00px;background:linear-gradient(#e4dc00,#f6f038 50%,#e8e000);border-radius:1px"></div>
<div style="left:453.00px;top:288.00px;width:18.00px;height:3.00px;background:linear-gradient(#e4dc00,#f6f038 50%,#e8e000);border-radius:1px"></div>
<div style="left:453.00px;top:299.00px;width:18.00px;height:4.00px;background:linear-gradient(#e4dc00,#f6f038 50%,#e8e000);border-radius:1px"></div>
<div style="left:453.00px;top:281.00px;width:18.00px;height:6.00px;background:#2eb91a"></div>
<div style="left:453.00px;top:292.00px;width:18.00px;height:6.00px;background:#2eb91a"></div>
<div style="left:477.00px;top:275.00px;width:21.00px;height:29.00px;background:#0a120a;border-radius:1.5px"></div>
<div style="left:478.00px;top:276.00px;width:19.00px;height:4.00px;background:linear-gradient(#e4dc00,#f6f038 50%,#e8e000);border-radius:1px"></div>
<div style="left:478.00px;top:288.00px;width:19.00px;height:3.00px;background:linear-gradient(#e4dc00,#f6f038 50%,#e8e000);border-radius:1px"></div>
<div style="left:478.00px;top:299.00px;width:19.00px;height:4.00px;background:linear-gradient(#e4dc00,#f6f038 50%,#e8e000);border-radius:1px"></div>
<div style="left:478.00px;top:281.00px;width:19.00px;height:6.00px;background:#2eb91a"></div>
<div style="left:478.00px;top:292.00px;width:19.00px;height:6.00px;background:#2eb91a"></div>
<div style="left:503.00px;top:275.00px;width:20.00px;height:29.00px;background:#0a120a;border-radius:1.5px"></div>
<div style="left:504.00px;top:276.00px;width:18.00px;height:4.00px;background:linear-gradient(#e4dc00,#f6f038 50%,#e8e000);border-radius:1px"></div>
<div style="left:504.00px;top:288.00px;width:18.00px;height:3.00px;background:linear-gradient(#e4dc00,#f6f038 50%,#e8e000);border-radius:1px"></div>
<div style="left:504.00px;top:299.00px;width:18.00px;height:4.00px;background:linear-gradient(#e4dc00,#f6f038 50%,#e8e000);border-radius:1px"></div>
<div style="left:504.00px;top:281.00px;width:18.00px;height:6.00px;background:#2eb91a"></div>
<div style="left:504.00px;top:292.00px;width:18.00px;height:6.00px;background:#2eb91a"></div>
<div style="left:529.00px;top:275.00px;width:20.00px;height:29.00px;background:#0a120a;border-radius:1.5px"></div>
<div style="left:530.00px;top:276.00px;width:18.00px;height:4.00px;background:linear-gradient(#e4dc00,#f6f038 50%,#e8e000);border-radius:1px"></div>
<div style="left:530.00px;top:288.00px;width:18.00px;height:3.00px;background:linear-gradient(#e4dc00,#f6f038 50%,#e8e000);border-radius:1px"></div>
<div style="left:530.00px;top:299.00px;width:18.00px;height:4.00px;background:linear-gradient(#e4dc00,#f6f038 50%,#e8e000);border-radius:1px"></div>
<div style="left:530.00px;top:281.00px;width:18.00px;height:6.00px;background:#2eb91a"></div>
<div style="left:530.00px;top:292.00px;width:18.00px;height:6.00px;background:#2eb91a"></div>
<div style="left:16.80px;top:69.00px;width:20.60px;height:166.00px;background:#0a120a;border-radius:1px"></div>
<div style="left:18.00px;top:70.00px;width:18.00px;height:3.60px;background:linear-gradient(#e4dc00,#f6f038 50%,#e8e000);border-radius:0.8px"></div>
<div style="left:16.80px;top:74.60px;width:20.60px;height:6.20px;background:#f77f0a"></div>
<div style="left:18.00px;top:81.00px;width:18.00px;height:3.60px;background:linear-gradient(#e4dc00,#f6f038 50%,#e8e000);border-radius:0.8px"></div>
<div style="left:16.80px;top:85.60px;width:20.60px;height:6.20px;background:#f77f0a"></div>
<div style="left:18.00px;top:93.00px;width:18.00px;height:3.60px;background:linear-gradient(#e4dc00,#f6f038 50%,#e8e000);border-radius:0.8px"></div>
<div style="left:16.80px;top:97.60px;width:20.60px;height:6.20px;background:#f77f0a"></div>
<div style="left:18.00px;top:104.00px;width:18.00px;height:3.60px;background:linear-gradient(#e4dc00,#f6f038 50%,#e8e000);border-radius:0.8px"></div>
<div style="left:16.80px;top:108.60px;width:20.60px;height:6.20px;background:#f77f0a"></div>
<div style="left:18.00px;top:116.00px;width:18.00px;height:3.60px;background:linear-gradient(#e4dc00,#f6f038 50%,#e8e000);border-radius:0.8px"></div>
<div style="left:16.80px;top:120.60px;width:20.60px;height:6.20px;background:#f77f0a"></div>
<div style="left:18.00px;top:127.00px;width:18.00px;height:3.60px;background:linear-gradient(#e4dc00,#f6f038 50%,#e8e000);border-radius:0.8px"></div>
<div style="left:16.80px;top:131.60px;width:20.60px;height:6.20px;background:#f77f0a"></div>
<div style="left:18.00px;top:139.00px;width:18.00px;height:3.60px;background:linear-gradient(#e4dc00,#f6f038 50%,#e8e000);border-radius:0.8px"></div>
<div style="left:16.80px;top:143.60px;width:20.60px;height:6.20px;background:#f77f0a"></div>
<div style="left:18.00px;top:150.00px;width:18.00px;height:3.60px;background:linear-gradient(#e4dc00,#f6f038 50%,#e8e000);border-radius:0.8px"></div>
<div style="left:16.80px;top:154.60px;width:20.60px;height:6.20px;background:#f77f0a"></div>
<div style="left:18.00px;top:161.00px;width:18.00px;height:3.60px;background:linear-gradient(#e4dc00,#f6f038 50%,#e8e000);border-radius:0.8px"></div>
<div style="left:16.80px;top:165.60px;width:20.60px;height:6.20px;background:#f77f0a"></div>
<div style="left:18.00px;top:173.00px;width:18.00px;height:3.60px;background:linear-gradient(#e4dc00,#f6f038 50%,#e8e000);border-radius:0.8px"></div>
<div style="left:16.80px;top:177.60px;width:20.60px;height:6.20px;background:#f77f0a"></div>
<div style="left:18.00px;top:184.00px;width:18.00px;height:3.60px;background:linear-gradient(#e4dc00,#f6f038 50%,#e8e000);border-radius:0.8px"></div>
<div style="left:16.80px;top:188.60px;width:20.60px;height:6.20px;background:#f77f0a"></div>
<div style="left:18.00px;top:196.00px;width:18.00px;height:3.60px;background:linear-gradient(#e4dc00,#f6f038 50%,#e8e000);border-radius:0.8px"></div>
<div style="left:16.80px;top:200.60px;width:20.60px;height:6.20px;background:#f77f0a"></div>
<div style="left:18.00px;top:207.00px;width:18.00px;height:3.60px;background:linear-gradient(#e4dc00,#f6f038 50%,#e8e000);border-radius:0.8px"></div>
<div style="left:16.80px;top:211.60px;width:20.60px;height:6.20px;background:#f77f0a"></div>
<div style="left:18.00px;top:219.00px;width:18.00px;height:3.60px;background:linear-gradient(#e4dc00,#f6f038 50%,#e8e000);border-radius:0.8px"></div>
<div style="left:16.80px;top:223.60px;width:20.60px;height:6.20px;background:#f77f0a"></div>
<div style="left:18.00px;top:230.00px;width:18.00px;height:3.60px;background:linear-gradient(#e4dc00,#f6f038 50%,#e8e000);border-radius:0.8px"></div>
<div style="left:16.80px;top:240.00px;width:20.60px;height:63.00px;background:#0a120a;border-radius:1px"></div>
<div style="left:18.00px;top:241.00px;width:18.00px;height:3.60px;background:linear-gradient(#e4dc00,#f6f038 50%,#e8e000);border-radius:0.8px"></div>
<div style="left:16.80px;top:245.60px;width:20.60px;height:6.20px;background:#8ef4fa"></div>
<div style="left:18.00px;top:252.00px;width:18.00px;height:3.60px;background:linear-gradient(#e4dc00,#f6f038 50%,#e8e000);border-radius:0.8px"></div>
<div style="left:16.80px;top:256.60px;width:20.60px;height:6.20px;background:#8ef4fa"></div>
<div style="left:18.00px;top:264.00px;width:18.00px;height:3.60px;background:linear-gradient(#e4dc00,#f6f038 50%,#e8e000);border-radius:0.8px"></div>
<div style="left:16.80px;top:268.60px;width:20.60px;height:6.20px;background:#8ef4fa"></div>
<div style="left:18.00px;top:275.00px;width:18.00px;height:3.60px;background:linear-gradient(#e4dc00,#f6f038 50%,#e8e000);border-radius:0.8px"></div>
<div style="left:16.80px;top:279.60px;width:20.60px;height:6.20px;background:#8ef4fa"></div>
<div style="left:18.00px;top:287.00px;width:18.00px;height:3.60px;background:linear-gradient(#e4dc00,#f6f038 50%,#e8e000);border-radius:0.8px"></div>
<div style="left:16.80px;top:291.60px;width:20.60px;height:6.20px;background:#8ef4fa"></div>
<div style="left:18.00px;top:298.00px;width:18.00px;height:3.60px;background:linear-gradient(#e4dc00,#f6f038 50%,#e8e000);border-radius:0.8px"></div>
</div>
<div style="left:424.3px;top:81.8px;width:18.2px;height:18.4px;background:#fff"></div>
<svg style="left:420px;top:80px" width="26" height="24"><path d="M4.5 20.2H22.5V2.5" stroke="#202020" stroke-width="0.9" fill="none"/><path d="M13.4 6L14.4 11L19.5 12L14.4 13L13.4 18L12.4 13L7.3 12L12.4 11Z" fill="#101010"/><path d="M12.4 3L14.4 3L13.4 4.6Z" fill="#404040"/></svg>
<div style="left:785.6px;top:64px;width:9px;height:300px;background:#f7f7f4"></div>
<div style="left:785.6px;top:64px;width:9px;height:9.3px;background:#f0efe8"></div>
<div style="left:786px;top:73.5px;width:8.5px;height:10.5px;background:linear-gradient(90deg,#dbe3f9,#c3d0f5);border-radius:1px"></div>
<svg style="left:787.5px;top:77px" width="6" height="4"><path d="M0.8 3.2L3 1L5.2 3.2" stroke="#4a64b0" stroke-width="1.2" fill="none"/></svg>
<div style="left:786px;top:112px;width:8.5px;height:104.4px;background:linear-gradient(90deg,#c9d6f8,#b8c8f4);border-radius:1px"></div>
<div style="left:786px;top:354px;width:8.5px;height:9.5px;background:linear-gradient(90deg,#dbe3f9,#c3d0f5);border-radius:1px"></div>
<svg style="left:787.5px;top:357px" width="6" height="4"><path d="M0.8 0.8L3 3L5.2 0.8" stroke="#4a64b0" stroke-width="1.2" fill="none"/></svg>
<div style="left:231px;top:363.6px;width:564px;height:9.2px;background:#f7f7f4"></div>
<div style="left:231px;top:364px;width:8.5px;height:8.5px;background:linear-gradient(#dbe3f9,#c3d0f5);border-radius:1px"></div>
<svg style="left:233px;top:366px" width="4" height="6"><path d="M3.2 0.8L1 3L3.2 5.2" stroke="#4a64b0" stroke-width="1.2" fill="none"/></svg>
<div style="left:332.7px;top:364px;width:261px;height:8.5px;background:linear-gradient(#c9d6f8,#b8c8f4);border-radius:1px"></div>
<div style="left:777px;top:364px;width:8.5px;height:8.5px;background:linear-gradient(#dbe3f9,#c3d0f5);border-radius:1px"></div>
<svg style="left:779.5px;top:366px" width="4" height="6"><path d="M0.8 0.8L3 3L0.8 5.2" stroke="#4a64b0" stroke-width="1.2" fill="none"/></svg>
<div style="left:146px;top:376px;width:649px;height:98px;background:#ECE9D8;border:1px solid #bdb9a8"></div>
<div style="left:147px;top:377px;width:647px;height:14.5px;background:#ECE9D8;border-bottom:1px solid #c8c4b4"></div>
<div style="left:151px;top:380.5px;width:7px;height:7px;background:#fff;border:1px solid #8aa4c8;border-top:2px solid #a8c4f0"></div>
<span class="t" style="left:159px;top:380.28px;font-size:7px;transform:scaleX(0.878);">Propriétés</span>
<div style="left:189.5px;top:379px;width:1px;height:11px;background:#dedacb"></div>
<div style="left:193px;top:380px;width:8.5px;height:8px;background:#8ec8d8;border:1px solid #404040"></div>
<span class="t" style="left:194px;top:382px;font-size:5px;font-weight:bold;color:#202020">PF</span>
<span class="t" style="left:203px;top:380.28px;font-size:7px;transform:scaleX(0.884);">Recherche plateformes</span>
<div style="left:269.6px;top:379px;width:1px;height:11px;background:#dedacb"></div>
<div style="left:272px;top:380px;width:8.5px;height:8px;background:#c8c4b8;border:1px solid #404040"></div>
<span class="t" style="left:272.5px;top:382.3px;font-size:4.8px;font-weight:bold;color:#202020;letter-spacing:-0.3px">Dis</span>
<span class="t" style="left:283px;top:380.28px;font-size:7px;transform:scaleX(0.857);">Recherche dispositifs</span>
<div style="left:341.5px;top:379px;width:1px;height:11px;background:#dedacb"></div>
<svg style="left:344.5px;top:380px" width="9" height="9"><ellipse cx="4" cy="5" rx="3.8" ry="2" transform="rotate(-25 4 5)" fill="#30b040"/><path d="M5.5 5.5L8 8M8 5.5L5.5 8" stroke="#101010" stroke-width="1"/></svg>
<span class="t" style="left:356px;top:380.28px;font-size:7px;transform:scaleX(0.872);">Recherche protocoles</span>
<div style="left:418px;top:377px;width:71px;height:14.5px;background:#f7f6f0;border-right:1px solid #c0bcac;border-radius:0 3px 0 0"></div>
<div style="left:421px;top:380.5px;width:7px;height:7px;background:#fff;border:1px solid #8aa4c8;border-top:2px solid #a8c4f0"></div>
<span class="t" style="left:431px;top:380.28px;font-size:7px;transform:scaleX(0.865);">Vue d'ensemble</span>
<svg style="left:479px;top:381px" width="7" height="7"><path d="M1 1L6 6M6 1L1 6" stroke="#b8b4a8" stroke-width="1"/></svg>
<div style="left:776px;top:380px;width:6px;height:1.3px;background:#c4c0b0"></div>
<div style="left:787px;top:379.5px;width:6px;height:5.5px;background:#fff;border:1px solid #8c8a80;border-top-width:1.5px"></div>
<div style="left:148px;top:392px;width:121px;height:81px;background:#fff"></div>
<div style="left:171px;top:405.4px;width:70.5px;height:65.5px;background:#050a08"></div>
<div style="left:172px;top:408.5px;width:68px;height:1px;background:repeating-linear-gradient(90deg,#5a7a70 0 1.5px,transparent 1.5px 3.2px)"></div>
<div style="left:172px;top:418px;width:68px;height:1px;background:repeating-linear-gradient(90deg,#2a8a6a 0 1.5px,transparent 1.5px 3.2px)"></div>
<div style="left:172px;top:428.8px;width:68px;height:1px;background:repeating-linear-gradient(90deg,#4a8a60 0 1.5px,transparent 1.5px 3.2px)"></div>
<div style="left:172px;top:439.5px;width:68px;height:1px;background:repeating-linear-gradient(90deg,#7a7a50 0 1.5px,transparent 1.5px 3.2px)"></div>
<div style="left:172px;top:450px;width:68px;height:1px;background:repeating-linear-gradient(90deg,#6a8a40 0 1.5px,transparent 1.5px 3.2px)"></div>
<div style="left:172px;top:460px;width:68px;height:1px;background:repeating-linear-gradient(90deg,#30a040 0 1.5px,transparent 1.5px 3.2px)"></div>
<div style="left:222px;top:406px;width:1px;height:64px;background:#2a6a8a"></div>
<div style="left:233px;top:406px;width:1px;height:64px;background:#2a6a8a"></div>
<div style="left:169.7px;top:401px;width:58.6px;height:31.4px;background:rgba(110,160,255,0.2);border:1px solid #a8c4f0"></div>
<div style="left:798.3px;top:70px;width:1.7px;height:407px;background:#6a6a64"></div>
</body></html>
